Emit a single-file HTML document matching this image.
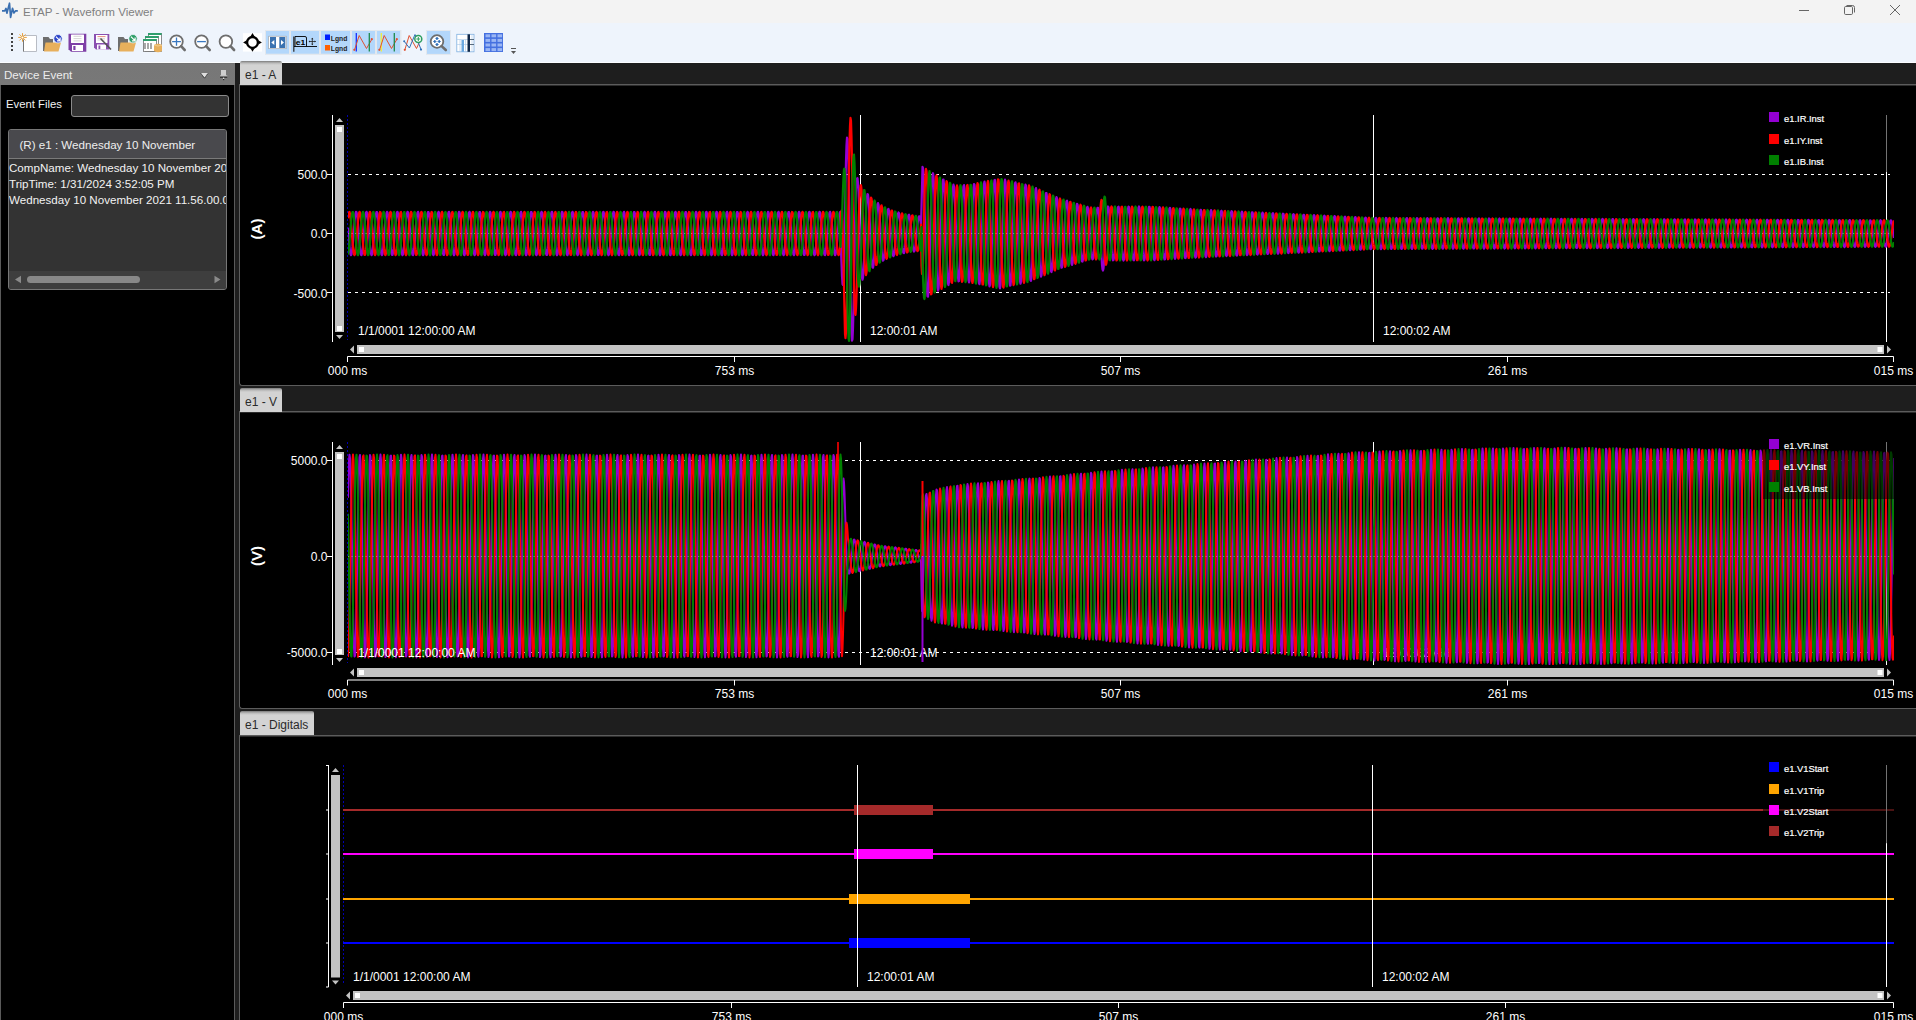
<!DOCTYPE html><html><head><meta charset="utf-8"><style>
html,body{margin:0;padding:0;width:1916px;height:1020px;overflow:hidden;background:#000;font-family:"Liberation Sans", sans-serif}
.a{position:absolute}
.t{position:absolute;white-space:pre;line-height:12px;font-family:"Liberation Sans", sans-serif}
</style></head><body>
<div class="a" style="left:0;top:0;width:1916px;height:23px;background:#f3f3f3"></div><div class="t" style="left:23px;top:6px;font-size:11.6px;color:#808080;font-weight:400;">ETAP - Waveform Viewer</div><div class="a" style="left:0;top:23px;width:1916px;height:39px;background:#eef4fc"></div><div class="a" style="left:0;top:62px;width:1916px;height:1px;background:#fbfdff"></div><svg class="a" style="left:0;top:0" width="600" height="63" viewBox="0 0 600 63"><polyline points="2,10.9 4.8,10.9 6,8.4 6.9,13.2 9.5,3.2 10.6,17.4 12.5,8.3 13.9,13 15.4,10.9 17.8,10.9" fill="none" stroke="#3a6fb0" stroke-width="1.7" stroke-linejoin="round"/><rect x="11" y="33" width="2" height="2" fill="#444"/><rect x="11" y="37" width="2" height="2" fill="#444"/><rect x="11" y="41" width="2" height="2" fill="#444"/><rect x="11" y="45" width="2" height="2" fill="#444"/><rect x="11" y="49" width="2" height="2" fill="#444"/><path d="M23.5 35.5 H36.5 V51.5 H23.5 Z" fill="#fff" stroke="#b8bcc4" stroke-width="1"/><line x1="23.5" y1="40" x2="23.5" y2="51.5" stroke="#777" stroke-width="1"/><line x1="18.20" y1="37.40" x2="26.80" y2="37.40" stroke="#e8a23e" stroke-width="1"/><line x1="19.46" y1="34.36" x2="25.54" y2="40.44" stroke="#e8a23e" stroke-width="1"/><line x1="22.50" y1="33.10" x2="22.50" y2="41.70" stroke="#e8a23e" stroke-width="1"/><line x1="25.54" y1="34.36" x2="19.46" y2="40.44" stroke="#e8a23e" stroke-width="1"/><circle cx="22.5" cy="37.4" r="1" fill="#fff"/><path d="M43 37 H48.5 L50 39 H53 V51 H43 Z" fill="#6e6e6e"/><path d="M44 51.5 L45.5 42.5 H61 L58.5 51.5 Z" fill="#e8b05c"/><circle cx="58" cy="38.7" r="4.2" fill="#2b45c9" stroke="#eef4fc" stroke-width="0.8"/><path d="M55.9 36.6 L59.9 40.6 M56.9 40.8 H60.1 V37.6" fill="none" stroke="#fff" stroke-width="1.2"/><path d="M118 37 H123.5 L125 39 H128 V51 H118 Z" fill="#6e6e6e"/><path d="M119 51.5 L120.5 42.5 H136 L133.5 51.5 Z" fill="#e8b05c"/><circle cx="133" cy="38.7" r="4.2" fill="#2e9e68" stroke="#eef4fc" stroke-width="0.8"/><path d="M130.9 36.6 L134.9 40.6 M131.9 40.8 H135.1 V37.6" fill="none" stroke="#fff" stroke-width="1.2"/><path d="M68.5 33.7 H86.3 V51.7 H71 L68.5 49.2 Z" fill="#7e3fa6"/><rect x="71" y="34.6" width="13" height="8.4" fill="#fff" rx="0.5"/><path d="M73.5 36.3 H81.5 M73.5 38.6 H81.5 M73.5 40.9 H81.5" stroke="#a0a0a0" stroke-width="0.45"/><rect x="72" y="45" width="11" height="6" fill="#fff"/><rect x="73.3" y="46" width="2.2" height="4" fill="#7e3fa6"/><path d="M94 34 H109.3 V49.5 H96 L94 47.5 Z" fill="#8a4fb0"/><rect x="96" y="35" width="11.5" height="8" fill="#fff"/><line x1="97.5" y1="36.6" x2="105.5" y2="36.6" stroke="#e0604a" stroke-width="0.7"/><path d="M97.5 38.5 H105 M97.5 40 H105" stroke="#bbb" stroke-width="0.5"/><rect x="97" y="44.5" width="9" height="5" fill="#fff"/><rect x="98.5" y="45.5" width="1.8" height="3.5" fill="#8a4fb0"/><line x1="100.5" y1="38.5" x2="111" y2="49.5" stroke="#555" stroke-width="1.6"/><rect x="148.4" y="33.4" width="13" height="18" fill="#fff" stroke="#6e6e6e" stroke-width="0.8"/><rect x="148" y="33" width="13.6" height="2" fill="#2f9e6c"/><rect x="145.4" y="36.4" width="13" height="15" fill="#fff" stroke="#6e6e6e" stroke-width="0.8"/><rect x="145" y="36" width="13.6" height="2" fill="#2f9e6c"/><rect x="143.4" y="39.4" width="13" height="12" fill="#fff" stroke="#6e6e6e" stroke-width="0.8"/><rect x="143" y="39" width="13.6" height="2" fill="#2f9e6c"/><path d="M145 43 v6 M148 43 v6 M151 43 v6" stroke="#6e6e6e" stroke-width="1.2"/><path d="M154 45 Q158 42.5 162 45 V51 Q158 53.5 154 51 Z" fill="#e8b05c"/><path d="M154 45 Q158 47 162 45" fill="none" stroke="#f5d9a8" stroke-width="0.7"/><circle cx="176.5" cy="41.6" r="6.3" fill="#fff" stroke="#6e6e6e" stroke-width="1.8"/><line x1="181.1" y1="46.2" x2="184.7" y2="50" stroke="#6e6e6e" stroke-width="2.6" stroke-linecap="round"/><path d="M172.1 41.6 H180.9 M176.5 37.4 V45.8" stroke="#3a78c0" stroke-width="1.3"/><circle cx="201.5" cy="41.6" r="6.3" fill="#fff" stroke="#6e6e6e" stroke-width="1.8"/><line x1="206.1" y1="46.2" x2="209.7" y2="50" stroke="#6e6e6e" stroke-width="2.6" stroke-linecap="round"/><path d="M197.1 41.6 H205.9" stroke="#3a78c0" stroke-width="1.3"/><circle cx="225.9" cy="41.6" r="6.3" fill="#fff" stroke="#6e6e6e" stroke-width="1.8"/><line x1="230.5" y1="46.2" x2="234.1" y2="50" stroke="#6e6e6e" stroke-width="2.6" stroke-linecap="round"/><rect x="243" y="33.2" width="19" height="18.4" fill="#fff"/><circle cx="252.5" cy="42.4" r="5.4" fill="#fff" stroke="#000" stroke-width="2.3"/><path d="M252.5 33 L254.6 36.6 H250.4 Z M252.5 51.8 L254.6 48.2 H250.4 Z M243.1 42.4 L246.7 40.3 V44.5 Z M261.9 42.4 L258.3 40.3 V44.5 Z" fill="#000"/><rect x="265" y="30" width="86" height="25" fill="#e3e8ee"/><rect x="351" y="30" width="50.5" height="25" fill="#e3e8ee"/><rect x="266" y="31" width="23" height="22.7" fill="#b3d7fb"/><rect x="291" y="31" width="28" height="22.7" fill="#b3d7fb"/><rect x="321" y="31" width="29" height="22.7" fill="#b3d7fb"/><rect x="352" y="31" width="23" height="22.7" fill="#b3d7fb"/><rect x="377" y="31" width="23" height="22.7" fill="#b3d7fb"/><rect x="268.7" y="36.2" width="17.5" height="12.5" fill="#fff" stroke="#a0a0a0" stroke-width="0.6"/><rect x="270" y="37" width="6" height="11" fill="#3a72b0"/><rect x="279.3" y="37" width="6" height="11" fill="#3a72b0"/><path d="M271.3 42.5 L274.3 40 V45 Z M284 42.5 L281 40 V45 Z" fill="#fff"/><line x1="293.8" y1="36.5" x2="293.8" y2="51.7" stroke="#333" stroke-width="1.3"/><line x1="294" y1="46.5" x2="317" y2="46.5" stroke="#000" stroke-width="0.9"/><path d="M295 46.5 V36.5 H305 Q306.5 36.5 306.5 38 V46.5" fill="none" stroke="#000" stroke-width="0.9"/><text x="295.8" y="44.8" font-family="Liberation Sans" font-size="7.6" font-weight="700" fill="#000" textLength="9.5" lengthAdjust="spacingAndGlyphs">e1</text><path d="M309 41.5 H315.5 M312.3 38.3 V44.7" stroke="#222" stroke-width="0.8"/><path d="M312.3 37.8 L311.2 39.2 H313.4 Z M312.3 45.2 L311.2 43.8 H313.4 Z M308.6 41.5 L310 40.4 V42.6 Z M316 41.5 L314.6 40.4 V42.6 Z" fill="#222"/><rect x="325" y="34.5" width="5" height="5.5" fill="#0020ff"/><rect x="325" y="45" width="5" height="5.5" fill="#ff6000"/><text x="330.8" y="40.6" font-family="Liberation Sans" font-size="8" font-weight="700" fill="#222" textLength="16.5" lengthAdjust="spacingAndGlyphs">Lgnd</text><text x="330.8" y="50.9" font-family="Liberation Sans" font-size="8" font-weight="700" fill="#222" textLength="16.5" lengthAdjust="spacingAndGlyphs">Lgnd</text><line x1="356.3" y1="33" x2="356.3" y2="51.5" stroke="#1530ff" stroke-width="1.3"/><polyline points="354.5,50 359.2,35.5 366.5,48.5 372,39" fill="none" stroke="#e05030" stroke-width="1"/><circle cx="354.3" cy="49.8" r="1.1" fill="#e05030"/><circle cx="371.8" cy="39.2" r="1.1" fill="#e05030"/><line x1="369.3" y1="33" x2="369.3" y2="51.5" stroke="#1e8a4e" stroke-width="1.3"/><line x1="381.3" y1="33" x2="381.3" y2="51.5" stroke="#f0f040" stroke-width="1.3"/><polyline points="379.5,50 384.2,35.5 391.5,48.5 397,39" fill="none" stroke="#e05030" stroke-width="1"/><circle cx="379.3" cy="49.8" r="1.1" fill="#e05030"/><circle cx="396.8" cy="39.2" r="1.1" fill="#e05030"/><line x1="394.3" y1="33" x2="394.3" y2="51.5" stroke="#1e8a4e" stroke-width="1.3"/><polyline points="404.8,50 409.2,35.5 416.5,48.5 419,43" fill="none" stroke="#e05030" stroke-width="1"/><circle cx="404.8" cy="49.8" r="1.1" fill="#e05030"/><polyline points="404,41 409.4,48 415,34.5 421.2,49.8" fill="none" stroke="#3070b8" stroke-width="1"/><circle cx="421" cy="49.6" r="1.1" fill="#3070b8"/><circle cx="404.2" cy="41.2" r="1" fill="#3070b8"/><circle cx="418.3" cy="39" r="3.5" fill="#fff" stroke="#2e9e60" stroke-width="1.5"/><path d="M416.3 39 H420.3 M418.3 37 V41" stroke="#2e9e60" stroke-width="1"/><rect x="426" y="30" width="25" height="25" fill="#e3e8ee"/><rect x="427" y="31" width="23" height="22.9" fill="#b3d7fb"/><circle cx="437" cy="41.5" r="6.3" fill="#fff" stroke="#6e6e6e" stroke-width="1.8"/><line x1="441.6" y1="46.1" x2="445.8" y2="50" stroke="#6e6e6e" stroke-width="2.6" stroke-linecap="round"/><path d="M437 37.2 l1.3 1.3 -1.3 1.3 -1.3 -1.3Z M437 43.2 l1.3 1.3 -1.3 1.3 -1.3 -1.3Z M433.5 41.5 l1.3 -1.3 1.3 1.3 -1.3 1.3Z M440.5 41.5 l-1.3 -1.3 -1.3 1.3 1.3 1.3Z" fill="#2f6fb8" stroke="#2f6fb8" stroke-width="0.8"/><rect x="456.8" y="34.3" width="17.2" height="17.5" fill="#fff" stroke="#7fb0e0" stroke-width="0.8"/><path d="M457 39.5 H474 M457 44.5 H474 M460 39.5 V51.5 M465.5 39.5 V51.5 M472 34.5 V51.5" stroke="#a8c8e8" stroke-width="0.6"/><rect x="461.5" y="40" width="2.5" height="11.8" fill="#6aa8e0"/><rect x="467.5" y="34.3" width="2.5" height="17.5" fill="#102848"/><path d="M470 39.5 H474 M470 44.5 H474" stroke="#123" stroke-width="0.6"/><rect x="484" y="33" width="19" height="19" fill="#4470e0"/><rect x="485.5" y="34.3" width="4.6" height="3" fill="#9ab6f4"/><rect x="491.5" y="34.3" width="4.6" height="3" fill="#9ab6f4"/><rect x="497.5" y="34.3" width="4.6" height="3" fill="#9ab6f4"/><rect x="485.5" y="38.9" width="4.6" height="3" fill="#9ab6f4"/><rect x="491.5" y="38.9" width="4.6" height="3" fill="#9ab6f4"/><rect x="497.5" y="38.9" width="4.6" height="3" fill="#9ab6f4"/><rect x="485.5" y="43.5" width="4.6" height="3" fill="#9ab6f4"/><rect x="491.5" y="43.5" width="4.6" height="3" fill="#9ab6f4"/><rect x="497.5" y="43.5" width="4.6" height="3" fill="#9ab6f4"/><rect x="485.5" y="48.099999999999994" width="4.6" height="3" fill="#9ab6f4"/><rect x="491.5" y="48.099999999999994" width="4.6" height="3" fill="#9ab6f4"/><rect x="497.5" y="48.099999999999994" width="4.6" height="3" fill="#9ab6f4"/><rect x="511" y="48" width="5" height="1" fill="#555"/><path d="M511 51 H516 L513.5 54 Z" fill="#555"/></svg><svg class="a" style="left:1780px;top:0" width="136" height="23" viewBox="1780 0 136 23"><line x1="1799" y1="10.5" x2="1809" y2="10.5" stroke="#666" stroke-width="1"/><rect x="1844.5" y="6.5" width="8" height="8" rx="1.2" fill="none" stroke="#666" stroke-width="1"/><path d="M1846.5 5.5 H1852.5 Q1854.5 5.5 1854.5 7.5 V12.5" fill="none" stroke="#666" stroke-width="1"/><path d="M1890 5 L1900 15 M1900 5 L1890 15" stroke="#666" stroke-width="1"/></svg><div class="a" style="left:0;top:63px;width:235px;height:957px;background:#000"></div><div class="a" style="left:0;top:63px;width:1px;height:957px;background:#5a5a5a"></div><div class="a" style="left:234px;top:85px;width:1px;height:935px;background:#5a5a5a"></div><div class="a" style="left:0;top:63px;width:235px;height:22px;background:linear-gradient(#6c6c6c 0,#777 1px,#787878 100%)"></div><div class="t" style="left:4px;top:69px;font-size:11.6px;color:#ececec;font-weight:400;">Device Event</div><svg class="a" style="left:0;top:63px" width="235" height="30" viewBox="0 63 235 30"><path d="M200.8 72.9 H208.1 L204.45 77.9 Z" fill="#dedede"/><path d="M201 73.5 L204.45 78.2 L207.9 73.5" fill="none" stroke="#111" stroke-width="0.9" stroke-dasharray="1 0.6"/><rect x="221" y="70" width="5" height="5.6" fill="#cfcfcf"/><rect x="220" y="75.5" width="7.2" height="1.1" fill="#e0e0e0"/><rect x="220" y="76.6" width="7.2" height="1" fill="#111"/><rect x="223" y="77.6" width="1.2" height="1.5" fill="#ddd"/><rect x="223" y="79.2" width="1.2" height="0.9" fill="#111"/></svg><div class="t" style="left:6px;top:98px;font-size:11.3px;color:#f2f2f2;font-weight:400;">Event Files</div><div class="a" style="left:71px;top:95px;width:156px;height:20px;background:#333;border:1px solid #8a8a8a;border-radius:3px"></div><div class="a" style="left:8px;top:129px;width:217px;height:159px;background:#333;border:1px solid #777;border-radius:3px;overflow:hidden"><div class="a" style="left:0;top:0;width:217px;height:28px;background:#49494d;border-bottom:1px solid #7a7a7a"></div><div class="a" style="left:0;top:141px;width:217px;height:18px;background:#3e3e3e"></div></div><div class="t" style="left:19.5px;top:139px;font-size:11.6px;color:#eee;font-weight:400;">(R) e1 : Wednesday 10 November</div><svg class="a" style="left:0;top:265px" width="235" height="30" viewBox="0 265 235 30"><path d="M15 279.5 L21 275.8 V283.2 Z" fill="#8a8a8a"/><path d="M220.5 279.5 L214.5 275.8 V283.2 Z" fill="#8a8a8a"/><rect x="27" y="276" width="113" height="7" rx="3.5" fill="#888"/></svg><div class="a" style="left:9px;top:158px;width:217px;height:60px;overflow:hidden"><div class="t" style="left:0px;top:4px;font-size:11.6px;color:#f2f2f2;font-weight:400;">CompName: Wednesday 10 November 2021 11.56.00.000</div><div class="t" style="left:0px;top:20px;font-size:11.6px;color:#f2f2f2;font-weight:400;">TripTime: 1/31/2024 3:52:05 PM</div><div class="t" style="left:0px;top:36px;font-size:11.6px;color:#f2f2f2;font-weight:400;">Wednesday 10 November 2021 11.56.00.000</div></div><div class="a" style="left:235px;top:63px;width:4px;height:957px;background:#1e1e1e"></div><div class="a" style="left:239px;top:63px;width:1677px;height:22px;background:#1e1e1e"></div><div class="a" style="left:239px;top:385px;width:1677px;height:27px;background:#1e1e1e"></div><div class="a" style="left:239px;top:708px;width:1677px;height:28px;background:#1e1e1e"></div><div class="a" style="left:239px;top:84px;width:1680px;height:302px;background:#000;border-left:1px solid #5c5c5c;border-bottom:1px solid #5c5c5c;border-top:1px solid #5c5c5c;border-bottom-left-radius:3px;box-sizing:border-box"></div><div class="a" style="left:239px;top:411px;width:1680px;height:298px;background:#000;border-left:1px solid #5c5c5c;border-bottom:1px solid #5c5c5c;border-top:1px solid #5c5c5c;border-bottom-left-radius:3px;box-sizing:border-box"></div><div class="a" style="left:239px;top:735px;width:1680px;height:300px;background:#000;border-left:1px solid #5c5c5c;border-top:1px solid #5c5c5c;box-sizing:border-box"></div><div class="a" style="left:240px;top:85px;width:1676px;height:1px;background:#2c2c2c"></div><div class="a" style="left:240px;top:412px;width:1676px;height:1px;background:#2c2c2c"></div><div class="a" style="left:240px;top:736px;width:1676px;height:1px;background:#2c2c2c"></div><div class="a" style="left:240px;top:61px;width:42px;height:24px;background:linear-gradient(#7a7a7a 0,#b8b8b8 2px,#d3d3d3 4px,#d3d3d3 100%);border-radius:2px 2px 0 0"></div><div class="t" style="left:245px;top:69px;font-size:12px;color:#2a2a2a;font-weight:400;">e1 - A</div><div class="a" style="left:240px;top:388px;width:42px;height:24px;background:linear-gradient(#7a7a7a 0,#b8b8b8 2px,#d3d3d3 4px,#d3d3d3 100%);border-radius:2px 2px 0 0"></div><div class="t" style="left:245px;top:396px;font-size:12px;color:#2a2a2a;font-weight:400;">e1 - V</div><div class="a" style="left:240px;top:711px;width:74px;height:24px;background:linear-gradient(#7a7a7a 0,#b8b8b8 2px,#d3d3d3 4px,#d3d3d3 100%);border-radius:2px 2px 0 0"></div><div class="t" style="left:245px;top:719px;font-size:12px;color:#2a2a2a;font-weight:400;">e1 - Digitals</div><svg class="a" style="left:0;top:0" width="1916" height="1020" viewBox="0 0 1916 1020"><defs><clipPath id="cA"><rect x="348" y="86" width="1546" height="270"/></clipPath><clipPath id="cV"><rect x="348" y="413" width="1546" height="260"/></clipPath></defs><line x1="332.5" y1="115" x2="332.5" y2="342" stroke="#fff" stroke-width="1"/><rect x="335" y="125" width="9" height="207" fill="#c3c3c3"/><polygon points="336.0,122 343.0,122 339.5,118" fill="#c3c3c3"/><polygon points="336.0,335 343.0,335 339.5,339" fill="#c3c3c3"/><rect x="337" y="127" width="5" height="5" fill="#fff"/><rect x="337" y="326" width="5" height="5" fill="#fff"/><line x1="347.5" y1="115" x2="347.5" y2="340" stroke="#0000b0" stroke-width="1" stroke-dasharray="2 2"/><polygon points="350.0,349.5 354.0,345.5 354.0,353.5" fill="#c3c3c3"/><rect x="357.0" y="345" width="1527.0" height="9" fill="#c3c3c3"/><rect x="359.0" y="347" width="5" height="5" fill="#fff"/><rect x="1877.5" y="347" width="5" height="5" fill="#fff"/><polygon points="1887,345.5 1891,349.5 1887,353.5" fill="#c3c3c3"/><line x1="347.5" y1="356.5" x2="1893.5" y2="356.5" stroke="#fff" stroke-width="1.2"/><line x1="327" y1="174.5" x2="332" y2="174.5" stroke="#fff" stroke-width="1"/><line x1="327" y1="233.5" x2="332" y2="233.5" stroke="#fff" stroke-width="1"/><line x1="327" y1="292.5" x2="332" y2="292.5" stroke="#fff" stroke-width="1"/><line x1="348" y1="174.5" x2="1890" y2="174.5" stroke="#fff" stroke-width="1" stroke-dasharray="3 4"/><line x1="348" y1="292.5" x2="1890" y2="292.5" stroke="#fff" stroke-width="1" stroke-dasharray="3 4"/><line x1="347.5" y1="356.5" x2="347.5" y2="362" stroke="#fff" stroke-width="1"/><line x1="734.5" y1="356.5" x2="734.5" y2="362" stroke="#fff" stroke-width="1"/><line x1="1120.5" y1="356.5" x2="1120.5" y2="362" stroke="#fff" stroke-width="1"/><line x1="1507.5" y1="356.5" x2="1507.5" y2="362" stroke="#fff" stroke-width="1"/><line x1="1893.5" y1="356.5" x2="1893.5" y2="362" stroke="#fff" stroke-width="1"/><line x1="860.5" y1="115" x2="860.5" y2="342" stroke="#fff" stroke-width="1"/><line x1="1373.5" y1="115" x2="1373.5" y2="342" stroke="#fff" stroke-width="1"/><line x1="1886.5" y1="115" x2="1886.5" y2="342" stroke="#fff" stroke-width="1"/><text x="870" y="335.2" font-family="Liberation Sans" font-size="12" fill="#fff">12:00:01 AM</text><text x="1383" y="335.2" font-family="Liberation Sans" font-size="12" fill="#fff">12:00:02 AM</text><g clip-path="url(#cA)"><path d="M348.0 227.7l.5 6.5 .5 6.5 .5 5.8 .5 4.6 .5 3.0 .5 1.1 .5 -.9 .5 -2.9 .5 -4.5 .5 -5.7 .5 -6.4 .5 -6.6 .5 -6.1 .5 -5.0 .5 -3.5 .5 -1.7 .5 .3 .5 2.3 .5 4.1 .5 5.4 .5 6.3 .5 6.6 .5 6.2 .5 5.4 .5 4.0 .5 2.3 .5 .3 .5 -1.7 .5 -3.6 .5 -5.0 .5 -6.1 .5 -6.6 .5 -6.4 .5 -5.7 .5 -4.5 .5 -2.8 .5 -.9 .5 1.1 .5 3.0 .5 4.7 .5 5.8 .5 6.5 .5 6.5 .5 6.0 .5 4.9 .5 3.4 .5 1.4 .5 -.5 .5 -2.5 .5 -4.1 .5 -5.6 .5 -6.3 .5 -6.6 .5 -6.2 .5 -5.3 .5 -3.8 .5 -2.1 .5 -.1 .5 1.9 .5 3.7 .5 5.2 .5 6.2 .5 6.5 .5 6.4 .5 5.7 .5 4.3 .5 2.6 .5 .7 .5 -1.3 .5 -3.2 .5 -4.8 .5 -5.9 .5 -6.6 .5 -6.5 .5 -5.9 .5 -4.7 .5 -3.2 .5 -1.3 .5 .7 .5 2.7 .5 4.3 .5 5.7 .5 6.4 .5 6.6 .5 6.1 .5 5.2 .5 3.6 .5 1.9 .5 -.1 .5 -2.1 .5 -3.9 .5 -5.3 .5 -6.2 .5 -6.6 .5 -6.3 .5 -5.6 .5 -4.1 .5 -2.4 .5 -.5 .5 1.5 .5 3.4 .5 4.9 .5 6.0 .5 6.5 .5 6.5 .5 5.8 .5 4.6 .5 3.0 .5 1.1 .5 -.9 .5 -2.9 .5 -4.5 .5 -5.7 .5 -6.4 .5 -6.6 .5 -6.1 .5 -5.0 .5 -3.5 .5 -1.7 .5 .3 .5 2.3 .5 4.1 .5 5.4 .5 6.3 .5 6.6 .5 6.2 .5 5.4 .5 4.0 .5 2.3 .5 .3 .5 -1.7 .5 -3.6 .5 -5.0 .5 -6.1 .5 -6.6 .5 -6.4 .5 -5.7 .5 -4.5 .5 -2.8 .5 -.9 .5 1.1 .5 3.0 .5 4.7 .5 5.8 .5 6.5 .5 6.5 .5 6.0 .5 4.9 .5 3.4 .5 1.4 .5 -.5 .5 -2.5 .5 -4.1 .5 -5.6 .5 -6.3 .5 -6.6 .5 -6.2 .5 -5.3 .5 -3.8 .5 -2.1 .5 -.1 .5 1.9 .5 3.7 .5 5.2 .5 6.2 .5 6.5 .5 6.4 .5 5.7 .5 4.3 .5 2.6 .5 .7 .5 -1.3 .5 -3.2 .5 -4.8 .5 -5.9 .5 -6.6 .5 -6.5 .5 -5.9 .5 -4.7 .5 -3.2 .5 -1.3 .5 .7 .5 2.7 .5 4.3 .5 5.7 .5 6.4 .5 6.6 .5 6.1 .5 5.2 .5 3.6 .5 1.9 .5 -.1 .5 -2.1 .5 -3.9 .5 -5.3 .5 -6.2 .5 -6.6 .5 -6.3 .5 -5.6 .5 -4.1 .5 -2.4 .5 -.5 .5 1.5 .5 3.4 .5 4.9 .5 6.0 .5 6.5 .5 6.5 .5 5.8 .5 4.6 .5 3.0 .5 1.1 .5 -.9 .5 -2.9 .5 -4.5 .5 -5.7 .5 -6.4 .5 -6.6 .5 -6.1 .5 -5.0 .5 -3.5 .5 -1.7 .5 .3 .5 2.3 .5 4.1 .5 5.4 .5 6.3 .5 6.6 .5 6.2 .5 5.4 .5 4.0 .5 2.3 .5 .3 .5 -1.7 .5 -3.6 .5 -5.0 .5 -6.1 .5 -6.6 .5 -6.4 .5 -5.7 .5 -4.5 .5 -2.8 .5 -.9 .5 1.1 .5 3.0 .5 4.7 .5 5.8 .5 6.5 .5 6.5 .5 6.0 .5 4.9 .5 3.4 .5 1.4 .5 -.5 .5 -2.5 .5 -4.1 .5 -5.6 .5 -6.3 .5 -6.6 .5 -6.2 .5 -5.3 .5 -3.8 .5 -2.1 .5 -.1 .5 1.9 .5 3.7 .5 5.2 .5 6.2 .5 6.5 .5 6.4 .5 5.7 .5 4.3 .5 2.6 .5 .7 .5 -1.3 .5 -3.2 .5 -4.8 .5 -5.9 .5 -6.6 .5 -6.5 .5 -5.9 .5 -4.7 .5 -3.2 .5 -1.3 .5 .7 .5 2.7 .5 4.3 .5 5.7 .5 6.4 .5 6.6 .5 6.1 .5 5.2 .5 3.6 .5 1.9 .5 -.1 .5 -2.1 .5 -3.9 .5 -5.3 .5 -6.2 .5 -6.6 .5 -6.3 .5 -5.6 .5 -4.1 .5 -2.4 .5 -.5 .5 1.5 .5 3.4 .5 4.9 .5 6.0 .5 6.5 .5 6.5 .5 5.8 .5 4.6 .5 3.0 .5 1.1 .5 -.9 .5 -2.9 .5 -4.5 .5 -5.7 .5 -6.4 .5 -6.6 .5 -6.1 .5 -5.0 .5 -3.5 .5 -1.7 .5 .3 .5 2.3 .5 4.1 .5 5.4 .5 6.3 .5 6.6 .5 6.2 .5 5.4 .5 4.0 .5 2.3 .5 .3 .5 -1.7 .5 -3.6 .5 -5.0 .5 -6.1 .5 -6.6 .5 -6.4 .5 -5.7 .5 -4.5 .5 -2.8 .5 -.9 .5 1.1 .5 3.0 .5 4.7 .5 5.8 .5 6.5 .5 6.5 .5 6.0 .5 4.9 .5 3.4 .5 1.4 .5 -.5 .5 -2.5 .5 -4.1 .5 -5.6 .5 -6.3 .5 -6.6 .5 -6.2 .5 -5.3 .5 -3.8 .5 -2.1 .5 -.1 .5 1.9 .5 3.7 .5 5.2 .5 6.2 .5 6.5 .5 6.4 .5 5.7 .5 4.3 .5 2.6 .5 .7 .5 -1.3 .5 -3.2 .5 -4.8 .5 -5.9 .5 -6.6 .5 -6.5 .5 -5.9 .5 -4.7 .5 -3.2 .5 -1.3 .5 .7 .5 2.7 .5 4.3 .5 5.7 .5 6.4 .5 6.6 .5 6.1 .5 5.2 .5 3.6 .5 1.9 .5 -.1 .5 -2.1 .5 -3.9 .5 -5.3 .5 -6.2 .5 -6.6 .5 -6.3 .5 -5.6 .5 -4.1 .5 -2.4 .5 -.5 .5 1.5 .5 3.4 .5 4.9 .5 6.0 .5 6.5 .5 6.5 .5 5.8 .5 4.6 .5 3.0 .5 1.1 .5 -.9 .5 -2.9 .5 -4.5 .5 -5.7 .5 -6.4 .5 -6.6 .5 -6.1 .5 -5.0 .5 -3.5 .5 -1.7 .5 .3 .5 2.3 .5 4.1 .5 5.4 .5 6.3 .5 6.6 .5 6.2 .5 5.4 .5 4.0 .5 2.3 .5 .3 .5 -1.7 .5 -3.6 .5 -5.0 .5 -6.1 .5 -6.6 .5 -6.4 .5 -5.7 .5 -4.5 .5 -2.8 .5 -.9 .5 1.1 .5 3.0 .5 4.7 .5 5.8 .5 6.5 .5 6.5 .5 6.0 .5 4.9 .5 3.4 .5 1.4 .5 -.5 .5 -2.5 .5 -4.1 .5 -5.6 .5 -6.3 .5 -6.6 .5 -6.2 .5 -5.3 .5 -3.8 .5 -2.1 .5 -.1 .5 1.9 .5 3.7 .5 5.2 .5 6.2 .5 6.5 .5 6.4 .5 5.7 .5 4.3 .5 2.6 .5 .7 .5 -1.3 .5 -3.2 .5 -4.8 .5 -5.9 .5 -6.6 .5 -6.5 .5 -5.9 .5 -4.7 .5 -3.2 .5 -1.3 .5 .7 .5 2.7 .5 4.3 .5 5.7 .5 6.4 .5 6.6 .5 6.1 .5 5.2 .5 3.6 .5 1.9 .5 -.1 .5 -2.1 .5 -3.9 .5 -5.3 .5 -6.2 .5 -6.6 .5 -6.3 .5 -5.6 .5 -4.1 .5 -2.4 .5 -.5 .5 1.5 .5 3.4 .5 4.9 .5 6.0 .5 6.5 .5 6.5 .5 5.8 .5 4.6 .5 3.0 .5 1.1 .5 -.9 .5 -2.9 .5 -4.5 .5 -5.7 .5 -6.4 .5 -6.6 .5 -6.1 .5 -5.0 .5 -3.5 .5 -1.7 .5 .3 .5 2.3 .5 4.1 .5 5.4 .5 6.3 .5 6.6 .5 6.2 .5 5.4 .5 4.0 .5 2.3 .5 .3 .5 -1.7 .5 -3.6 .5 -5.0 .5 -6.1 .5 -6.6 .5 -6.4 .5 -5.7 .5 -4.5 .5 -2.8 .5 -.9 .5 1.1 .5 3.0 .5 4.7 .5 5.8 .5 6.5 .5 6.5 .5 6.0 .5 4.9 .5 3.4 .5 1.4 .5 -.5 .5 -2.5 .5 -4.1 .5 -5.6 .5 -6.3 .5 -6.6 .5 -6.2 .5 -5.3 .5 -3.8 .5 -2.1 .5 -.1 .5 1.9 .5 3.7 .5 5.2 .5 6.2 .5 6.5 .5 6.4 .5 5.7 .5 4.3 .5 2.6 .5 .7 .5 -1.3 .5 -3.2 .5 -4.8 .5 -5.9 .5 -6.6 .5 -6.5 .5 -5.9 .5 -4.7 .5 -3.2 .5 -1.3 .5 .7 .5 2.7 .5 4.3 .5 5.7 .5 6.4 .5 6.6 .5 6.1 .5 5.2 .5 3.6 .5 1.9 .5 -.1 .5 -2.1 .5 -3.9 .5 -5.3 .5 -6.2 .5 -6.6 .5 -6.3 .5 -5.6 .5 -4.1 .5 -2.4 .5 -.5 .5 1.5 .5 3.4 .5 4.9 .5 6.0 .5 6.5 .5 6.5 .5 5.8 .5 4.6 .5 3.0 .5 1.1 .5 -.9 .5 -2.9 .5 -4.5 .5 -5.7 .5 -6.4 .5 -6.6 .5 -6.1 .5 -5.0 .5 -3.5 .5 -1.7 .5 .3 .5 2.3 .5 4.1 .5 5.4 .5 6.3 .5 6.6 .5 6.2 .5 5.4 .5 4.0 .5 2.3 .5 .3 .5 -1.7 .5 -3.6 .5 -5.0 .5 -6.1 .5 -6.6 .5 -6.4 .5 -5.7 .5 -4.5 .5 -2.8 .5 -.9 .5 1.1 .5 3.0 .5 4.7 .5 5.8 .5 6.5 .5 6.5 .5 6.0 .5 4.9 .5 3.4 .5 1.4 .5 -.5 .5 -2.5 .5 -4.1 .5 -5.6 .5 -6.3 .5 -6.6 .5 -6.2 .5 -5.3 .5 -3.8 .5 -2.1 .5 -.1 .5 1.9 .5 3.7 .5 5.2 .5 6.2 .5 6.5 .5 6.4 .5 5.7 .5 4.3 .5 2.6 .5 .7 .5 -1.3 .5 -3.2 .5 -4.8 .5 -5.9 .5 -6.6 .5 -6.5 .5 -5.9 .5 -4.7 .5 -3.2 .5 -1.3 .5 .7 .5 2.7 .5 4.3 .5 5.7 .5 6.4 .5 6.6 .5 6.1 .5 5.2 .5 3.6 .5 1.9 .5 -.1 .5 -2.1 .5 -3.9 .5 -5.3 .5 -6.2 .5 -6.6 .5 -6.3 .5 -5.6 .5 -4.1 .5 -2.4 .5 -.5 .5 1.5 .5 3.4 .5 4.9 .5 6.0 .5 6.5 .5 6.5 .5 5.8 .5 4.6 .5 3.0 .5 1.1 .5 -.9 .5 -2.9 .5 -4.5 .5 -5.7 .5 -6.4 .5 -6.6 .5 -6.1 .5 -5.0 .5 -3.5 .5 -1.7 .5 .3 .5 2.3 .5 4.1 .5 5.4 .5 6.3 .5 6.6 .5 6.2 .5 5.4 .5 4.0 .5 2.3 .5 .3 .5 -1.7 .5 -3.6 .5 -5.0 .5 -6.1 .5 -6.6 .5 -6.4 .5 -5.7 .5 -4.5 .5 -2.8 .5 -.9 .5 1.1 .5 3.0 .5 4.7 .5 5.8 .5 6.5 .5 6.5 .5 6.0 .5 4.9 .5 3.4 .5 1.4 .5 -.5 .5 -2.5 .5 -4.1 .5 -5.6 .5 -6.3 .5 -6.6 .5 -6.2 .5 -5.3 .5 -3.8 .5 -2.1 .5 -.1 .5 1.9 .5 3.7 .5 5.2 .5 6.2 .5 6.5 .5 6.4 .5 5.7 .5 4.3 .5 2.6 .5 .7 .5 -1.3 .5 -3.2 .5 -4.8 .5 -5.9 .5 -6.6 .5 -6.5 .5 -5.9 .5 -4.7 .5 -3.2 .5 -1.3 .5 .7 .5 2.7 .5 4.3 .5 5.7 .5 6.4 .5 6.6 .5 6.1 .5 5.2 .5 3.6 .5 1.9 .5 -.1 .5 -2.1 .5 -3.9 .5 -5.3 .5 -6.2 .5 -6.6 .5 -6.3 .5 -5.6 .5 -4.1 .5 -2.4 .5 -.5 .5 1.5 .5 3.4 .5 4.9 .5 6.0 .5 6.5 .5 6.5 .5 5.8 .5 4.6 .5 3.0 .5 1.1 .5 -.9 .5 -2.9 .5 -4.5 .5 -5.7 .5 -6.4 .5 -6.6 .5 -6.1 .5 -5.0 .5 -3.5 .5 -1.7 .5 .3 .5 2.3 .5 4.1 .5 5.4 .5 6.3 .5 6.6 .5 6.2 .5 5.4 .5 4.0 .5 2.3 .5 .3 .5 -1.7 .5 -3.6 .5 -5.0 .5 -6.1 .5 -6.6 .5 -6.4 .5 -5.7 .5 -4.5 .5 -2.8 .5 -.9 .5 1.1 .5 3.0 .5 4.7 .5 5.8 .5 6.5 .5 6.5 .5 6.0 .5 4.9 .5 3.4 .5 1.4 .5 -.5 .5 -2.5 .5 -4.1 .5 -5.6 .5 -6.3 .5 -6.6 .5 -6.2 .5 -5.3 .5 -3.8 .5 -2.1 .5 -.1 .5 1.9 .5 3.7 .5 5.2 .5 6.2 .5 6.5 .5 6.4 .5 5.7 .5 4.3 .5 2.6 .5 .7 .5 -1.3 .5 -3.2 .5 -4.8 .5 -5.9 .5 -6.6 .5 -6.5 .5 -5.9 .5 -4.7 .5 -3.2 .5 -1.3 .5 .7 .5 2.7 .5 4.3 .5 5.7 .5 6.4 .5 6.6 .5 6.1 .5 5.2 .5 3.6 .5 1.9 .5 -.1 .5 -2.1 .5 -3.9 .5 -5.3 .5 -6.2 .5 -6.6 .5 -6.3 .5 -5.6 .5 -4.1 .5 -2.4 .5 -.5 .5 1.5 .5 3.4 .5 4.9 .5 6.0 .5 6.5 .5 6.5 .5 5.8 .5 4.6 .5 3.0 .5 1.1 .5 -.9 .5 -2.9 .5 -4.5 .5 -5.7 .5 -6.4 .5 -6.6 .5 -6.1 .5 -5.0 .5 -3.5 .5 -1.7 .5 .3 .5 2.3 .5 4.1 .5 5.4 .5 6.3 .5 6.6 .5 6.2 .5 5.4 .5 4.0 .5 2.3 .5 .3 .5 -1.7 .5 -3.6 .5 -5.0 .5 -6.1 .5 -6.6 .5 -6.4 .5 -5.7 .5 -4.5 .5 -2.8 .5 -.9 .5 1.1 .5 3.0 .5 4.7 .5 5.8 .5 6.5 .5 6.5 .5 6.0 .5 4.9 .5 3.4 .5 1.4 .5 -.5 .5 -2.5 .5 -4.1 .5 -5.6 .5 -6.3 .5 -6.6 .5 -6.2 .5 -5.3 .5 -3.8 .5 -2.1 .5 -.1 .5 39.4 .5 12.0 .5 13.0 .5 7.5 .5 1.0 .5 -7.3 .5 -16.1 .5 -24.3 .5 -28.1 .5 -26.3 .5 -22.0 .5 -15.6 .5 -7.6 .5 1.2 .5 10.0 .5 18.1 .5 24.6 .5 28.9 .5 32.4 .5 32.5 .5 28.3 .5 18.4 .5 8.7 .5 -1.5 .5 -11.0 .5 -19.2 .5 -25.3 .5 -29.5 .5 -27.2 .5 -21.3 .5 -15.7 .5 -9.0 .5 -2.5 .5 -.4 .5 4.7 .5 6.8 .5 12.9 .5 15.0 .5 15.5 .5 14.8 .5 13.1 .5 10.1 .5 6.4 .5 2.3 .5 -2.1 .5 -6.0 .5 -9.3 .5 -11.6 .5 -12.9 .5 -12.9 .5 -11.7 .5 -9.6 .5 -6.5 .5 -3.1 .5 .7 .5 4.1 .5 7.2 .5 9.5 .5 10.9 .5 11.2 .5 10.6 .5 9.0 .5 6.5 .5 3.6 .5 .5 .5 -2.7 .5 -5.5 .5 -7.7 .5 -9.2 .5 -9.9 .5 -9.5 .5 -8.4 .5 -6.5 .5 -4.0 .5 -1.3 .5 1.5 .5 4.1 .5 6.3 .5 7.8 .5 8.7 .5 8.6 .5 7.9 .5 6.3 .5 4.4 .5 1.9 .5 -.6 .5 -2.9 .5 -5.1 .5 -6.7 .5 -7.6 .5 -7.9 .5 -7.4 .5 -6.2 .5 -4.5 .5 -2.5 .5 -.2 .5 2.1 .5 4.0 .5 5.7 .5 6.8 .5 7.1 .5 7.0 .5 6.0 .5 4.7 .5 2.9 .5 .8 .5 -1.2 .5 -3.2 .5 -4.8 .5 -6.0 .5 -6.5 .5 -6.6 .5 -5.9 .5 -4.8 .5 -3.2 .5 -1.4 .5 .6 .5 2.4 .5 4.0 .5 5.3 .5 6.0 .5 6.2 .5 5.8 .5 4.9 .5 3.5 .5 1.8 .5 .1 .5 -1.8 .5 -3.4 .5 -4.6 .5 -5.5 .5 -5.9 .5 -5.6 .5 -5.0 .5 -3.7 .5 -2.3 .5 -.6 .5 1.2 .5 2.8 .5 4.0 .5 5.1 .5 5.5 .5 5.5 .5 5.0 .5 4.0 .5 2.6 .5 1.1 .5 -.6 .5 -2.2 .5 -3.6 .5 -4.6 .5 -5.2 .5 -5.4 .5 -5.0 .5 -4.1 .5 -3.0 .5 -1.5 .5 .1 .5 1.6 .5 3.1 .5 4.2 .5 -17.4 .5 -20.7 .5 -20.3 .5 1.3 .5 7.3 .5 12.5 .5 16.7 .5 19.1 .5 19.8 .5 18.7 .5 15.9 .5 11.6 .5 6.3 .5 .5 .5 -5.3 .5 -10.5 .5 -14.8 .5 -17.7 .5 -18.8 .5 -18.2 .5 -16.0 .5 -12.4 .5 -7.5 .5 -2.2 .5 3.4 .5 8.7 .5 12.9 .5 16.0 .5 17.7 .5 17.6 .5 16.0 .5 12.9 .5 8.7 .5 3.6 .5 -1.7 .5 -6.7 .5 -11.1 .5 -14.6 .5 -16.5 .5 -16.9 .5 -15.8 .5 -13.3 .5 -9.5 .5 -5.0 .5 .1 .5 5.0 .5 9.5 .5 12.9 .5 15.3 .5 16.1 .5 15.5 .5 13.4 .5 10.2 .5 6.1 .5 1.3 .5 -3.4 .5 -7.8 .5 -11.4 .5 -13.9 .5 -15.2 .5 -14.9 .5 -13.5 .5 -10.6 .5 -7.0 .5 -2.6 .5 1.9 .5 6.2 .5 9.8 .5 12.5 .5 14.2 .5 14.5 .5 13.7 .5 11.4 .5 8.2 .5 4.2 .5 -.2 .5 -4.7 .5 -8.6 .5 -11.8 .5 -13.8 .5 -14.7 .5 -14.2 .5 -12.3 .5 -9.4 .5 -5.4 .5 -1.1 .5 3.3 .5 7.5 .5 11.1 .5 13.4 .5 14.7 .5 14.6 .5 13.1 .5 10.4 .5 6.8 .5 2.4 .5 -2.0 .5 -6.4 .5 -10.1 .5 -12.9 .5 -14.6 .5 -15.0 .5 -13.9 .5 -11.5 .5 -8.1 .5 -3.9 .5 .6 .5 5.2 .5 9.2 .5 12.5 .5 14.5 .5 15.3 .5 14.6 .5 12.7 .5 9.4 .5 5.3 .5 .8 .5 -3.9 .5 -8.3 .5 -11.8 .5 -14.4 .5 -15.5 .5 -15.3 .5 -13.6 .5 -10.7 .5 -6.8 .5 -2.2 .5 2.6 .5 7.2 .5 11.0 .5 14.0 .5 15.7 .5 15.8 .5 14.5 .5 12.0 .5 8.2 .5 3.7 .5 -1.2 .5 -6.0 .5 -10.2 .5 -13.5 .5 -15.6 .5 -16.2 .5 -15.4 .5 -13.1 .5 -9.6 .5 -5.2 .5 -.3 .5 4.7 .5 9.2 .5 12.8 .5 15.4 .5 16.5 .5 16.1 .5 14.2 .5 11.0 .5 6.7 .5 1.8 .5 -3.4 .5 -8.2 .5 -12.1 .5 -15.0 .5 -16.4 .5 -16.3 .5 -14.7 .5 -11.8 .5 -7.7 .5 -3.1 .5 1.9 .5 6.7 .5 10.8 .5 13.9 .5 15.8 .5 16.1 .5 15.0 .5 12.5 .5 8.9 .5 4.4 .5 -.4 .5 -5.2 .5 -9.4 .5 -12.9 .5 -15.0 .5 -15.8 .5 -15.1 .5 -13.1 .5 -9.8 .5 -5.7 .5 -1.0 .5 3.7 .5 8.0 .5 11.7 .5 14.1 .5 15.4 .5 15.1 .5 13.5 .5 10.7 .5 6.8 .5 2.4 .5 -2.2 .5 -6.7 .5 -10.4 .5 -13.2 .5 -14.8 .5 -15.0 .5 -13.8 .5 -11.4 .5 -7.8 .5 -3.7 .5 .9 .5 5.2 .5 9.2 .5 12.2 .5 14.1 .5 14.7 .5 13.9 .5 11.9 .5 8.8 .5 4.8 .5 .4 .5 -4.0 .5 -7.9 .5 -11.0 .5 -13.3 .5 -14.1 .5 -13.7 .5 -12.0 .5 -9.3 .5 -5.8 .5 -1.6 .5 2.6 .5 6.4 .5 9.8 .5 12.1 .5 13.3 .5 13.3 .5 12.0 .5 9.8 .5 6.5 .5 2.7 .5 -1.2 .5 -5.1 .5 -8.4 .5 -11.0 .5 -12.4 .5 -12.8 .5 -11.9 .5 -10.0 .5 -7.1 .5 -3.7 .5 .1 .5 3.7 .5 7.1 .5 9.8 .5 11.4 .5 12.2 .5 11.6 .5 10.1 .5 7.6 .5 4.5 .5 1.0 .5 -2.5 .5 -5.9 .5 -8.5 .5 -10.5 .5 -11.3 .5 -11.2 .5 -10.1 .5 -8.0 .5 -5.1 .5 -2.0 .5 1.4 .5 4.7 .5 7.3 .5 9.4 .5 10.6 .5 10.7 .5 9.8 .5 8.2 .5 5.8 .5 2.8 .5 -.3 .5 -3.5 .5 -6.2 .5 -8.4 .5 -9.8 .5 -10.2 .5 -9.8 .5 -8.4 .5 -6.2 .5 -3.6 .5 -.6 .5 2.4 .5 5.2 .5 7.5 .5 9.0 .5 9.8 .5 9.5 .5 8.5 .5 6.7 .5 4.2 .5 1.4 .5 -1.5 .5 -4.2 .5 -6.5 .5 -8.3 .5 -9.1 .5 -9.3 .5 -8.4 .5 -6.9 .5 -4.8 .5 -2.1 .5 .6 .5 3.2 .5 5.6 .5 7.4 .5 8.6 .5 8.8 .5 8.3 .5 7.1 .5 5.2 .5 2.8 .5 .2 .5 -2.4 .5 -4.7 .5 -6.6 .5 -7.8 .5 -8.4 .5 -8.1 .5 -7.1 .5 -5.5 .5 -3.3 .5 -.9 .5 1.5 .5 3.8 .5 5.7 .5 7.2 .5 7.8 .5 7.8 .5 7.2 .5 5.9 .5 4.0 .5 1.7 .5 -.6 .5 -3.0 .5 -5.0 .5 -6.6 .5 -7.6 .5 -7.9 .5 -7.5 .5 -6.3 .5 -4.6 .5 -2.4 .5 -.1 .5 2.2 .5 4.5 .5 6.2 .5 7.4 .5 8.1 .5 9.6 .5 9.9 .5 9.1 .5 4.5 .5 1.2 .5 -2.3 .5 -5.4 .5 -8.2 .5 -10.1 .5 -11.1 .5 -9.6 .5 -7.3 .5 -4.4 .5 -4.0 .5 -1.6 .5 .9 .5 3.3 .5 5.4 .5 7.0 .5 8.0 .5 8.2 .5 7.7 .5 6.4 .5 4.5 .5 2.4 .5 -.2 .5 -2.6 .5 -4.8 .5 -6.6 .5 -7.8 .5 -8.2 .5 -7.9 .5 -6.8 .5 -5.2 .5 -3.0 .5 -.6 .5 1.9 .5 4.2 .5 6.1 .5 7.5 .5 8.1 .5 8.1 .5 7.2 .5 5.7 .5 3.8 .5 1.3 .5 -1.1 .5 -3.6 .5 -5.6 .5 -7.1 .5 -8.0 .5 -8.2 .5 -7.6 .5 -6.2 .5 -4.4 .5 -2.1 .5 .4 .5 2.9 .5 5.0 .5 6.7 .5 7.9 .5 8.2 .5 7.8 .5 6.7 .5 5.0 .5 2.8 .5 .3 .5 -2.1 .5 -4.4 .5 -6.3 .5 -7.6 .5 -8.1 .5 -8.0 .5 -7.2 .5 -5.5 .5 -3.5 .5 -1.1 .5 1.4 .5 3.8 .5 5.7 .5 7.3 .5 8.1 .5 8.1 .5 7.5 .5 6.0 .5 4.2 .5 1.8 .5 -.6 .5 -3.1 .5 -5.2 .5 -6.9 .5 -7.9 .5 -8.2 .5 -7.7 .5 -6.6 .5 -4.8 .5 -2.5 .5 -.1 .5 2.3 .5 4.7 .5 6.4 .5 7.7 .5 8.1 .5 7.9 .5 7.0 .5 5.3 .5 3.2 .5 .8 .5 -1.7 .5 -3.9 .5 -5.9 .5 -7.3 .5 -8.0 .5 -7.9 .5 -7.2 .5 -5.8 .5 -3.9 .5 -1.5 .5 .9 .5 3.3 .5 5.3 .5 6.8 .5 7.8 .5 7.9 .5 7.5 .5 6.1 .5 4.5 .5 2.2 .5 -.2 .5 -2.6 .5 -4.6 .5 -6.4 .5 -7.5 .5 -7.8 .5 -7.6 .5 -6.5 .5 -5.0 .5 -2.8 .5 -.6 .5 1.8 .5 4.1 .5 5.8 .5 7.1 .5 7.8 .5 7.6 .5 6.8 .5 5.4 .5 3.5 .5 1.2 .5 -1.1 .5 -3.3 .5 -5.3 .5 -6.7 .5 -7.5 .5 -7.7 .5 -7.0 .5 -5.9 .5 -4.0 .5 -1.9 .5 .4 .5 2.7 .5 4.7 .5 6.2 .5 7.3 .5 7.6 .5 7.2 .5 6.1 .5 4.6 .5 2.6 .5 .2 .5 -1.9 .5 -4.1 .5 -5.8 .5 -6.9 .5 -7.5 .5 -7.3 .5 -6.4 .5 -5.1 .5 -3.1 .5 -1.0 .5 1.3 .5 3.4 .5 5.3 .5 6.5 .5 7.3 .5 7.4 .5 6.7 .5 5.4 .5 3.7 .5 1.6 .5 -.6 .5 -2.8 .5 -4.7 .5 -6.1 .5 -7.0 .5 -7.3 .5 -6.9 .5 -5.8 .5 -4.2 .5 -2.3 .5 .0 .5 2.1 .5 4.1 .5 5.7 .5 6.7 .5 7.2 .5 7.0 .5 6.1 .5 4.7 .5 2.9 .5 .7 .5 -1.5 .5 -3.5 .5 -5.2 .5 -6.4 .5 -7.1 .5 -7.0 .5 -6.4 .5 -5.1 .5 -3.4 .5 -1.4 .5 .9 .5 2.8 .5 4.7 .5 6.1 .5 6.8 .5 7.1 .5 6.6 .5 5.5 .5 3.9 .5 1.9 .5 -.1 .5 -2.3 .5 -4.1 .5 -5.7 .5 -6.6 .5 -7.0 .5 -6.7 .5 -5.8 .5 -4.4 .5 -2.5 .5 -.5 .5 1.6 .5 3.6 .5 5.2 .5 6.3 .5 6.9 .5 6.7 .5 6.1 .5 4.8 .5 3.1 .5 1.1 .5 -1.0 .5 -2.9 .5 -4.7 .5 -6.0 .5 -6.7 .5 -6.8 .5 -6.3 .5 -5.2 .5 -3.6 .5 -1.7 .5 .4 .5 2.4 .5 4.1 .5 5.6 .5 6.5 .5 6.7 .5 6.5 .5 5.5 .5 4.1 .5 2.2 .5 .3 .5 -1.8 .5 -3.6 .5 -5.1 .5 -6.2 .5 -6.7 .5 -6.5 .5 -5.8 .5 -4.5 .5 -2.8 .5 -.9 .5 1.2 .5 3.0 .5 4.7 .5 5.9 .5 6.5 .5 6.6 .5 5.9 .5 4.9 .5 3.3 .5 1.5 .5 -.6 .5 -2.4 .5 -4.2 .5 -5.5 .5 -6.3 .5 -6.6 .5 -6.1 .5 -5.2 .5 -3.8 .5 -2.0 .5 -.1 .5 1.9 .5 3.7 .5 5.1 .5 6.1 .5 6.4 .5 6.3 .5 5.4 .5 4.2 .5 2.6 .5 .6 .5 -1.3 .5 -3.1 .5 -4.7 .5 -5.7 .5 -6.4 .5 -6.3 .5 -5.7 .5 -4.5 .5 -3.1 .5 -1.2 .5 .7 .5 2.6 .5 4.2 .5 5.4 .5 6.2 .5 6.3 .5 5.8 .5 4.9 .5 3.5 .5 1.8 .5 -.2 .5 -2.0 .5 -3.7 .5 -5.0 .5 -5.9 .5 -6.3 .5 -5.9 .5 -5.2 .5 -3.9 .5 -2.3 .5 -.4 .5 1.4 .5 3.2 .5 4.6 .5 5.7 .5 6.1 .5 6.0 .5 5.4 .5 4.3 .5 2.8 .5 1.0 .5 -.9 .5 -2.7 .5 -4.2 .5 -5.3 .5 -5.9 .5 -6.1 .5 -5.6 .5 -4.6 .5 -3.2 .5 -1.5 .5 .3 .5 2.1 .5 3.7 .5 5.0 .5 5.8 .5 6.0 .5 5.7 .5 4.9 .5 3.6 .5 2.0 .5 .2 .5 -1.5 .5 -3.3 .5 -4.5 .5 -5.5 .5 -6.0 .5 -5.7 .5 -5.2 .5 -4.0 .5 -2.4 .5 -.8 .5 1.0 .5 2.7 .5 4.2 .5 5.2 .5 5.8 .5 5.8 .5 5.3 .5 4.3 .5 2.9 .5 1.3 .5 -.5 .5 -2.2 .5 -3.7 .5 -4.9 .5 -5.5 .5 -5.8 .5 -5.5 .5 -4.6 .5 -3.3 .5 -1.8 .5 .0 .5 1.7 .5 3.2 .5 4.5 .5 5.4 .5 5.7 .5 5.5 .5 4.8 .5 3.7 .5 2.3 .5 .5 .5 -1.1 .5 -2.8 .5 -4.1 .5 -5.1 .5 -5.6 .5 -5.5 .5 -5.0 .5 -4.1 .5 -2.7 .5 -1.0 .5 .6 .5 2.3 .5 3.7 .5 4.8 .5 5.4 .5 5.5 .5 5.2 .5 4.3 .5 3.1 .5 1.5 .5 -.1 .5 -1.8 .5 -3.2 .5 -4.5 .5 -5.2 .5 -5.5 .5 -5.2 .5 -4.6 .5 -3.4 .5 -2.0 .5 -.4 .5 1.3 .5 2.8 .5 4.1 .5 4.9 .5 5.4 .5 5.3 .5 4.8 .5 3.7 .5 2.4 .5 .9 .5 -.8 .5 -2.3 .5 -3.7 .5 -4.7 .5 -5.2 .5 -5.3 .5 -4.9 .5 -4.0 .5 -2.8 .5 -1.4 .5 .3 .5 1.9 .5 3.2 .5 4.4 .5 5.0 .5 5.3 .5 5.0 .5 4.3 .5 3.1 .5 1.8 .5 .2 .5 -1.4 .5 -2.8 .5 -4.0 .5 -4.8 .5 -5.2 .5 -5.0 .5 -4.5 .5 -3.5 .5 -2.2 .5 -.6 .5 .9 .5 2.3 .5 3.7 .5 4.5 .5 5.0 .5 5.1 .5 4.6 .5 3.8 .5 2.5 .5 1.2 .5 -.5 .5 -1.9 .5 -3.2 .5 -4.3 .5 -4.8 .5 -5.1 .5 -4.7 .5 -4.0 .5 -2.9 .5 -1.5 .5 -.1 .5 1.5 .5 2.8 .5 3.9 .5 4.7 .5 4.9 .5 4.8 .5 4.2 .5 3.3 .5 1.9 .5 .5 .5 -1.0 .5 -2.4 .5 -3.6 .5 -4.4 .5 -4.8 .5 -4.9 .5 -4.3 .5 -3.5 .5 -2.3 .5 -.9 .5 .5 .5 2.0 .5 3.2 .5 4.1 .5 4.7 .5 4.8 .5 4.5 .5 3.7 .5 2.6 .5 1.4 .5 -.1 .5 -1.6 .5 -2.8 .5 -3.8 .5 -4.5 .5 -4.7 .5 -4.6 .5 -4.0 .5 -2.9 .5 -1.8 .5 -.3 .5 1.1 .5 2.4 .5 3.5 .5 4.3 .5 4.7 .5 4.7 .5 4.1 .5 3.4 .5 2.1 .5 .8 .5 -.7 .5 -2.0 .5 -3.3 .5 -4.1 .5 -4.6 .5 -4.7 .5 -4.4 .5 -3.6 .5 -2.5 .5 -1.2 .5 .3 .5 1.6 .5 2.9 .5 3.9 .5 4.5 .5 4.7 .5 4.5 .5 3.9 .5 2.8 .5 1.6 .5 .2 .5 -1.2 .5 -2.5 .5 -3.6 .5 -4.4 .5 -4.7 .5 -4.6 .5 -4.1 .5 -3.2 .5 -2.0 .5 -.6 .5 .8 .5 2.2 .5 3.3 .5 4.1 .5 4.7 .5 4.6 .5 4.3 .5 3.5 .5 2.4 .5 1.0 .5 -.3 .5 -1.8 .5 -3.0 .5 -3.9 .5 -4.6 .5 -4.7 .5 -4.4 .5 -3.7 .5 -2.8 .5 -1.4 .5 -.1 .5 1.4 .5 2.6 .5 3.7 .5 4.4 .5 4.7 .5 4.5 .5 4.0 .5 3.1 .5 1.8 .5 .5 .5 -.9 .5 -2.3 .5 -3.4 .5 -4.2 .5 -4.6 .5 -4.7 .5 -4.2 .5 -3.3 .5 -2.3 .5 -.9 .5 .5 .5 1.9 .5 3.1 .5 4.0 .5 4.5 .5 4.7 .5 4.4 .5 3.6 .5 2.6 .5 1.3 .5 .0 .5 -1.5 .5 -2.8 .5 -3.7 .5 -4.4 .5 -4.7 .5 -4.5 .5 -3.9 .5 -2.9 .5 -1.8 .5 -.3 .5 1.1 .5 2.4 .5 3.4 .5 4.3 .5 4.6 .5 4.6 .5 4.1 .5 3.3 .5 2.1 .5 .7 .5 -.6 .5 -2.0 .5 -3.2 .5 -4.1 .5 -4.5 .5 -4.6 .5 -4.3 .5 -3.6 .5 -2.4 .5 -1.2 .5 .2 .5 1.6 .5 2.9 .5 3.8 .5 4.4 .5 4.7 .5 4.4 .5 3.8 .5 2.8 .5 1.6 .5 .2 .5 -1.2 .5 -2.5 .5 -3.6 .5 -4.3 .5 -4.6 .5 -4.5 .5 -4.0 .5 -3.2 .5 -1.9 .5 -.7 .5 .8 .5 2.2 .5 3.2 .5 4.1 .5 4.6 .5 4.6 .5 4.2 .5 3.4 .5 2.4 .5 1.0 .5 -.4 .5 -1.7 .5 -3.0 .5 -3.8 .5 -4.5 .5 -4.6 .5 -4.4 .5 -3.7 .5 -2.7 .5 -1.4 .5 -.1 .5 1.4 .5 2.6 .5 3.6 .5 4.3 .5 4.6 .5 4.5 .5 3.9 .5 3.1 .5 1.8 .5 .5 .5 -1.0 .5 -2.2 .5 -3.3 .5 -4.2 .5 -4.5 .5 -4.6 .5 -4.1 .5 -3.4 .5 -2.2 .5 -.9 .5 .6 .5 1.8 .5 3.1 .5 3.9 .5 4.5 .5 4.6 .5 4.2 .5 3.6 .5 2.6 .5 1.3 .5 -.1 .5 -1.4 .5 -2.7 .5 -3.7 .5 -4.4 .5 -4.6 .5 -4.4 .5 -3.8 .5 -2.9 .5 -1.7 .5 -.4 .5 1.1 .5 2.3 .5 3.5 .5 4.1 .5 4.6 .5 4.5 .5 4.1 .5 3.2 .5 2.0 .5 .8 .5 -.7 .5 -1.9 .5 -3.2 .5 -3.9 .5 -4.5 .5 -4.6 .5 -4.2 .5 -3.5 .5 -2.4 .5 -1.2 .5 .2 .5 1.6 .5 2.8 .5 3.8 .5 4.4 .5 4.5 .5 4.4 .5 3.7 .5 2.8 .5 1.6 .5 .2 .5 -1.2 .5 -2.5 .5 -3.5 .5 -4.2 .5 -4.6 .5 -4.4 .5 -4.0 .5 -3.1 .5 -1.9 .5 -.6 .5 .8 .5 2.0 .5 3.3 .5 4.0 .5 4.5 .5 4.5 .5 4.2 .5 3.3 .5 2.3 .5 1.1 .5 -.4 .5 -1.7 .5 -2.9 .5 -3.8 .5 -4.4 .5 -4.6 .5 -4.3 .5 -3.6 .5 -2.7 .5 -1.4 .5 .0 .5 1.3 .5 2.5 .5 3.6 .5 4.3 .5 4.5 .5 4.4 .5 3.9 .5 3.0 .5 1.8 .5 .4 .5 -.9 .5 -2.2 .5 -3.3 .5 -4.1 .5 -4.4 .5 -4.5 .5 -4.1 .5 -3.3 .5 -2.1 .5 -.9 .5 .5 .5 1.8 .5 3.0 .5 3.9 .5 4.4 .5 4.5 .5 4.2 .5 3.6 .5 2.5 .5 1.3 .5 -.1 .5 -1.5 .5 -2.6 .5 -3.7 .5 -4.2 .5 -4.6 .5 -4.3 .5 -3.8 .5 -2.8 .5 -1.7 .5 -.3 .5 1.0 .5 2.3 .5 3.4 .5 4.1 .5 4.5 .5 4.4 .5 4.0 .5 3.2 .5 2.0 .5 .8 .5 -.7 .5 -1.9 .5 -3.1 .5 -3.9 .5 -4.4 .5 -4.5 .5 -4.2 .5 -3.4 .5 -2.4 .5 -1.2 .5 .3 .5 1.5 .5 2.8 .5 3.7 .5 4.3 .5 4.5 .5 4.3 .5 3.7 .5 2.7 .5 1.5 .5 .2 .5 -1.1 .5 -2.5 .5 -3.4 .5 -4.2 .5 -4.4 .5 -4.4 .5 -3.9 .5 -3.1 .5 -1.9 .5 -.6 .5 .8 .5 2.0 .5 3.2 .5 4.0 .5 4.4 .5 4.4 .5 4.1 .5 3.4 .5 2.2 .5 1.0 .5 -.3 .5 -1.7 .5 -2.9 .5 -3.7 .5 -4.3 .5 -4.5 .5 -4.3 .5 -3.5 .5 -2.6 .5 -1.4 .5 -.1 .5 1.3 .5 2.5 .5 3.5 .5 4.2 .5 4.5 .5 4.3 .5 3.8 .5 3.0 .5 1.7 .5 .5 .5 -.9 .5 -2.2 .5 -3.2 .5 -4.0 .5 -4.4 .5 -4.5 .5 -4.0 .5 -3.2 .5 -2.1 .5 -.9 .5 .5 .5 1.8 .5 3.0 .5 3.8 .5 4.3 .5 4.5 .5 4.1 .5 3.5 .5 2.5 .5 1.2 .5 .0 .5 -1.5 .5 -2.6 .5 -3.6 .5 -4.2 .5 -4.4 .5 -4.3 .5 -3.7 .5 -2.8 .5 -1.7 .5 -.3 .5 1.0 .5 2.3 .5 3.3 .5 4.1 .5 4.4 .5 4.4 .5 3.9 .5 3.1 .5 2.0 .5 .7 .5 -.6 .5 -1.9 .5 -3.0 .5 -3.9 .5 -4.4 .5 -4.4 .5 -4.1 .5 -3.3 .5 -2.4 .5 -1.1 .5 .2 .5 1.5 .5 2.8 .5 3.6 .5 4.2 .5 4.5 .5 4.2 .5 3.6 .5 2.7 .5 1.5 .5 .2 .5 -1.2 .5 -2.3 .5 -3.4 .5 -4.1 .5 -4.4 .5 -4.4 .5 -3.8 .5 -3.0 .5 -1.9 .5 -.6 .5 .8 .5 2.0 .5 3.1 .5 4.0 .5 4.3 .5 4.4 .5 4.0 .5 3.3 .5 2.2 .5 1.0 .5 -.4 .5 -1.6 .5 -2.8 .5 -3.7 .5 -4.3 .5 -4.4 .5 -4.1 .5 -3.6 .5 -2.5 .5 -1.4 .5 -.1 .5 1.3 .5 2.5 .5 3.5 .5 4.1 .5 4.4 .5 4.2 .5 3.8 .5 2.9 .5 1.7 .5 .5 .5 -.9 .5 -2.2 .5 -3.1 .5 -4.0 .5 -4.3 .5 -4.4 .5 -3.9 .5 -3.2 .5 -2.1 .5 -.8 .5 .4 .5 1.8 .5 2.9 .5 3.8 .5 4.2 .5 4.4 .5 4.1 .5 3.4 .5 2.5 .5 1.2 .5 -.1 .5 -1.4 .5 -2.5 .5 -3.6 .5 -4.1 .5 -4.4 .5 -4.2 .5 -3.7 .5 -2.7 .5 -1.7 .5 -.3 .5 1.0 .5 2.3 .5 3.2 .5 4.0 .5 4.4 .5 4.3 .5 3.8 .5 3.1 .5 2.0 .5 .7 .5 -.6 .5 -1.9 .5 -3.0 .5 -3.8 .5 -4.3 .5 -4.3 .5 -4.0 .5 -3.4 .5 -2.3 .5 -1.1 .5 .2 .5 1.5 .5 2.7 .5 3.6 .5 4.2 .5 4.3 .5 4.2 .5 3.5 .5 2.7 .5 1.5 .5 .2 .5 -1.2 .5 -2.3 .5 -3.4 .5 -4.0 .5 -4.3 .5 -4.3 .5 -3.7 .5 -3.0 .5 -1.8 .5 -.6 .5 .7 .5 2.0 .5 3.1 .5 3.8 .5 4.3 .5 4.3 .5 4.0 .5 3.2 .5 2.2 .5 1.0 .5 -.4 .5 -1.6 .5 -2.8 .5 -3.6 .5 -4.2 .5 -4.3 .5 -4.1 .5 -3.5 .5 -2.5 .5 -1.4 .5 .0 .5 1.2 .5 2.5 .5 3.4 .5 4.0 .5 4.3 .5 4.2 .5 3.7 .5 2.9 .5 1.7 .5 .4 .5 -.8 .5 -2.1 .5 -3.2 .5 -3.9 .5 -4.2 .5 -4.3 .5 -3.9 .5 -3.1 .5 -2.1 .5 -.8 .5 .5 .5 1.7 .5 2.9 .5 3.6 .5 4.2 .5 4.4 .5 4.0 .5 3.4 .5 2.4 .5 1.2 .5 -.1 .5 -1.4 .5 -2.5 .5 -3.5 .5 -4.1 .5 -4.3 .5 -4.1 .5 -3.6 .5 -2.7 .5 -1.6 .5 -.3 .5 1.0 .5 2.2 .5 3.2 .5 3.9 .5 4.3 .5 4.2 .5 3.8 .5 3.0 .5 2.0 .5 .7 .5 -.6 .5 -1.9 .5 -2.9 .5 -3.8 .5 -4.2 .5 -4.3 .5 -3.9 .5 -3.3 .5 -2.3 .5 -1.1 .5 .3 .5 1.4 .5 2.7 .5 3.5 .5 4.1 .5 4.3 .5 4.1 .5 3.5 .5 2.6 .5 1.4 .5 .2 .5 -1.1 .5 -2.3 .5 -3.3 .5 -3.9 .5 -4.3 .5 -4.2 .5 -3.7 .5 -2.9 .5 -1.8 .5 -.6 .5 .7 .5 2.0 .5 3.0 .5 3.8 .5 4.2 .5 4.3 .5 3.8 .5 3.2 .5 2.2 .5 .9 .5 -.3 .5 -1.6 .5 -2.7 .5 -3.6 .5 -4.1 .5 -4.3 .5 -4.0 .5 -3.4 .5 -2.5 .5 -1.4 .5 .0 .5 1.2 .5 2.4 .5 3.4 .5 4.0 .5 4.2 .5 4.2 .5 3.6 .5 2.8 .5 1.7 .5 .4 .5 -.9 .5 -2.0 .5 -3.1 .5 -3.8 .5 -4.2 .5 -4.2 .5 -3.9 .5 -3.0 .5 -2.1 .5 -.8 .5 .5 .5 1.7 .5 2.8 .5 3.6 .5 4.2 .5 4.2 .5 4.0 .5 3.3 .5 2.3 .5 1.2 .5 .0 .5 -1.4 .5 -2.5 .5 -3.4 .5 -4.0 .5 -4.2 .5 -4.1 .5 -3.6 .5 -2.6 .5 -1.6 .5 -.3 .5 1.0 .5 2.1 .5 3.2 .5 3.9 .5 4.2 .5 4.1 .5 3.8 .5 2.9 .5 1.9 .5 .7 .5 -.6 .5 -1.8 .5 -2.9 .5 -3.7 .5 -4.1 .5 -4.2 .5 -3.9 .5 -3.2 .5 -2.3 .5 -1.0 .5 .2 .5 1.4 .5 2.6 .5 3.5 .5 4.0 .5 4.3 .5 4.0 .5 3.4 .5 2.6 .5 1.4 .5 .2 .5 -1.1 .5 -2.3 .5 -3.2 .5 -3.9 .5 -4.2 .5 -4.1 .5 -3.6 .5 -2.9 .5 -1.8 .5 -.5 .5 .7 .5 1.9 .5 3.0 .5 3.7 .5 4.1 .5 4.2 .5 3.8 .5 3.1 .5 2.2 .5 .9 .5 -.3 .5 -1.6 .5 -2.7 .5 -3.5 .5 -4.1 .5 -4.2 .5 -3.9 .5 -3.4 .5 -2.4 .5 -1.3 .5 -.1 .5 1.2 .5 2.4 .5 3.3 .5 3.9 .5 4.2 .5 4.1 .5 3.5 .5 2.8 .5 1.6 .5 .5 .5 -.9 .5 -2.0 .5 -3.0 .5 -3.8 .5 -4.1 .5 -4.2 .5 -3.7 .5 -3.0 .5 -2.0 .5 -.8 .5 .4 .5 1.7 .5 2.8 .5 3.5 .5 4.1 .5 4.2 .5 3.8 .5 3.3 .5 2.3 .5 1.2 .5 -.1 .5 -1.3 .5 -2.4 .5 -3.4 .5 -3.9 .5 -4.2 .5 -4.0 .5 -3.5 .5 -2.6 .5 -1.6 .5 -.3 .5 1.0 .5 2.1 .5 3.1 .5 3.8 .5 4.2 .5 4.0 .5 3.7 .5 2.9 .5 1.9 .5 .7 .5 -.6 .5 -1.8 .5 -2.8 .5 -3.6 .5 -4.1 .5 -4.1 .5 -3.9 .5 -3.1 .5 -2.2 .5 -1.1 .5 .2 .5 1.5 .5 2.5 .5 3.4 .5 4.0 .5 4.1 .5 4.0 .5 3.4 .5 2.5 .5 1.4 .5 .2 .5 -1.1 .5 -2.2 .5 -3.2 .5 -3.8 .5 -4.2 .5 -4.0 .5 -3.6 .5 -2.8 .5 -1.8 .5 -.5 .5 .7 .5 1.9 .5 2.9 .5 3.7 .5 4.0 .5 4.1 .5 3.8 .5 3.0 .5 2.1 .5 1.0 .5 -.4 .5 -1.5 .5 -2.6 .5 -3.5 .5 -4.0 .5 -4.1 .5 -3.9 .5 -3.3 .5 -2.4 .5 -1.3 .5 .0 .5 1.2 .5 2.3 .5 3.2 .5 3.9 .5 4.1 .5 4.0 .5 3.5 .5 2.7 .5 1.6 .5 .4 .5 -.8 .5 -2.0 .5 -3.0 .5 -3.7 .5 -4.0 .5 -4.1 .5 -3.7 .5 -2.9 .5 -2.0 .5 -.8 .5 .4 .5 1.7 .5 2.7 .5 3.5 .5 4.0 .5 4.1 .5 3.8 .5 3.2 .5 2.3 .5 1.2 .5 -.1 .5 -1.3 .5 -2.4 .5 -3.3 .5 -3.9 .5 -4.1 .5 -3.9 .5 -3.4 .5 -2.6 .5 -1.5 .5 -.3 .5 .9 .5 2.1 .5 3.1 .5 3.7 .5 4.1 .5 4.0 .5 3.6 .5 2.8 .5 1.9 .5 .7 .5 -.6 .5 -1.8 .5 -2.8 .5 -3.5 .5 -4.0 .5 -4.1 .5 -3.7 .5 -3.2 .5 -2.1 .5 -1.1 .5 .2 .5 1.5 .5 2.5 .5 3.3 .5 3.9 .5 4.1 .5 3.9 .5 3.3 .5 2.5 .5 1.4 .5 .1 .5 -1.0 .5 -2.2 .5 -3.1 .5 -3.8 .5 -4.1 .5 -3.9 .5 -3.6 .5 -2.7 .5 -1.7 .5 -.6 .5 .7 .5 1.9 .5 2.8 .5 3.6 .5 4.0 .5 4.1 .5 3.7 .5 3.0 .5 2.0 .5 .9 .5 -.3 .5 -1.5 .5 -2.6 .5 -3.4 .5 -3.9 .5 -4.1 .5 -3.8 .5 -3.2 .5 -2.4 .5 -1.3 .5 .0 .5 1.2 .5 2.2 .5 3.2 .5 3.8 .5 4.1 .5 3.9 .5 3.4 .5 2.7 .5 1.6 .5 .4 .5 -.8 .5 -2.0 .5 -2.9 .5 -3.6 .5 -4.0 .5 -4.0 .5 -3.7 .5 -2.9 .5 -1.9 .5 -.8 .5 .5 .5 1.6 .5 2.7 .5 3.4 .5 3.9 .5 4.1 .5 3.7 .5 3.2 .5 2.2 .5 1.1 .5 .0 .5 -1.3 .5 -2.4 .5 -3.2 .5 -3.8 .5 -4.1 .5 -3.8 .5 -3.4 .5 -2.5 .5 -1.5 .5 -.3 .5 .9 .5 2.1 .5 3.0 .5 3.7 .5 3.9 .5 4.0" stroke="#9400d3" stroke-width="2.2" fill="none" stroke-linejoin="round"/><path d="M348.0 218.3l.5 -4.0 .5 -2.1 .5 -.2 .5 1.7 .5 3.7 .5 5.1 .5 6.1 .5 6.6 .5 6.4 .5 5.7 .5 4.4 .5 2.7 .5 .8 .5 -1.2 .5 -3.1 .5 -4.7 .5 -5.9 .5 -6.5 .5 -6.5 .5 -6.0 .5 -4.8 .5 -3.3 .5 -1.4 .5 .6 .5 2.6 .5 4.2 .5 5.6 .5 6.4 .5 6.6 .5 6.2 .5 5.2 .5 3.8 .5 1.9 .5 .0 .5 -1.9 .5 -3.8 .5 -5.2 .5 -6.2 .5 -6.6 .5 -6.4 .5 -5.6 .5 -4.2 .5 -2.6 .5 -.6 .5 1.4 .5 3.3 .5 4.8 .5 6.0 .5 6.5 .5 6.5 .5 5.9 .5 4.7 .5 3.1 .5 1.2 .5 -.8 .5 -2.7 .5 -4.4 .5 -5.7 .5 -6.4 .5 -6.6 .5 -6.1 .5 -5.1 .5 -3.7 .5 -1.7 .5 .2 .5 2.1 .5 4.0 .5 5.3 .5 6.3 .5 6.6 .5 6.3 .5 5.4 .5 4.1 .5 2.4 .5 .4 .5 -1.6 .5 -3.4 .5 -5.0 .5 -6.0 .5 -6.6 .5 -6.5 .5 -5.7 .5 -4.6 .5 -2.9 .5 -1.0 .5 1.0 .5 2.9 .5 4.6 .5 5.7 .5 6.5 .5 6.6 .5 6.0 .5 5.0 .5 3.4 .5 1.6 .5 -.4 .5 -2.4 .5 -4.1 .5 -5.4 .5 -6.3 .5 -6.6 .5 -6.3 .5 -5.3 .5 -4.0 .5 -2.1 .5 -.2 .5 1.7 .5 3.7 .5 5.1 .5 6.1 .5 6.6 .5 6.4 .5 5.7 .5 4.4 .5 2.7 .5 .8 .5 -1.2 .5 -3.1 .5 -4.7 .5 -5.9 .5 -6.5 .5 -6.5 .5 -6.0 .5 -4.8 .5 -3.3 .5 -1.4 .5 .6 .5 2.6 .5 4.2 .5 5.6 .5 6.4 .5 6.6 .5 6.2 .5 5.2 .5 3.8 .5 1.9 .5 .0 .5 -1.9 .5 -3.8 .5 -5.2 .5 -6.2 .5 -6.6 .5 -6.4 .5 -5.6 .5 -4.2 .5 -2.6 .5 -.6 .5 1.4 .5 3.3 .5 4.8 .5 6.0 .5 6.5 .5 6.5 .5 5.9 .5 4.7 .5 3.1 .5 1.2 .5 -.8 .5 -2.7 .5 -4.4 .5 -5.7 .5 -6.4 .5 -6.6 .5 -6.1 .5 -5.1 .5 -3.7 .5 -1.7 .5 .2 .5 2.1 .5 4.0 .5 5.3 .5 6.3 .5 6.6 .5 6.3 .5 5.4 .5 4.1 .5 2.4 .5 .4 .5 -1.6 .5 -3.4 .5 -5.0 .5 -6.0 .5 -6.6 .5 -6.5 .5 -5.7 .5 -4.6 .5 -2.9 .5 -1.0 .5 1.0 .5 2.9 .5 4.6 .5 5.7 .5 6.5 .5 6.6 .5 6.0 .5 5.0 .5 3.4 .5 1.6 .5 -.4 .5 -2.4 .5 -4.1 .5 -5.4 .5 -6.3 .5 -6.6 .5 -6.3 .5 -5.3 .5 -4.0 .5 -2.1 .5 -.2 .5 1.7 .5 3.7 .5 5.1 .5 6.1 .5 6.6 .5 6.4 .5 5.7 .5 4.4 .5 2.7 .5 .8 .5 -1.2 .5 -3.1 .5 -4.7 .5 -5.9 .5 -6.5 .5 -6.5 .5 -6.0 .5 -4.8 .5 -3.3 .5 -1.4 .5 .6 .5 2.6 .5 4.2 .5 5.6 .5 6.4 .5 6.6 .5 6.2 .5 5.2 .5 3.8 .5 1.9 .5 .0 .5 -1.9 .5 -3.8 .5 -5.2 .5 -6.2 .5 -6.6 .5 -6.4 .5 -5.6 .5 -4.2 .5 -2.6 .5 -.6 .5 1.4 .5 3.3 .5 4.8 .5 6.0 .5 6.5 .5 6.5 .5 5.9 .5 4.7 .5 3.1 .5 1.2 .5 -.8 .5 -2.7 .5 -4.4 .5 -5.7 .5 -6.4 .5 -6.6 .5 -6.1 .5 -5.1 .5 -3.7 .5 -1.7 .5 .2 .5 2.1 .5 4.0 .5 5.3 .5 6.3 .5 6.6 .5 6.3 .5 5.4 .5 4.1 .5 2.4 .5 .4 .5 -1.6 .5 -3.4 .5 -5.0 .5 -6.0 .5 -6.6 .5 -6.5 .5 -5.7 .5 -4.6 .5 -2.9 .5 -1.0 .5 1.0 .5 2.9 .5 4.6 .5 5.7 .5 6.5 .5 6.6 .5 6.0 .5 5.0 .5 3.4 .5 1.6 .5 -.4 .5 -2.4 .5 -4.1 .5 -5.4 .5 -6.3 .5 -6.6 .5 -6.3 .5 -5.3 .5 -4.0 .5 -2.1 .5 -.2 .5 1.7 .5 3.7 .5 5.1 .5 6.1 .5 6.6 .5 6.4 .5 5.7 .5 4.4 .5 2.7 .5 .8 .5 -1.2 .5 -3.1 .5 -4.7 .5 -5.9 .5 -6.5 .5 -6.5 .5 -6.0 .5 -4.8 .5 -3.3 .5 -1.4 .5 .6 .5 2.6 .5 4.2 .5 5.6 .5 6.4 .5 6.6 .5 6.2 .5 5.2 .5 3.8 .5 1.9 .5 .0 .5 -1.9 .5 -3.8 .5 -5.2 .5 -6.2 .5 -6.6 .5 -6.4 .5 -5.6 .5 -4.2 .5 -2.6 .5 -.6 .5 1.4 .5 3.3 .5 4.8 .5 6.0 .5 6.5 .5 6.5 .5 5.9 .5 4.7 .5 3.1 .5 1.2 .5 -.8 .5 -2.7 .5 -4.4 .5 -5.7 .5 -6.4 .5 -6.6 .5 -6.1 .5 -5.1 .5 -3.7 .5 -1.7 .5 .2 .5 2.1 .5 4.0 .5 5.3 .5 6.3 .5 6.6 .5 6.3 .5 5.4 .5 4.1 .5 2.4 .5 .4 .5 -1.6 .5 -3.4 .5 -5.0 .5 -6.0 .5 -6.6 .5 -6.5 .5 -5.7 .5 -4.6 .5 -2.9 .5 -1.0 .5 1.0 .5 2.9 .5 4.6 .5 5.7 .5 6.5 .5 6.6 .5 6.0 .5 5.0 .5 3.4 .5 1.6 .5 -.4 .5 -2.4 .5 -4.1 .5 -5.4 .5 -6.3 .5 -6.6 .5 -6.3 .5 -5.3 .5 -4.0 .5 -2.1 .5 -.2 .5 1.7 .5 3.7 .5 5.1 .5 6.1 .5 6.6 .5 6.4 .5 5.7 .5 4.4 .5 2.7 .5 .8 .5 -1.2 .5 -3.1 .5 -4.7 .5 -5.9 .5 -6.5 .5 -6.5 .5 -6.0 .5 -4.8 .5 -3.3 .5 -1.4 .5 .6 .5 2.6 .5 4.2 .5 5.6 .5 6.4 .5 6.6 .5 6.2 .5 5.2 .5 3.8 .5 1.9 .5 .0 .5 -1.9 .5 -3.8 .5 -5.2 .5 -6.2 .5 -6.6 .5 -6.4 .5 -5.6 .5 -4.2 .5 -2.6 .5 -.6 .5 1.4 .5 3.3 .5 4.8 .5 6.0 .5 6.5 .5 6.5 .5 5.9 .5 4.7 .5 3.1 .5 1.2 .5 -.8 .5 -2.7 .5 -4.4 .5 -5.7 .5 -6.4 .5 -6.6 .5 -6.1 .5 -5.1 .5 -3.7 .5 -1.7 .5 .2 .5 2.1 .5 4.0 .5 5.3 .5 6.3 .5 6.6 .5 6.3 .5 5.4 .5 4.1 .5 2.4 .5 .4 .5 -1.6 .5 -3.4 .5 -5.0 .5 -6.0 .5 -6.6 .5 -6.5 .5 -5.7 .5 -4.6 .5 -2.9 .5 -1.0 .5 1.0 .5 2.9 .5 4.6 .5 5.7 .5 6.5 .5 6.6 .5 6.0 .5 5.0 .5 3.4 .5 1.6 .5 -.4 .5 -2.4 .5 -4.1 .5 -5.4 .5 -6.3 .5 -6.6 .5 -6.3 .5 -5.3 .5 -4.0 .5 -2.1 .5 -.2 .5 1.7 .5 3.7 .5 5.1 .5 6.1 .5 6.6 .5 6.4 .5 5.7 .5 4.4 .5 2.7 .5 .8 .5 -1.2 .5 -3.1 .5 -4.7 .5 -5.9 .5 -6.5 .5 -6.5 .5 -6.0 .5 -4.8 .5 -3.3 .5 -1.4 .5 .6 .5 2.6 .5 4.2 .5 5.6 .5 6.4 .5 6.6 .5 6.2 .5 5.2 .5 3.8 .5 1.9 .5 .0 .5 -1.9 .5 -3.8 .5 -5.2 .5 -6.2 .5 -6.6 .5 -6.4 .5 -5.6 .5 -4.2 .5 -2.6 .5 -.6 .5 1.4 .5 3.3 .5 4.8 .5 6.0 .5 6.5 .5 6.5 .5 5.9 .5 4.7 .5 3.1 .5 1.2 .5 -.8 .5 -2.7 .5 -4.4 .5 -5.7 .5 -6.4 .5 -6.6 .5 -6.1 .5 -5.1 .5 -3.7 .5 -1.7 .5 .2 .5 2.1 .5 4.0 .5 5.3 .5 6.3 .5 6.6 .5 6.3 .5 5.4 .5 4.1 .5 2.4 .5 .4 .5 -1.6 .5 -3.4 .5 -5.0 .5 -6.0 .5 -6.6 .5 -6.5 .5 -5.7 .5 -4.6 .5 -2.9 .5 -1.0 .5 1.0 .5 2.9 .5 4.6 .5 5.7 .5 6.5 .5 6.6 .5 6.0 .5 5.0 .5 3.4 .5 1.6 .5 -.4 .5 -2.4 .5 -4.1 .5 -5.4 .5 -6.3 .5 -6.6 .5 -6.3 .5 -5.3 .5 -4.0 .5 -2.1 .5 -.2 .5 1.7 .5 3.7 .5 5.1 .5 6.1 .5 6.6 .5 6.4 .5 5.7 .5 4.4 .5 2.7 .5 .8 .5 -1.2 .5 -3.1 .5 -4.7 .5 -5.9 .5 -6.5 .5 -6.5 .5 -6.0 .5 -4.8 .5 -3.3 .5 -1.4 .5 .6 .5 2.6 .5 4.2 .5 5.6 .5 6.4 .5 6.6 .5 6.2 .5 5.2 .5 3.8 .5 1.9 .5 .0 .5 -1.9 .5 -3.8 .5 -5.2 .5 -6.2 .5 -6.6 .5 -6.4 .5 -5.6 .5 -4.2 .5 -2.6 .5 -.6 .5 1.4 .5 3.3 .5 4.8 .5 6.0 .5 6.5 .5 6.5 .5 5.9 .5 4.7 .5 3.1 .5 1.2 .5 -.8 .5 -2.7 .5 -4.4 .5 -5.7 .5 -6.4 .5 -6.6 .5 -6.1 .5 -5.1 .5 -3.7 .5 -1.7 .5 .2 .5 2.1 .5 4.0 .5 5.3 .5 6.3 .5 6.6 .5 6.3 .5 5.4 .5 4.1 .5 2.4 .5 .4 .5 -1.6 .5 -3.4 .5 -5.0 .5 -6.0 .5 -6.6 .5 -6.5 .5 -5.7 .5 -4.6 .5 -2.9 .5 -1.0 .5 1.0 .5 2.9 .5 4.6 .5 5.7 .5 6.5 .5 6.6 .5 6.0 .5 5.0 .5 3.4 .5 1.6 .5 -.4 .5 -2.4 .5 -4.1 .5 -5.4 .5 -6.3 .5 -6.6 .5 -6.3 .5 -5.3 .5 -4.0 .5 -2.1 .5 -.2 .5 1.7 .5 3.7 .5 5.1 .5 6.1 .5 6.6 .5 6.4 .5 5.7 .5 4.4 .5 2.7 .5 .8 .5 -1.2 .5 -3.1 .5 -4.7 .5 -5.9 .5 -6.5 .5 -6.5 .5 -6.0 .5 -4.8 .5 -3.3 .5 -1.4 .5 .6 .5 2.6 .5 4.2 .5 5.6 .5 6.4 .5 6.6 .5 6.2 .5 5.2 .5 3.8 .5 1.9 .5 .0 .5 -1.9 .5 -3.8 .5 -5.2 .5 -6.2 .5 -6.6 .5 -6.4 .5 -5.6 .5 -4.2 .5 -2.6 .5 -.6 .5 1.4 .5 3.3 .5 4.8 .5 6.0 .5 6.5 .5 6.5 .5 5.9 .5 4.7 .5 3.1 .5 1.2 .5 -.8 .5 -2.7 .5 -4.4 .5 -5.7 .5 -6.4 .5 -6.6 .5 -6.1 .5 -5.1 .5 -3.7 .5 -1.7 .5 .2 .5 2.1 .5 4.0 .5 5.3 .5 6.3 .5 6.6 .5 6.3 .5 5.4 .5 4.1 .5 2.4 .5 .4 .5 -1.6 .5 -3.4 .5 -5.0 .5 -6.0 .5 -6.6 .5 -6.5 .5 -5.7 .5 -4.6 .5 -2.9 .5 -1.0 .5 1.0 .5 2.9 .5 4.6 .5 5.7 .5 6.5 .5 6.6 .5 6.0 .5 5.0 .5 3.4 .5 1.6 .5 -.4 .5 -2.4 .5 -4.1 .5 -5.4 .5 -6.3 .5 -6.6 .5 -6.3 .5 -5.3 .5 -4.0 .5 -2.1 .5 -.2 .5 1.7 .5 3.7 .5 5.1 .5 6.1 .5 6.6 .5 6.4 .5 5.7 .5 4.4 .5 2.7 .5 .8 .5 -1.2 .5 -3.1 .5 -4.7 .5 -5.9 .5 -6.5 .5 -6.5 .5 -6.0 .5 -4.8 .5 -3.3 .5 -1.4 .5 .6 .5 2.6 .5 4.2 .5 5.6 .5 6.4 .5 6.6 .5 6.2 .5 5.2 .5 3.8 .5 1.9 .5 .0 .5 -1.9 .5 -3.8 .5 -5.2 .5 -6.2 .5 -6.6 .5 -6.4 .5 -5.6 .5 -4.2 .5 -2.6 .5 -.6 .5 1.4 .5 3.3 .5 4.8 .5 6.0 .5 6.5 .5 6.5 .5 5.9 .5 4.7 .5 3.1 .5 1.2 .5 -.8 .5 -2.7 .5 -4.4 .5 -5.7 .5 -6.4 .5 -6.6 .5 -6.1 .5 -5.1 .5 -3.7 .5 -1.7 .5 .2 .5 2.1 .5 4.0 .5 5.3 .5 6.3 .5 6.6 .5 6.3 .5 5.4 .5 4.1 .5 2.4 .5 .4 .5 -1.6 .5 -3.4 .5 -5.0 .5 -6.0 .5 -6.6 .5 -6.5 .5 -5.7 .5 -4.6 .5 -2.9 .5 -1.0 .5 1.0 .5 2.9 .5 4.6 .5 5.7 .5 6.5 .5 6.6 .5 6.0 .5 5.0 .5 3.4 .5 1.6 .5 -.4 .5 -2.4 .5 -4.1 .5 -5.4 .5 -6.3 .5 -6.6 .5 -6.3 .5 -5.3 .5 -4.0 .5 -2.1 .5 -.2 .5 1.7 .5 3.7 .5 5.1 .5 6.1 .5 6.6 .5 6.4 .5 5.7 .5 4.4 .5 2.7 .5 .8 .5 -1.2 .5 -3.1 .5 -4.7 .5 -5.9 .5 -6.5 .5 -6.5 .5 -6.0 .5 -4.8 .5 -3.3 .5 -1.4 .5 .6 .5 2.6 .5 4.2 .5 5.6 .5 6.4 .5 6.6 .5 6.2 .5 5.2 .5 3.8 .5 1.9 .5 .0 .5 -1.9 .5 -3.8 .5 -5.2 .5 -6.2 .5 -6.6 .5 -6.4 .5 -5.6 .5 -4.2 .5 -2.6 .5 -.6 .5 1.4 .5 3.3 .5 4.8 .5 6.0 .5 6.5 .5 6.5 .5 5.9 .5 4.7 .5 3.1 .5 1.2 .5 -.8 .5 -2.7 .5 -4.4 .5 -5.7 .5 -27.7 .5 -3.3 .5 1.2 .5 10.3 .5 17.4 .5 22.7 .5 25.5 .5 25.2 .5 21.1 .5 4.1 .5 -5.5 .5 -14.9 .5 -22.9 .5 -29.1 .5 -32.5 .5 -33.7 .5 -31.0 .5 -25.5 .5 -17.5 .5 -7.6 .5 2.9 .5 16.3 .5 24.4 .5 30.0 .5 32.5 .5 31.6 .5 28.1 .5 19.3 .5 10.4 .5 1.5 .5 -6.5 .5 -12.9 .5 -16.8 .5 -16.4 .5 -18.0 .5 -17.7 .5 -15.3 .5 -12.4 .5 -8.5 .5 -4.9 .5 -.3 .5 4.1 .5 8.0 .5 11.0 .5 13.0 .5 13.7 .5 13.2 .5 11.4 .5 8.7 .5 5.3 .5 1.5 .5 -2.3 .5 -5.9 .5 -8.7 .5 -10.7 .5 -11.8 .5 -11.6 .5 -10.4 .5 -8.3 .5 -5.6 .5 -2.3 .5 1.0 .5 4.1 .5 6.9 .5 8.9 .5 10.0 .5 10.3 .5 9.5 .5 8.0 .5 5.6 .5 3.0 .5 .0 .5 -2.8 .5 -5.3 .5 -7.4 .5 -8.6 .5 -9.1 .5 -8.7 .5 -7.6 .5 -5.7 .5 -3.4 .5 -.9 .5 1.8 .5 4.1 .5 6.0 .5 7.5 .5 8.1 .5 8.0 .5 7.1 .5 5.8 .5 3.7 .5 1.5 .5 -.8 .5 -3.1 .5 -5.0 .5 -6.4 .5 -7.2 .5 -7.4 .5 -6.8 .5 -5.7 .5 -4.0 .5 -2.0 .5 .1 .5 2.2 .5 4.0 .5 5.5 .5 6.5 .5 6.8 .5 6.5 .5 5.6 .5 4.3 .5 2.5 .5 .5 .5 -1.5 .5 -3.2 .5 -4.8 .5 -5.8 .5 -6.3 .5 -6.2 .5 -5.5 .5 -4.4 .5 -2.9 .5 -1.1 .5 .8 .5 2.6 .5 4.0 .5 5.2 .5 5.9 .5 5.9 .5 5.5 .5 4.5 .5 3.2 .5 1.6 .5 -.2 .5 -2.0 .5 -3.4 .5 -4.6 .5 -5.5 .5 -5.6 .5 -5.4 .5 -4.7 .5 -3.4 .5 -2.0 .5 -.4 .5 1.4 .5 2.9 .5 4.1 .5 5.0 .5 5.4 .5 5.3 .5 4.7 .5 3.8 .5 2.3 .5 .9 .5 -.8 .5 -2.4 .5 -3.6 .5 -4.6 .5 -5.2 .5 -5.2 .5 -4.8 .5 41.0 .5 8.4 .5 -1.2 .5 -18.2 .5 -20.0 .5 -19.9 .5 -17.9 .5 -14.4 .5 -9.6 .5 -3.8 .5 2.1 .5 7.8 .5 12.8 .5 16.5 .5 18.7 .5 19.1 .5 17.8 .5 14.8 .5 10.5 .5 5.3 .5 -.3 .5 -5.8 .5 -10.9 .5 -14.7 .5 -17.3 .5 -18.2 .5 -17.3 .5 -15.1 .5 -11.3 .5 -6.6 .5 -1.4 .5 4.0 .5 9.0 .5 13.0 .5 15.8 .5 17.2 .5 16.9 .5 15.1 .5 12.0 .5 7.7 .5 2.8 .5 -2.3 .5 -7.2 .5 -11.3 .5 -14.4 .5 -16.1 .5 -16.3 .5 -15.0 .5 -12.4 .5 -8.6 .5 -4.1 .5 .8 .5 5.5 .5 9.6 .5 12.9 .5 14.9 .5 15.6 .5 14.7 .5 12.6 .5 9.3 .5 5.2 .5 .6 .5 -3.9 .5 -8.0 .5 -11.4 .5 -13.7 .5 -14.6 .5 -14.3 .5 -12.8 .5 -10.1 .5 -6.5 .5 -2.2 .5 2.2 .5 6.4 .5 10.1 .5 12.8 .5 14.4 .5 14.6 .5 13.5 .5 11.1 .5 7.7 .5 3.6 .5 -.9 .5 -5.2 .5 -9.2 .5 -12.2 .5 -14.1 .5 -14.8 .5 -14.1 .5 -12.0 .5 -8.9 .5 -4.9 .5 -.5 .5 4.0 .5 8.1 .5 11.5 .5 13.8 .5 14.8 .5 14.6 .5 12.9 .5 10.1 .5 6.3 .5 1.9 .5 -2.7 .5 -7.0 .5 -10.7 .5 -13.4 .5 -14.9 .5 -15.1 .5 -13.8 .5 -11.3 .5 -7.7 .5 -3.3 .5 1.3 .5 5.9 .5 9.8 .5 13.0 .5 15.0 .5 15.5 .5 14.6 .5 12.4 .5 9.0 .5 4.8 .5 .1 .5 -4.6 .5 -8.9 .5 -12.5 .5 -14.8 .5 -15.8 .5 -15.3 .5 -13.5 .5 -10.3 .5 -6.2 .5 -1.6 .5 3.3 .5 7.8 .5 11.8 .5 14.5 .5 15.9 .5 15.9 .5 14.5 .5 11.6 .5 7.7 .5 3.1 .5 -1.9 .5 -6.7 .5 -10.8 .5 -14.1 .5 -16.0 .5 -16.4 .5 -15.3 .5 -12.9 .5 -9.1 .5 -4.6 .5 .4 .5 5.4 .5 9.9 .5 13.5 .5 15.8 .5 16.7 .5 15.9 .5 13.7 .5 10.2 .5 5.8 .5 .9 .5 -4.1 .5 -8.7 .5 -12.4 .5 -15.0 .5 -16.3 .5 -15.9 .5 -14.1 .5 -11.1 .5 -7.1 .5 -2.3 .5 2.5 .5 7.2 .5 11.2 .5 14.0 .5 15.7 .5 15.8 .5 14.5 .5 11.9 .5 8.1 .5 3.7 .5 -1.0 .5 -5.8 .5 -9.8 .5 -13.0 .5 -15.0 .5 -15.5 .5 -14.7 .5 -12.5 .5 -9.2 .5 -4.9 .5 -.4 .5 4.3 .5 8.5 .5 11.9 .5 14.1 .5 15.2 .5 14.8 .5 12.9 .5 10.0 .5 6.2 .5 1.7 .5 -2.9 .5 -7.1 .5 -10.7 .5 -13.3 .5 -14.7 .5 -14.6 .5 -13.3 .5 -10.8 .5 -7.1 .5 -3.0 .5 1.4 .5 5.8 .5 9.5 .5 12.4 .5 14.0 .5 14.3 .5 13.3 .5 11.2 .5 7.9 .5 4.0 .5 -.2 .5 -4.4 .5 -8.1 .5 -11.1 .5 -13.0 .5 -13.7 .5 -13.1 .5 -11.4 .5 -8.5 .5 -5.0 .5 -1.0 .5 3.0 .5 6.8 .5 9.8 .5 11.9 .5 13.0 .5 12.7 .5 11.4 .5 9.0 .5 5.8 .5 2.1 .5 -1.8 .5 -5.4 .5 -8.5 .5 -10.8 .5 -12.1 .5 -12.3 .5 -11.3 .5 -9.2 .5 -6.5 .5 -3.1 .5 .6 .5 4.1 .5 7.3 .5 9.7 .5 11.2 .5 11.6 .5 11.1 .5 9.4 .5 7.0 .5 3.8 .5 .5 .5 -2.9 .5 -6.0 .5 -8.6 .5 -10.2 .5 -11.0 .5 -10.6 .5 -9.4 .5 -7.3 .5 -4.6 .5 -1.4 .5 1.8 .5 4.8 .5 7.3 .5 9.3 .5 10.2 .5 10.3 .5 9.5 .5 7.6 .5 5.2 .5 2.4 .5 -.8 .5 -3.8 .5 -6.3 .5 -8.4 .5 -9.6 .5 -9.9 .5 -9.4 .5 -7.9 .5 -5.7 .5 -3.1 .5 -.1 .5 2.7 .5 5.4 .5 7.5 .5 8.9 .5 9.5 .5 9.1 .5 8.0 .5 6.1 .5 3.8 .5 .9 .5 -1.8 .5 -4.4 .5 -6.6 .5 -8.1 .5 -8.9 .5 -8.9 .5 -8.0 .5 -6.4 .5 -4.3 .5 -1.7 .5 1.0 .5 3.4 .5 5.7 .5 7.4 .5 8.3 .5 8.5 .5 7.9 .5 6.6 .5 4.7 .5 2.3 .5 -.1 .5 -2.6 .5 -4.8 .5 -6.6 .5 -7.7 .5 -8.0 .5 -7.7 .5 -6.7 .5 -5.0 .5 -3.0 .5 -.8 .5 1.7 .5 3.9 .5 5.8 .5 7.2 .5 7.8 .5 7.8 .5 7.0 .5 5.6 .5 3.8 .5 1.4 .5 -1.0 .5 -3.2 .5 -5.3 .5 -6.8 .5 -7.7 .5 -7.9 .5 -7.3 .5 -6.1 .5 -6.9 .5 -5.1 .5 -2.4 .5 1.0 .5 6.7 .5 9.2 .5 10.6 .5 11.3 .5 10.7 .5 9.3 .5 4.9 .5 1.3 .5 -1.9 .5 -4.5 .5 -4.3 .5 -6.2 .5 -7.5 .5 -8.1 .5 -8.1 .5 -7.2 .5 -5.6 .5 -3.7 .5 -1.2 .5 1.2 .5 3.7 .5 5.6 .5 7.2 .5 8.1 .5 8.1 .5 7.5 .5 6.2 .5 4.3 .5 2.0 .5 -.5 .5 -2.9 .5 -5.1 .5 -6.8 .5 -7.9 .5 -8.2 .5 -7.8 .5 -6.6 .5 -4.9 .5 -2.7 .5 -.3 .5 2.2 .5 4.5 .5 6.4 .5 7.6 .5 8.2 .5 7.9 .5 7.1 .5 5.5 .5 3.4 .5 1.0 .5 -1.5 .5 -3.9 .5 -5.8 .5 -7.3 .5 -8.1 .5 -8.1 .5 -7.4 .5 -6.0 .5 -4.1 .5 -1.7 .5 .7 .5 3.2 .5 5.3 .5 6.9 .5 7.9 .5 8.2 .5 7.7 .5 6.5 .5 4.7 .5 2.5 .5 .0 .5 -2.5 .5 -4.7 .5 -6.5 .5 -7.7 .5 -8.2 .5 -7.9 .5 -6.9 .5 -5.3 .5 -3.2 .5 -.7 .5 1.7 .5 4.1 .5 6.0 .5 7.4 .5 8.1 .5 8.1 .5 7.3 .5 5.8 .5 3.9 .5 1.5 .5 -1.0 .5 -3.4 .5 -5.5 .5 -7.1 .5 -7.9 .5 -8.2 .5 -7.6 .5 -6.3 .5 -4.5 .5 -2.1 .5 .2 .5 2.7 .5 4.9 .5 6.6 .5 7.7 .5 8.1 .5 7.8 .5 6.7 .5 5.0 .5 2.8 .5 .5 .5 -2.0 .5 -4.2 .5 -6.1 .5 -7.3 .5 -8.0 .5 -7.8 .5 -7.0 .5 -5.5 .5 -3.5 .5 -1.2 .5 1.2 .5 3.6 .5 5.5 .5 6.9 .5 7.8 .5 7.9 .5 7.2 .5 5.9 .5 4.1 .5 1.9 .5 -.5 .5 -2.9 .5 -4.9 .5 -6.5 .5 -7.5 .5 -7.8 .5 -7.4 .5 -6.3 .5 -4.6 .5 -2.5 .5 -.3 .5 2.2 .5 4.2 .5 6.1 .5 7.1 .5 7.7 .5 7.5 .5 6.6 .5 5.2 .5 3.1 .5 .9 .5 -1.4 .5 -3.6 .5 -5.5 .5 -6.8 .5 -7.5 .5 -7.6 .5 -6.8 .5 -5.6 .5 -3.7 .5 -1.6 .5 .7 .5 3.0 .5 4.9 .5 6.4 .5 7.3 .5 7.5 .5 7.0 .5 5.9 .5 4.3 .5 2.2 .5 .0 .5 -2.3 .5 -4.3 .5 -5.9 .5 -7.0 .5 -7.4 .5 -7.2 .5 -6.2 .5 -4.8 .5 -2.8 .5 -.6 .5 1.6 .5 3.6 .5 5.5 .5 6.6 .5 7.3 .5 7.2 .5 6.5 .5 5.2 .5 3.4 .5 1.3 .5 -1.0 .5 -3.0 .5 -4.9 .5 -6.2 .5 -7.1 .5 -7.2 .5 -6.7 .5 -5.6 .5 -3.9 .5 -1.9 .5 .2 .5 2.4 .5 4.3 .5 5.8 .5 6.9 .5 7.1 .5 6.9 .5 5.9 .5 4.4 .5 2.5 .5 .4 .5 -1.7 .5 -3.7 .5 -5.4 .5 -6.5 .5 -7.1 .5 -6.9 .5 -6.2 .5 -4.9 .5 -3.1 .5 -1.0 .5 1.1 .5 3.1 .5 4.9 .5 6.2 .5 6.8 .5 7.0 .5 6.4 .5 5.3 .5 3.6 .5 1.7 .5 -.5 .5 -2.5 .5 -4.3 .5 -5.8 .5 -6.7 .5 -6.9 .5 -6.6 .5 -5.6 .5 -4.1 .5 -2.2 .5 -.2 .5 1.9 .5 3.8 .5 5.3 .5 6.4 .5 6.8 .5 6.7 .5 5.9 .5 4.5 .5 2.8 .5 .9 .5 -1.3 .5 -3.2 .5 -4.9 .5 -6.1 .5 -6.7 .5 -6.7 .5 -6.1 .5 -4.9 .5 -3.4 .5 -1.4 .5 .7 .5 2.6 .5 4.3 .5 5.7 .5 6.5 .5 6.7 .5 6.3 .5 5.3 .5 3.8 .5 2.0 .5 .0 .5 -2.0 .5 -3.9 .5 -5.2 .5 -6.3 .5 -6.6 .5 -6.4 .5 -5.6 .5 -4.3 .5 -2.5 .5 -.6 .5 1.4 .5 3.3 .5 4.9 .5 5.9 .5 6.5 .5 6.5 .5 5.8 .5 4.7 .5 3.0 .5 1.2 .5 -.9 .5 -2.7 .5 -4.3 .5 -5.6 .5 -6.4 .5 -6.4 .5 -6.0 .5 -5.0 .5 -3.6 .5 -1.7 .5 .2 .5 2.2 .5 3.8 .5 5.3 .5 6.1 .5 6.4 .5 6.1 .5 5.3 .5 4.0 .5 2.2 .5 .4 .5 -1.6 .5 -3.3 .5 -4.8 .5 -5.8 .5 -6.4 .5 -6.2 .5 -5.5 .5 -4.3 .5 -2.8 .5 -.9 .5 .9 .5 2.8 .5 4.4 .5 5.5 .5 6.2 .5 6.2 .5 5.7 .5 4.7 .5 3.2 .5 1.5 .5 -.4 .5 -2.2 .5 -3.9 .5 -5.2 .5 -5.9 .5 -6.2 .5 -5.9 .5 -4.9 .5 -3.7 .5 -2.0 .5 -.2 .5 1.7 .5 3.4 .5 4.7 .5 5.7 .5 6.1 .5 6.0 .5 5.2 .5 4.1 .5 2.5 .5 .7 .5 -1.1 .5 -2.9 .5 -4.3 .5 -5.4 .5 -6.0 .5 -6.0 .5 -5.4 .5 -4.4 .5 -3.0 .5 -1.2 .5 .6 .5 2.3 .5 3.9 .5 5.0 .5 5.8 .5 6.0 .5 5.5 .5 4.7 .5 3.4 .5 1.8 .5 .0 .5 -1.8 .5 -3.4 .5 -4.7 .5 -5.6 .5 -5.9 .5 -5.6 .5 -5.0 .5 -3.8 .5 -2.2 .5 -.5 .5 1.3 .5 2.9 .5 4.3 .5 5.2 .5 5.8 .5 5.7 .5 5.2 .5 4.1 .5 2.7 .5 1.0 .5 -.7 .5 -2.4 .5 -3.9 .5 -5.0 .5 -5.6 .5 -5.7 .5 -5.3 .5 -4.4 .5 -3.1 .5 -1.5 .5 .2 .5 1.9 .5 3.4 .5 4.6 .5 5.4 .5 5.6 .5 5.5 .5 4.6 .5 3.5 .5 2.0 .5 .3 .5 -1.4 .5 -2.9 .5 -4.2 .5 -5.2 .5 -5.5 .5 -5.5 .5 -4.9 .5 -3.8 .5 -2.4 .5 -.9 .5 .9 .5 2.5 .5 3.8 .5 4.9 .5 5.4 .5 5.4 .5 5.1 .5 4.1 .5 2.8 .5 1.3 .5 -.3 .5 -2.0 .5 -3.4 .5 -4.5 .5 -5.3 .5 -5.4 .5 -5.1 .5 -4.4 .5 -3.2 .5 -1.8 .5 -.1 .5 1.5 .5 2.9 .5 4.2 .5 5.0 .5 5.3 .5 5.3 .5 4.5 .5 3.6 .5 2.2 .5 .6 .5 -1.0 .5 -2.5 .5 -3.8 .5 -4.7 .5 -5.2 .5 -5.3 .5 -4.7 .5 -3.9 .5 -2.6 .5 -1.0 .5 .5 .5 2.0 .5 3.4 .5 4.4 .5 5.1 .5 5.2 .5 4.9 .5 4.1 .5 2.9 .5 1.5 .5 .0 .5 -1.6 .5 -2.9 .5 -4.1 .5 -4.9 .5 -5.1 .5 -5.0 .5 -4.3 .5 -3.3 .5 -1.9 .5 -.4 .5 1.1 .5 2.5 .5 3.7 .5 4.6 .5 5.1 .5 4.9 .5 4.5 .5 3.6 .5 2.3 .5 .9 .5 -.6 .5 -2.1 .5 -3.4 .5 -4.3 .5 -4.8 .5 -5.0 .5 -4.6 .5 -3.9 .5 -2.7 .5 -1.3 .5 .2 .5 1.6 .5 3.0 .5 4.0 .5 4.7 .5 4.9 .5 4.7 .5 4.0 .5 3.1 .5 1.7 .5 .3 .5 -1.2 .5 -2.6 .5 -3.7 .5 -4.4 .5 -4.8 .5 -4.8 .5 -4.2 .5 -3.3 .5 -2.1 .5 -.7 .5 .8 .5 2.1 .5 3.3 .5 4.2 .5 4.7 .5 4.7 .5 4.4 .5 3.5 .5 2.5 .5 1.1 .5 -.3 .5 -1.7 .5 -2.9 .5 -3.9 .5 -4.6 .5 -4.7 .5 -4.5 .5 -3.8 .5 -2.9 .5 -1.5 .5 -.2 .5 1.3 .5 2.6 .5 3.7 .5 4.4 .5 4.7 .5 4.6 .5 4.1 .5 3.1 .5 2.0 .5 .5 .5 -.8 .5 -2.2 .5 -3.4 .5 -4.2 .5 -4.7 .5 -4.6 .5 -4.3 .5 -3.5 .5 -2.3 .5 -1.0 .5 .4 .5 1.9 .5 3.0 .5 4.0 .5 4.5 .5 4.8 .5 4.4 .5 3.7 .5 2.7 .5 1.4 .5 .0 .5 -1.4 .5 -2.7 .5 -3.7 .5 -4.4 .5 -4.8 .5 -4.5 .5 -4.0 .5 -3.0 .5 -1.8 .5 -.4 .5 1.0 .5 2.3 .5 3.4 .5 4.3 .5 4.6 .5 4.7 .5 4.1 .5 3.4 .5 2.2 .5 .8 .5 -.5 .5 -2.0 .5 -3.1 .5 -4.1 .5 -4.5 .5 -4.7 .5 -4.4 .5 -3.6 .5 -2.5 .5 -1.3 .5 .1 .5 1.6 .5 2.8 .5 3.8 .5 4.4 .5 4.7 .5 4.5 .5 3.9 .5 2.9 .5 1.7 .5 .2 .5 -1.1 .5 -2.4 .5 -3.6 .5 -4.3 .5 -4.6 .5 -4.6 .5 -4.1 .5 -3.2 .5 -2.1 .5 -.7 .5 .7 .5 2.1 .5 3.2 .5 4.1 .5 4.6 .5 4.6 .5 4.3 .5 3.5 .5 2.5 .5 1.1 .5 -.3 .5 -1.7 .5 -2.9 .5 -3.8 .5 -4.5 .5 -4.7 .5 -4.4 .5 -3.8 .5 -2.7 .5 -1.6 .5 -.1 .5 1.2 .5 2.6 .5 3.6 .5 4.3 .5 4.7 .5 4.5 .5 4.0 .5 3.1 .5 1.9 .5 .6 .5 -.8 .5 -2.2 .5 -3.3 .5 -4.2 .5 -4.6 .5 -4.6 .5 -4.2 .5 -3.4 .5 -2.3 .5 -1.0 .5 .5 .5 1.8 .5 3.0 .5 3.9 .5 4.5 .5 4.6 .5 4.4 .5 3.6 .5 2.7 .5 1.4 .5 .0 .5 -1.4 .5 -2.7 .5 -3.6 .5 -4.4 .5 -4.6 .5 -4.5 .5 -3.9 .5 -3.0 .5 -1.8 .5 -.4 .5 1.0 .5 2.3 .5 3.4 .5 4.1 .5 4.6 .5 4.6 .5 4.1 .5 3.3 .5 2.2 .5 .8 .5 -.6 .5 -1.9 .5 -3.1 .5 -3.9 .5 -4.5 .5 -4.6 .5 -4.3 .5 -3.6 .5 -2.5 .5 -1.3 .5 .2 .5 1.5 .5 2.7 .5 3.8 .5 4.4 .5 4.6 .5 4.4 .5 3.8 .5 2.9 .5 1.6 .5 .3 .5 -1.1 .5 -2.4 .5 -3.5 .5 -4.2 .5 -4.6 .5 -4.5 .5 -4.0 .5 -3.2 .5 -2.1 .5 -.6 .5 .7 .5 2.0 .5 3.2 .5 4.0 .5 4.5 .5 4.6 .5 4.2 .5 3.5 .5 2.4 .5 1.1 .5 -.3 .5 -1.7 .5 -2.8 .5 -3.8 .5 -4.4 .5 -4.6 .5 -4.4 .5 -3.7 .5 -2.7 .5 -1.6 .5 -.1 .5 1.3 .5 2.5 .5 3.5 .5 4.3 .5 4.5 .5 4.5 .5 4.0 .5 3.0 .5 1.9 .5 .6 .5 -.9 .5 -2.1 .5 -3.3 .5 -4.1 .5 -4.5 .5 -4.5 .5 -4.1 .5 -3.4 .5 -2.3 .5 -.9 .5 .4 .5 1.8 .5 2.9 .5 3.9 .5 4.4 .5 4.6 .5 4.3 .5 3.6 .5 2.6 .5 1.4 .5 .0 .5 -1.4 .5 -2.6 .5 -3.7 .5 -4.2 .5 -4.6 .5 -4.4 .5 -3.9 .5 -2.9 .5 -1.8 .5 -.4 .5 1.0 .5 2.2 .5 3.4 .5 4.1 .5 4.5 .5 4.5 .5 4.1 .5 3.2 .5 2.2 .5 .8 .5 -.6 .5 -1.9 .5 -3.0 .5 -3.9 .5 -4.5 .5 -4.5 .5 -4.2 .5 -3.5 .5 -2.5 .5 -1.3 .5 .2 .5 1.5 .5 2.7 .5 3.7 .5 4.3 .5 4.5 .5 4.4 .5 3.8 .5 2.8 .5 1.6 .5 .3 .5 -1.1 .5 -2.4 .5 -3.4 .5 -4.2 .5 -4.5 .5 -4.4 .5 -4.0 .5 -3.1 .5 -2.0 .5 -.7 .5 .7 .5 2.0 .5 3.1 .5 4.0 .5 4.4 .5 4.5 .5 4.2 .5 3.4 .5 2.3 .5 1.1 .5 -.2 .5 -1.7 .5 -2.8 .5 -3.7 .5 -4.4 .5 -4.5 .5 -4.3 .5 -3.6 .5 -2.7 .5 -1.5 .5 -.2 .5 1.3 .5 2.4 .5 3.5 .5 4.2 .5 4.5 .5 4.4 .5 3.9 .5 3.0 .5 1.9 .5 .5 .5 -.8 .5 -2.1 .5 -3.2 .5 -4.0 .5 -4.5 .5 -4.4 .5 -4.1 .5 -3.3 .5 -2.2 .5 -1.0 .5 .4 .5 1.8 .5 2.9 .5 3.8 .5 4.3 .5 4.5 .5 4.2 .5 3.6 .5 2.6 .5 1.3 .5 .0 .5 -1.3 .5 -2.6 .5 -3.6 .5 -4.2 .5 -4.5 .5 -4.3 .5 -3.8 .5 -2.9 .5 -1.7 .5 -.4 .5 .9 .5 2.2 .5 3.3 .5 4.1 .5 4.4 .5 4.4 .5 4.0 .5 3.2 .5 2.1 .5 .8 .5 -.5 .5 -1.9 .5 -3.0 .5 -3.8 .5 -4.4 .5 -4.4 .5 -4.2 .5 -3.5 .5 -2.4 .5 -1.2 .5 .1 .5 1.5 .5 2.7 .5 3.6 .5 4.2 .5 4.5 .5 4.3 .5 3.7 .5 2.8 .5 1.6 .5 .2 .5 -1.0 .5 -2.4 .5 -3.3 .5 -4.1 .5 -4.5 .5 -4.3 .5 -4.0 .5 -3.0 .5 -2.0 .5 -.7 .5 .7 .5 2.0 .5 3.1 .5 3.9 .5 4.3 .5 4.5 .5 4.0 .5 3.4 .5 2.3 .5 1.1 .5 -.3 .5 -1.6 .5 -2.7 .5 -3.7 .5 -4.3 .5 -4.4 .5 -4.3 .5 -3.6 .5 -2.6 .5 -1.5 .5 -.1 .5 1.2 .5 2.4 .5 3.5 .5 4.1 .5 4.4 .5 4.3 .5 3.9 .5 2.9 .5 1.9 .5 .5 .5 -.8 .5 -2.1 .5 -3.2 .5 -3.9 .5 -4.4 .5 -4.4 .5 -4.0 .5 -3.2 .5 -2.2 .5 -1.0 .5 .4 .5 1.8 .5 2.8 .5 3.8 .5 4.2 .5 4.5 .5 4.1 .5 3.5 .5 2.6 .5 1.3 .5 .0 .5 -1.3 .5 -2.6 .5 -3.5 .5 -4.1 .5 -4.5 .5 -4.2 .5 -3.8 .5 -2.8 .5 -1.7 .5 -.4 .5 .9 .5 2.2 .5 3.3 .5 3.9 .5 4.4 .5 4.4 .5 3.9 .5 3.1 .5 2.1 .5 .8 .5 -.5 .5 -1.9 .5 -2.9 .5 -3.8 .5 -4.3 .5 -4.4 .5 -4.1 .5 -3.4 .5 -2.4 .5 -1.2 .5 .2 .5 1.4 .5 2.6 .5 3.6 .5 4.2 .5 4.4 .5 4.2 .5 3.6 .5 2.8 .5 1.5 .5 .3 .5 -1.1 .5 -2.3 .5 -3.3 .5 -4.0 .5 -4.4 .5 -4.3 .5 -3.8 .5 -3.0 .5 -2.0 .5 -.6 .5 .6 .5 2.0 .5 3.0 .5 3.8 .5 4.3 .5 4.4 .5 4.0 .5 3.3 .5 2.3 .5 1.1 .5 -.3 .5 -1.6 .5 -2.7 .5 -3.6 .5 -4.2 .5 -4.4 .5 -4.2 .5 -3.5 .5 -2.6 .5 -1.5 .5 -.1 .5 1.2 .5 2.4 .5 3.4 .5 4.0 .5 4.4 .5 4.3 .5 3.7 .5 2.9 .5 1.8 .5 .6 .5 -.8 .5 -2.1 .5 -3.1 .5 -3.9 .5 -4.3 .5 -4.3 .5 -3.9 .5 -3.2 .5 -2.2 .5 -.9 .5 .4 .5 1.7 .5 2.8 .5 3.7 .5 4.2 .5 4.3 .5 4.1 .5 3.5 .5 2.5 .5 1.3 .5 .0 .5 -1.3 .5 -2.5 .5 -3.5 .5 -4.1 .5 -4.3 .5 -4.2 .5 -3.7 .5 -2.8 .5 -1.7 .5 -.4 .5 .9 .5 2.2 .5 3.2 .5 3.9 .5 4.3 .5 4.3 .5 3.9 .5 3.1 .5 2.0 .5 .8 .5 -.6 .5 -1.8 .5 -2.9 .5 -3.7 .5 -4.2 .5 -4.3 .5 -4.1 .5 -3.3 .5 -2.4 .5 -1.2 .5 .2 .5 1.4 .5 2.6 .5 3.5 .5 4.1 .5 4.3 .5 4.2 .5 3.6 .5 2.7 .5 1.5 .5 .3 .5 -1.1 .5 -2.2 .5 -3.3 .5 -4.0 .5 -4.3 .5 -4.2 .5 -3.8 .5 -3.0 .5 -1.9 .5 -.6 .5 .6 .5 2.0 .5 2.9 .5 3.8 .5 4.3 .5 4.2 .5 4.0 .5 3.2 .5 2.3 .5 1.0 .5 -.2 .5 -1.6 .5 -2.7 .5 -3.5 .5 -4.2 .5 -4.3 .5 -4.1 .5 -3.4 .5 -2.6 .5 -1.4 .5 -.2 .5 1.2 .5 2.4 .5 3.3 .5 4.0 .5 4.3 .5 4.2 .5 3.7 .5 2.8 .5 1.8 .5 .5 .5 -.8 .5 -2.0 .5 -3.0 .5 -3.9 .5 -4.2 .5 -4.2 .5 -3.9 .5 -3.2 .5 -2.1 .5 -.9 .5 .4 .5 1.7 .5 2.7 .5 3.7 .5 4.1 .5 4.3 .5 4.0 .5 3.4 .5 2.4 .5 1.3 .5 .0 .5 -1.3 .5 -2.4 .5 -3.4 .5 -4.0 .5 -4.3 .5 -4.1 .5 -3.6 .5 -2.8 .5 -1.7 .5 -.3 .5 .9 .5 2.1 .5 3.1 .5 3.9 .5 4.2 .5 4.2 .5 3.8 .5 3.1 .5 2.0 .5 .7 .5 -.5 .5 -1.8 .5 -2.8 .5 -3.7 .5 -4.1 .5 -4.3 .5 -3.9 .5 -3.3 .5 -2.4 .5 -1.1 .5 .1 .5 1.4 .5 2.6 .5 3.4 .5 4.1 .5 4.2 .5 4.1 .5 3.5 .5 2.7 .5 1.5 .5 .2 .5 -1.0 .5 -2.2 .5 -3.2 .5 -3.9 .5 -4.2 .5 -4.2 .5 -3.7 .5 -3.0 .5 -1.8 .5 -.7 .5 .7 .5 1.8 .5 3.0 .5 3.7 .5 4.2 .5 4.2 .5 3.9 .5 3.2 .5 2.2 .5 1.0 .5 -.3 .5 -1.5 .5 -2.6 .5 -3.5 .5 -4.1 .5 -4.2 .5 -4.0 .5 -3.5 .5 -2.5 .5 -1.4 .5 -.1 .5 1.1 .5 2.3 .5 3.3 .5 3.9 .5 4.3 .5 4.1 .5 3.6 .5 2.8 .5 1.8 .5 .5 .5 -.8 .5 -2.0 .5 -3.0 .5 -3.7 .5 -4.2 .5 -4.2 .5 -3.8 .5 -3.1 .5 -2.1 .5 -.9 .5 .4 .5 1.7 .5 2.7 .5 3.5 .5 4.1 .5 4.2 .5 4.0 .5 3.3 .5 2.4 .5 1.3 .5 .0 .5 -1.3 .5 -2.4 .5 -3.3 .5 -4.0 .5 -4.2 .5 -4.0 .5 -3.6 .5 -2.7 .5 -1.6 .5 -.4 .5 .9 .5 2.1 .5 3.1 .5 3.7 .5 4.2 .5 4.2 .5 3.7 .5 3.0 .5 1.9 .5 .8 .5 -.5 .5 -1.7 .5 -2.9 .5 -3.6 .5 -4.0 .5 -4.2 .5 -3.9 .5 -3.3 .5 -2.3 .5 -1.1 .5 .1 .5 1.4 .5 2.5 .5 3.4 .5 4.0 .5 4.2 .5 4.0 .5 3.5 .5 2.6 .5 1.5 .5 .2 .5 -1.0 .5 -2.2 .5 -3.1 .5 -3.9 .5 -4.1 .5 -4.1 .5 -3.7 .5 -2.9 .5 -1.8 .5 -.6 .5 .6 .5 1.8 .5 2.9 .5 3.7 .5 4.1 .5 4.1 .5 3.8 .5 3.2 .5 2.2 .5 1.0 .5 -.3 .5 -1.5 .5 -2.6 .5 -3.4 .5 -4.0 .5 -4.2 .5 -3.9 .5 -3.4 .5 -2.5 .5 -1.4 .5 -.1 .5 1.1 .5 2.3 .5 3.2 .5 3.9 .5 4.1 .5 4.1 .5 3.6 .5 2.7 .5 1.8 .5 .5 .5 -.8 .5 -1.9 .5 -3.0 .5 -3.7 .5 -4.1 .5 -4.1 .5 -3.8 .5 -3.0 .5 -2.0 .5 -.9 .5 .4 .5 1.6 .5 2.6 .5 3.5 .5 4.0 .5 4.2 .5 3.9 .5 3.3 .5 2.3 .5 1.3 .5 .0 .5 -1.3 .5 -2.4 .5 -3.2 .5 -3.9 .5 -4.2 .5 -3.9 .5 -3.5 .5 -2.7 .5 -1.6 .5 -.4 .5 .9 .5 2.1 .5 3.0 .5 3.7 .5 4.1 .5 4.1 .5 3.7 .5 2.9 .5 1.9 .5 .8 .5 -.5 .5 -1.7 .5 -2.8 .5 -3.6 .5 -4.0 .5 -4.1 .5 -3.8 .5 -3.2 .5 -2.2 .5 -1.2 .5 .2 .5 1.3 .5 2.5 .5 3.3 .5 3.9 .5 4.2 .5 3.9 .5 3.4 .5 2.6 .5 1.4 .5 .3 .5 -1.0 .5 -2.2 .5 -3.1 .5 -3.7 .5 -4.1 .5 -4.0 .5 -3.6 .5 -2.9 .5 -1.8 .5 -.6 .5 .6 .5 1.8 .5 2.9 .5 3.6 .5 4.0 .5 4.1 .5 3.7 .5 3.1 .5 2.1 .5 1.0 .5 -.2 .5 -1.5 .5 -2.5 .5 -3.4 .5 -4.0 .5 -4.0 .5 -3.9 .5 -3.3 .5 -2.5 .5 -1.3 .5 -.2 .5 1.2 .5 2.2 .5 3.2 .5 3.7 .5 4.1 .5 4.0 .5 3.5 .5 2.7 .5 1.7 .5 .5 .5 -.7 .5 -1.9 .5 -2.9 .5 -3.7 .5 -4.0 .5 -4.0 .5 -3.7 .5 -3.0 .5 -2.0 .5 -.9 .5 .4 .5 1.6 .5 2.6 .5 3.4 .5 4.0 .5 4.0 .5 3.9 .5 3.2 .5 2.3 .5 1.2 .5 .0 .5 -1.2 .5 -2.3 .5 -3.2 .5 -3.9 .5 -4.0 .5 -4.0 .5 -3.4 .5 -2.6 .5 -1.6 .5 -.3 .5 .8 .5 2.0 .5 3.0 .5 3.7 .5 4.0 .5 4.0 .5 3.6 .5 2.9 .5 1.9 .5 .7 .5 -.5 .5 -1.6 .5 -2.7 .5 -3.5 .5 -4.0 .5 -4.0 .5 -3.8 .5 -3.1 .5 -2.2 .5 -1.1 .5 .1 .5 1.3 .5 2.5 .5 3.2 .5 3.9 .5 4.0 .5 3.9 .5 3.3 .5 2.6 .5 1.4 .5 .2 .5 -.9 .5 -2.1 .5 -3.1 .5 -3.7 .5 -4.0 .5 -4.0 .5 -3.5 .5 -2.8 .5 -1.8 .5 -.6 .5 .6 .5 1.8 .5 2.8 .5 3.5 .5 4.0 .5 4.0 .5 3.7 .5 3.0 .5 2.1 .5 1.0 .5 -.3 .5 -1.4 .5 -2.5 .5 -3.3 .5 -3.9 .5 -4.0 .5 -3.8 .5 -3.3 .5 -2.4 .5 -1.3" stroke="#ff0000" stroke-width="2.2" fill="none" stroke-linejoin="round"/><path d="M348.0 254.5l.5 -2.6 .5 -4.3 .5 -5.7 .5 -6.4 .5 -6.5 .5 -6.2 .5 -5.2 .5 -3.7 .5 -1.9 .5 .1 .5 2.1 .5 3.8 .5 5.3 .5 6.2 .5 6.6 .5 6.3 .5 5.6 .5 4.1 .5 2.5 .5 .5 .5 -1.4 .5 -3.4 .5 -4.9 .5 -6.0 .5 -6.5 .5 -6.5 .5 -5.8 .5 -4.7 .5 -3.0 .5 -1.1 .5 .9 .5 2.8 .5 4.5 .5 5.7 .5 6.4 .5 6.6 .5 6.1 .5 5.0 .5 3.6 .5 1.7 .5 -.3 .5 -2.3 .5 -4.0 .5 -5.4 .5 -6.2 .5 -6.6 .5 -6.3 .5 -5.4 .5 -4.1 .5 -2.3 .5 -.3 .5 1.7 .5 3.5 .5 5.0 .5 6.1 .5 6.6 .5 6.4 .5 5.7 .5 4.5 .5 2.9 .5 .9 .5 -1.1 .5 -3.0 .5 -4.6 .5 -5.8 .5 -6.5 .5 -6.5 .5 -6.0 .5 -4.9 .5 -3.4 .5 -1.5 .5 .5 .5 2.4 .5 4.1 .5 5.6 .5 6.3 .5 6.6 .5 6.2 .5 5.3 .5 3.9 .5 2.1 .5 .1 .5 -1.9 .5 -3.6 .5 -5.2 .5 -6.1 .5 -6.6 .5 -6.4 .5 -5.7 .5 -4.3 .5 -2.7 .5 -.7 .5 1.3 .5 3.2 .5 4.7 .5 5.9 .5 6.5 .5 6.6 .5 5.9 .5 4.8 .5 3.2 .5 1.3 .5 -.7 .5 -2.6 .5 -4.3 .5 -5.7 .5 -6.4 .5 -6.5 .5 -6.2 .5 -5.2 .5 -3.7 .5 -1.9 .5 .1 .5 2.1 .5 3.8 .5 5.3 .5 6.2 .5 6.6 .5 6.3 .5 5.6 .5 4.1 .5 2.5 .5 .5 .5 -1.4 .5 -3.4 .5 -4.9 .5 -6.0 .5 -6.5 .5 -6.5 .5 -5.8 .5 -4.7 .5 -3.0 .5 -1.1 .5 .9 .5 2.8 .5 4.5 .5 5.7 .5 6.4 .5 6.6 .5 6.1 .5 5.0 .5 3.6 .5 1.7 .5 -.3 .5 -2.3 .5 -4.0 .5 -5.4 .5 -6.2 .5 -6.6 .5 -6.3 .5 -5.4 .5 -4.1 .5 -2.3 .5 -.3 .5 1.7 .5 3.5 .5 5.0 .5 6.1 .5 6.6 .5 6.4 .5 5.7 .5 4.5 .5 2.9 .5 .9 .5 -1.1 .5 -3.0 .5 -4.6 .5 -5.8 .5 -6.5 .5 -6.5 .5 -6.0 .5 -4.9 .5 -3.4 .5 -1.5 .5 .5 .5 2.4 .5 4.1 .5 5.6 .5 6.3 .5 6.6 .5 6.2 .5 5.3 .5 3.9 .5 2.1 .5 .1 .5 -1.9 .5 -3.6 .5 -5.2 .5 -6.1 .5 -6.6 .5 -6.4 .5 -5.7 .5 -4.3 .5 -2.7 .5 -.7 .5 1.3 .5 3.2 .5 4.7 .5 5.9 .5 6.5 .5 6.6 .5 5.9 .5 4.8 .5 3.2 .5 1.3 .5 -.7 .5 -2.6 .5 -4.3 .5 -5.7 .5 -6.4 .5 -6.5 .5 -6.2 .5 -5.2 .5 -3.7 .5 -1.9 .5 .1 .5 2.1 .5 3.8 .5 5.3 .5 6.2 .5 6.6 .5 6.3 .5 5.6 .5 4.1 .5 2.5 .5 .5 .5 -1.4 .5 -3.4 .5 -4.9 .5 -6.0 .5 -6.5 .5 -6.5 .5 -5.8 .5 -4.7 .5 -3.0 .5 -1.1 .5 .9 .5 2.8 .5 4.5 .5 5.7 .5 6.4 .5 6.6 .5 6.1 .5 5.0 .5 3.6 .5 1.7 .5 -.3 .5 -2.3 .5 -4.0 .5 -5.4 .5 -6.2 .5 -6.6 .5 -6.3 .5 -5.4 .5 -4.1 .5 -2.3 .5 -.3 .5 1.7 .5 3.5 .5 5.0 .5 6.1 .5 6.6 .5 6.4 .5 5.7 .5 4.5 .5 2.9 .5 .9 .5 -1.1 .5 -3.0 .5 -4.6 .5 -5.8 .5 -6.5 .5 -6.5 .5 -6.0 .5 -4.9 .5 -3.4 .5 -1.5 .5 .5 .5 2.4 .5 4.1 .5 5.6 .5 6.3 .5 6.6 .5 6.2 .5 5.3 .5 3.9 .5 2.1 .5 .1 .5 -1.9 .5 -3.6 .5 -5.2 .5 -6.1 .5 -6.6 .5 -6.4 .5 -5.7 .5 -4.3 .5 -2.7 .5 -.7 .5 1.3 .5 3.2 .5 4.7 .5 5.9 .5 6.5 .5 6.6 .5 5.9 .5 4.8 .5 3.2 .5 1.3 .5 -.7 .5 -2.6 .5 -4.3 .5 -5.7 .5 -6.4 .5 -6.5 .5 -6.2 .5 -5.2 .5 -3.7 .5 -1.9 .5 .1 .5 2.1 .5 3.8 .5 5.3 .5 6.2 .5 6.6 .5 6.3 .5 5.6 .5 4.1 .5 2.5 .5 .5 .5 -1.4 .5 -3.4 .5 -4.9 .5 -6.0 .5 -6.5 .5 -6.5 .5 -5.8 .5 -4.7 .5 -3.0 .5 -1.1 .5 .9 .5 2.8 .5 4.5 .5 5.7 .5 6.4 .5 6.6 .5 6.1 .5 5.0 .5 3.6 .5 1.7 .5 -.3 .5 -2.3 .5 -4.0 .5 -5.4 .5 -6.2 .5 -6.6 .5 -6.3 .5 -5.4 .5 -4.1 .5 -2.3 .5 -.3 .5 1.7 .5 3.5 .5 5.0 .5 6.1 .5 6.6 .5 6.4 .5 5.7 .5 4.5 .5 2.9 .5 .9 .5 -1.1 .5 -3.0 .5 -4.6 .5 -5.8 .5 -6.5 .5 -6.5 .5 -6.0 .5 -4.9 .5 -3.4 .5 -1.5 .5 .5 .5 2.4 .5 4.1 .5 5.6 .5 6.3 .5 6.6 .5 6.2 .5 5.3 .5 3.9 .5 2.1 .5 .1 .5 -1.9 .5 -3.6 .5 -5.2 .5 -6.1 .5 -6.6 .5 -6.4 .5 -5.7 .5 -4.3 .5 -2.7 .5 -.7 .5 1.3 .5 3.2 .5 4.7 .5 5.9 .5 6.5 .5 6.6 .5 5.9 .5 4.8 .5 3.2 .5 1.3 .5 -.7 .5 -2.6 .5 -4.3 .5 -5.7 .5 -6.4 .5 -6.5 .5 -6.2 .5 -5.2 .5 -3.7 .5 -1.9 .5 .1 .5 2.1 .5 3.8 .5 5.3 .5 6.2 .5 6.6 .5 6.3 .5 5.6 .5 4.1 .5 2.5 .5 .5 .5 -1.4 .5 -3.4 .5 -4.9 .5 -6.0 .5 -6.5 .5 -6.5 .5 -5.8 .5 -4.7 .5 -3.0 .5 -1.1 .5 .9 .5 2.8 .5 4.5 .5 5.7 .5 6.4 .5 6.6 .5 6.1 .5 5.0 .5 3.6 .5 1.7 .5 -.3 .5 -2.3 .5 -4.0 .5 -5.4 .5 -6.2 .5 -6.6 .5 -6.3 .5 -5.4 .5 -4.1 .5 -2.3 .5 -.3 .5 1.7 .5 3.5 .5 5.0 .5 6.1 .5 6.6 .5 6.4 .5 5.7 .5 4.5 .5 2.9 .5 .9 .5 -1.1 .5 -3.0 .5 -4.6 .5 -5.8 .5 -6.5 .5 -6.5 .5 -6.0 .5 -4.9 .5 -3.4 .5 -1.5 .5 .5 .5 2.4 .5 4.1 .5 5.6 .5 6.3 .5 6.6 .5 6.2 .5 5.3 .5 3.9 .5 2.1 .5 .1 .5 -1.9 .5 -3.6 .5 -5.2 .5 -6.1 .5 -6.6 .5 -6.4 .5 -5.7 .5 -4.3 .5 -2.7 .5 -.7 .5 1.3 .5 3.2 .5 4.7 .5 5.9 .5 6.5 .5 6.6 .5 5.9 .5 4.8 .5 3.2 .5 1.3 .5 -.7 .5 -2.6 .5 -4.3 .5 -5.7 .5 -6.4 .5 -6.5 .5 -6.2 .5 -5.2 .5 -3.7 .5 -1.9 .5 .1 .5 2.1 .5 3.8 .5 5.3 .5 6.2 .5 6.6 .5 6.3 .5 5.6 .5 4.1 .5 2.5 .5 .5 .5 -1.4 .5 -3.4 .5 -4.9 .5 -6.0 .5 -6.5 .5 -6.5 .5 -5.8 .5 -4.7 .5 -3.0 .5 -1.1 .5 .9 .5 2.8 .5 4.5 .5 5.7 .5 6.4 .5 6.6 .5 6.1 .5 5.0 .5 3.6 .5 1.7 .5 -.3 .5 -2.3 .5 -4.0 .5 -5.4 .5 -6.2 .5 -6.6 .5 -6.3 .5 -5.4 .5 -4.1 .5 -2.3 .5 -.3 .5 1.7 .5 3.5 .5 5.0 .5 6.1 .5 6.6 .5 6.4 .5 5.7 .5 4.5 .5 2.9 .5 .9 .5 -1.1 .5 -3.0 .5 -4.6 .5 -5.8 .5 -6.5 .5 -6.5 .5 -6.0 .5 -4.9 .5 -3.4 .5 -1.5 .5 .5 .5 2.4 .5 4.1 .5 5.6 .5 6.3 .5 6.6 .5 6.2 .5 5.3 .5 3.9 .5 2.1 .5 .1 .5 -1.9 .5 -3.6 .5 -5.2 .5 -6.1 .5 -6.6 .5 -6.4 .5 -5.7 .5 -4.3 .5 -2.7 .5 -.7 .5 1.3 .5 3.2 .5 4.7 .5 5.9 .5 6.5 .5 6.6 .5 5.9 .5 4.8 .5 3.2 .5 1.3 .5 -.7 .5 -2.6 .5 -4.3 .5 -5.7 .5 -6.4 .5 -6.5 .5 -6.2 .5 -5.2 .5 -3.7 .5 -1.9 .5 .1 .5 2.1 .5 3.8 .5 5.3 .5 6.2 .5 6.6 .5 6.3 .5 5.6 .5 4.1 .5 2.5 .5 .5 .5 -1.4 .5 -3.4 .5 -4.9 .5 -6.0 .5 -6.5 .5 -6.5 .5 -5.8 .5 -4.7 .5 -3.0 .5 -1.1 .5 .9 .5 2.8 .5 4.5 .5 5.7 .5 6.4 .5 6.6 .5 6.1 .5 5.0 .5 3.6 .5 1.7 .5 -.3 .5 -2.3 .5 -4.0 .5 -5.4 .5 -6.2 .5 -6.6 .5 -6.3 .5 -5.4 .5 -4.1 .5 -2.3 .5 -.3 .5 1.7 .5 3.5 .5 5.0 .5 6.1 .5 6.6 .5 6.4 .5 5.7 .5 4.5 .5 2.9 .5 .9 .5 -1.1 .5 -3.0 .5 -4.6 .5 -5.8 .5 -6.5 .5 -6.5 .5 -6.0 .5 -4.9 .5 -3.4 .5 -1.5 .5 .5 .5 2.4 .5 4.1 .5 5.6 .5 6.3 .5 6.6 .5 6.2 .5 5.3 .5 3.9 .5 2.1 .5 .1 .5 -1.9 .5 -3.6 .5 -5.2 .5 -6.1 .5 -6.6 .5 -6.4 .5 -5.7 .5 -4.3 .5 -2.7 .5 -.7 .5 1.3 .5 3.2 .5 4.7 .5 5.9 .5 6.5 .5 6.6 .5 5.9 .5 4.8 .5 3.2 .5 1.3 .5 -.7 .5 -2.6 .5 -4.3 .5 -5.7 .5 -6.4 .5 -6.5 .5 -6.2 .5 -5.2 .5 -3.7 .5 -1.9 .5 .1 .5 2.1 .5 3.8 .5 5.3 .5 6.2 .5 6.6 .5 6.3 .5 5.6 .5 4.1 .5 2.5 .5 .5 .5 -1.4 .5 -3.4 .5 -4.9 .5 -6.0 .5 -6.5 .5 -6.5 .5 -5.8 .5 -4.7 .5 -3.0 .5 -1.1 .5 .9 .5 2.8 .5 4.5 .5 5.7 .5 6.4 .5 6.6 .5 6.1 .5 5.0 .5 3.6 .5 1.7 .5 -.3 .5 -2.3 .5 -4.0 .5 -5.4 .5 -6.2 .5 -6.6 .5 -6.3 .5 -5.4 .5 -4.1 .5 -2.3 .5 -.3 .5 1.7 .5 3.5 .5 5.0 .5 6.1 .5 6.6 .5 6.4 .5 5.7 .5 4.5 .5 2.9 .5 .9 .5 -1.1 .5 -3.0 .5 -4.6 .5 -5.8 .5 -6.5 .5 -6.5 .5 -6.0 .5 -4.9 .5 -3.4 .5 -1.5 .5 .5 .5 2.4 .5 4.1 .5 5.6 .5 6.3 .5 6.6 .5 6.2 .5 5.3 .5 3.9 .5 2.1 .5 .1 .5 -1.9 .5 -3.6 .5 -5.2 .5 -6.1 .5 -6.6 .5 -6.4 .5 -5.7 .5 -4.3 .5 -2.7 .5 -.7 .5 1.3 .5 3.2 .5 4.7 .5 5.9 .5 6.5 .5 6.6 .5 5.9 .5 4.8 .5 3.2 .5 1.3 .5 -.7 .5 -2.6 .5 -4.3 .5 -5.7 .5 -6.4 .5 -6.5 .5 -6.2 .5 -5.2 .5 -3.7 .5 -1.9 .5 .1 .5 2.1 .5 3.8 .5 5.3 .5 6.2 .5 6.6 .5 6.3 .5 5.6 .5 4.1 .5 2.5 .5 .5 .5 -1.4 .5 -3.4 .5 -4.9 .5 -6.0 .5 -6.5 .5 -6.5 .5 -5.8 .5 -4.7 .5 -3.0 .5 -1.1 .5 .9 .5 2.8 .5 4.5 .5 5.7 .5 6.4 .5 6.6 .5 6.1 .5 5.0 .5 3.6 .5 1.7 .5 -.3 .5 -2.3 .5 -4.0 .5 -5.4 .5 -6.2 .5 -6.6 .5 -6.3 .5 -5.4 .5 -4.1 .5 -2.3 .5 -.3 .5 1.7 .5 3.5 .5 5.0 .5 6.1 .5 6.6 .5 6.4 .5 5.7 .5 4.5 .5 2.9 .5 .9 .5 -1.1 .5 -3.0 .5 -4.6 .5 -5.8 .5 -6.5 .5 -6.5 .5 -6.0 .5 -4.9 .5 -3.4 .5 -1.5 .5 .5 .5 2.4 .5 4.1 .5 5.6 .5 6.3 .5 6.6 .5 6.2 .5 5.3 .5 3.9 .5 2.1 .5 .1 .5 -1.9 .5 -3.6 .5 -5.2 .5 -6.1 .5 -6.6 .5 -6.4 .5 -5.7 .5 -4.3 .5 -2.7 .5 -.7 .5 1.3 .5 3.2 .5 4.7 .5 5.9 .5 6.5 .5 6.6 .5 5.9 .5 4.8 .5 3.2 .5 1.3 .5 -.7 .5 -2.6 .5 -4.3 .5 -5.7 .5 -6.4 .5 -6.5 .5 -6.2 .5 -5.2 .5 -3.7 .5 -1.9 .5 .1 .5 2.1 .5 3.8 .5 5.3 .5 6.2 .5 6.6 .5 6.3 .5 5.6 .5 4.1 .5 2.5 .5 .5 .5 -1.4 .5 -3.4 .5 -4.9 .5 -6.0 .5 -6.5 .5 -6.5 .5 -5.8 .5 -4.7 .5 -3.0 .5 -1.1 .5 .9 .5 2.8 .5 4.5 .5 5.7 .5 6.4 .5 6.6 .5 6.1 .5 5.0 .5 3.6 .5 1.7 .5 -.3 .5 -2.3 .5 -4.0 .5 -5.4 .5 -6.2 .5 -6.6 .5 -6.3 .5 -5.4 .5 -4.1 .5 -2.3 .5 -.3 .5 1.7 .5 3.5 .5 5.0 .5 6.1 .5 6.6 .5 6.4 .5 5.7 .5 -11.7 .5 -8.8 .5 -10.2 .5 -13.8 .5 -14.2 .5 -12.0 .5 -7.2 .5 -.4 .5 7.8 .5 19.7 .5 23.6 .5 28.0 .5 30.5 .5 26.8 .5 20.6 .5 12.4 .5 2.9 .5 -7.2 .5 -16.5 .5 -24.7 .5 -30.5 .5 -32.5 .5 -25.6 .5 -21.8 .5 -16.2 .5 -9.3 .5 -2.0 .5 8.3 .5 13.9 .5 17.5 .5 18.8 .5 17.9 .5 18.3 .5 16.3 .5 12.5 .5 6.1 .5 2.4 .5 -2.6 .5 -7.1 .5 -10.0 .5 -12.7 .5 -14.2 .5 -14.3 .5 -13.3 .5 -10.9 .5 -7.6 .5 -3.8 .5 .2 .5 4.2 .5 7.6 .5 10.2 .5 11.9 .5 12.4 .5 11.7 .5 10.1 .5 7.6 .5 4.3 .5 .9 .5 -2.6 .5 -5.7 .5 -8.2 .5 -9.9 .5 -10.8 .5 -10.5 .5 -9.3 .5 -7.3 .5 -4.7 .5 -1.7 .5 1.3 .5 4.1 .5 6.6 .5 8.4 .5 9.3 .5 9.4 .5 8.6 .5 7.1 .5 4.9 .5 2.4 .5 -.3 .5 -3.0 .5 -5.2 .5 -7.0 .5 -8.1 .5 -8.4 .5 -8.0 .5 -6.9 .5 -5.0 .5 -2.9 .5 -.5 .5 1.9 .5 4.1 .5 5.9 .5 7.1 .5 7.6 .5 7.4 .5 6.6 .5 5.1 .5 3.3 .5 1.1 .5 -1.0 .5 -3.2 .5 -4.9 .5 -6.2 .5 -6.8 .5 -7.0 .5 -6.3 .5 -5.2 .5 -3.6 .5 -1.7 .5 .4 .5 2.3 .5 4.1 .5 5.4 .5 6.2 .5 6.5 .5 6.1 .5 5.2 .5 3.9 .5 2.1 .5 .3 .5 -1.7 .5 -3.3 .5 -4.7 .5 -5.7 .5 -6.0 .5 -5.9 .5 -5.2 .5 -4.1 .5 -2.5 .5 -.8 .5 1.0 .5 2.6 .5 4.1 .5 5.2 .5 5.6 .5 5.7 .5 5.2 .5 4.3 .5 2.9 .5 1.2 .5 -.4 .5 -2.0 .5 -3.6 .5 -4.6 .5 -5.3 .5 -5.5 .5 -5.2 .5 -4.4 .5 -3.2 .5 -1.7 .5 -.1 .5 1.5 .5 3.0 .5 4.2 .5 4.9 .5 5.3 .5 5.2 .5 4.5 .5 3.5 .5 2.1 .5 .6 .5 -23.5 .5 12.3 .5 21.6 .5 16.8 .5 12.6 .5 7.3 .5 1.2 .5 -4.7 .5 -10.3 .5 -14.9 .5 -17.9 .5 -19.5 .5 -19.0 .5 -17.0 .5 -13.3 .5 -8.5 .5 -2.9 .5 2.8 .5 8.3 .5 13.0 .5 16.3 .5 18.2 .5 18.4 .5 16.8 .5 13.8 .5 9.5 .5 4.4 .5 -1.1 .5 -6.4 .5 -11.0 .5 -14.6 .5 -16.9 .5 -17.6 .5 -16.6 .5 -14.1 .5 -10.4 .5 -5.7 .5 -.5 .5 4.5 .5 9.3 .5 13.0 .5 15.6 .5 16.7 .5 16.2 .5 14.2 .5 11.1 .5 6.8 .5 2.0 .5 -2.9 .5 -7.6 .5 -11.4 .5 -14.2 .5 -15.7 .5 -15.6 .5 -14.2 .5 -11.5 .5 -7.7 .5 -3.3 .5 1.4 .5 5.9 .5 9.8 .5 12.8 .5 14.5 .5 15.0 .5 14.0 .5 11.7 .5 8.4 .5 4.4 .5 .3 .5 -4.1 .5 -8.1 .5 -11.4 .5 -13.7 .5 -14.6 .5 -14.2 .5 -12.5 .5 -9.7 .5 -6.0 .5 -1.6 .5 2.8 .5 7.0 .5 10.6 .5 13.2 .5 14.6 .5 14.5 .5 13.3 .5 10.8 .5 7.2 .5 2.9 .5 -1.5 .5 -5.8 .5 -9.7 .5 -12.6 .5 -14.4 .5 -14.8 .5 -13.9 .5 -11.7 .5 -8.4 .5 -4.4 .5 .1 .5 4.5 .5 8.7 .5 12.0 .5 14.1 .5 15.1 .5 14.6 .5 12.7 .5 9.8 .5 5.8 .5 1.3 .5 -3.4 .5 -7.6 .5 -11.3 .5 -13.9 .5 -15.3 .5 -15.2 .5 -13.7 .5 -11.0 .5 -7.2 .5 -2.7 .5 2.0 .5 6.5 .5 10.6 .5 13.5 .5 15.3 .5 15.7 .5 14.5 .5 12.2 .5 8.6 .5 4.2 .5 -.6 .5 -5.3 .5 -9.6 .5 -13.0 .5 -15.2 .5 -16.1 .5 -15.3 .5 -13.3 .5 -9.9 .5 -5.7 .5 -.9 .5 4.0 .5 8.6 .5 12.3 .5 15.0 .5 16.2 .5 16.0 .5 14.3 .5 11.3 .5 7.2 .5 2.4 .5 -2.6 .5 -7.4 .5 -11.5 .5 -14.6 .5 -16.4 .5 -16.5 .5 -15.3 .5 -12.4 .5 -8.4 .5 -3.7 .5 1.3 .5 6.3 .5 10.5 .5 13.8 .5 15.9 .5 16.4 .5 15.4 .5 13.1 .5 9.4 .5 5.1 .5 .2 .5 -4.7 .5 -9.1 .5 -12.7 .5 -15.0 .5 -16.1 .5 -15.5 .5 -13.6 .5 -10.4 .5 -6.3 .5 -1.7 .5 3.2 .5 7.7 .5 11.5 .5 14.1 .5 15.5 .5 15.5 .5 14.0 .5 11.2 .5 7.5 .5 3.0 .5 -1.7 .5 -6.3 .5 -10.2 .5 -13.1 .5 -14.9 .5 -15.3 .5 -14.3 .5 -11.8 .5 -8.5 .5 -4.3 .5 .3 .5 4.8 .5 8.9 .5 12.1 .5 14.2 .5 14.9 .5 14.4 .5 12.4 .5 9.4 .5 5.4 .5 1.1 .5 -3.5 .5 -7.5 .5 -11.0 .5 -13.3 .5 -14.5 .5 -14.3 .5 -12.7 .5 -10.0 .5 -6.4 .5 -2.2 .5 2.1 .5 6.2 .5 9.7 .5 12.3 .5 13.7 .5 13.8 .5 12.7 .5 10.4 .5 7.2 .5 3.3 .5 -.8 .5 -4.8 .5 -8.3 .5 -11.1 .5 -12.7 .5 -13.3 .5 -12.5 .5 -10.6 .5 -7.8 .5 -4.3 .5 -.4 .5 3.4 .5 7.0 .5 9.8 .5 11.8 .5 12.5 .5 12.2 .5 10.7 .5 8.3 .5 5.1 .5 1.5 .5 -2.2 .5 -5.7 .5 -8.6 .5 -10.6 .5 -11.8 .5 -11.7 .5 -10.7 .5 -8.6 .5 -5.8 .5 -2.4 .5 1.0 .5 4.5 .5 7.3 .5 9.6 .5 10.9 .5 11.2 .5 10.4 .5 8.8 .5 6.3 .5 3.2 .5 .0 .5 -3.2 .5 -6.2 .5 -8.5 .5 -9.9 .5 -10.6 .5 -10.1 .5 -8.9 .5 -6.8 .5 -4.0 .5 -1.0 .5 2.1 .5 5.1 .5 7.4 .5 9.2 .5 10.0 .5 9.9 .5 9.0 .5 7.1 .5 4.7 .5 1.8 .5 -1.2 .5 -4.0 .5 -6.5 .5 -8.3 .5 -9.4 .5 -9.6 .5 -8.9 .5 -7.4 .5 -5.2 .5 -2.5 .5 .2 .5 3.1 .5 5.5 .5 7.5 .5 8.7 .5 9.2 .5 8.7 .5 7.5 .5 5.6 .5 3.3 .5 .5 .5 -2.1 .5 -4.6 .5 -6.6 .5 -8.0 .5 -8.7 .5 -8.5 .5 -7.5 .5 -5.9 .5 -3.8 .5 -1.3 .5 1.3 .5 3.7 .5 5.7 .5 7.3 .5 8.1 .5 8.1 .5 7.5 .5 6.1 .5 4.2 .5 1.9 .5 -.4 .5 -2.9 .5 -4.8 .5 -6.4 .5 -7.6 .5 -7.9 .5 -7.5 .5 -6.5 .5 -4.8 .5 -2.8 .5 -.4 .5 2.0 .5 4.2 .5 6.1 .5 7.2 .5 7.9 .5 7.7 .5 6.9 .5 5.4 .5 3.4 .5 1.1 .5 -1.3 .5 -1.3 .5 -4.5 .5 -7.5 .5 -10.2 .5 -11.1 .5 -10.3 .5 -8.4 .5 -5.7 .5 -2.6 .5 .8 .5 6.3 .5 8.3 .5 9.2 .5 8.9 .5 8.2 .5 7.8 .5 6.6 .5 4.8 .5 2.6 .5 .2 .5 -2.4 .5 -4.5 .5 -6.4 .5 -7.7 .5 -8.2 .5 -8.0 .5 -7.0 .5 -5.4 .5 -3.3 .5 -.9 .5 1.6 .5 4.0 .5 5.9 .5 7.3 .5 8.1 .5 8.1 .5 7.4 .5 5.9 .5 4.0 .5 1.7 .5 -.9 .5 -3.2 .5 -5.4 .5 -7.0 .5 -8.0 .5 -8.1 .5 -7.7 .5 -6.4 .5 -4.7 .5 -2.3 .5 .1 .5 2.5 .5 4.8 .5 6.6 .5 7.7 .5 8.2 .5 7.9 .5 6.9 .5 5.2 .5 3.1 .5 .6 .5 -1.8 .5 -4.2 .5 -6.0 .5 -7.5 .5 -8.1 .5 -8.1 .5 -7.3 .5 -5.7 .5 -3.8 .5 -1.4 .5 1.1 .5 3.5 .5 5.5 .5 7.2 .5 8.0 .5 8.1 .5 7.6 .5 6.3 .5 4.4 .5 2.1 .5 -.3 .5 -2.8 .5 -5.0 .5 -6.7 .5 -7.8 .5 -8.2 .5 -7.9 .5 -6.7 .5 -5.0 .5 -2.9 .5 -.4 .5 2.1 .5 4.4 .5 6.2 .5 7.6 .5 8.2 .5 8.0 .5 7.1 .5 5.6 .5 3.5 .5 1.1 .5 -1.3 .5 -3.8 .5 -5.7 .5 -7.2 .5 -8.0 .5 -8.1 .5 -7.4 .5 -6.0 .5 -4.1 .5 -1.8 .5 .6 .5 3.0 .5 5.1 .5 6.7 .5 7.8 .5 8.0 .5 7.6 .5 6.4 .5 4.7 .5 2.5 .5 .2 .5 -2.3 .5 -4.5 .5 -6.2 .5 -7.5 .5 -7.9 .5 -7.7 .5 -6.8 .5 -5.2 .5 -3.1 .5 -.9 .5 1.6 .5 3.8 .5 5.7 .5 7.1 .5 7.7 .5 7.8 .5 7.0 .5 5.6 .5 3.8 .5 1.5 .5 -.8 .5 -3.1 .5 -5.1 .5 -6.7 .5 -7.5 .5 -7.7 .5 -7.2 .5 -6.1 .5 -4.3 .5 -2.2 .5 .1 .5 2.4 .5 4.5 .5 6.2 .5 7.2 .5 7.7 .5 7.3 .5 6.4 .5 4.9 .5 2.8 .5 .5 .5 -1.7 .5 -3.8 .5 -5.7 .5 -6.9 .5 -7.5 .5 -7.4 .5 -6.7 .5 -5.2 .5 -3.5 .5 -1.2 .5 1.0 .5 3.2 .5 5.1 .5 6.5 .5 7.3 .5 7.5 .5 6.8 .5 5.7 .5 4.0 .5 1.8 .5 -.3 .5 -2.5 .5 -4.6 .5 -6.0 .5 -7.0 .5 -7.4 .5 -7.0 .5 -6.0 .5 -4.5 .5 -2.5 .5 -.3 .5 1.9 .5 3.9 .5 5.5 .5 6.7 .5 7.3 .5 7.1 .5 6.3 .5 4.9 .5 3.1 .5 1.0 .5 -1.2 .5 -3.3 .5 -5.1 .5 -6.3 .5 -7.1 .5 -7.1 .5 -6.6 .5 -5.3 .5 -3.6 .5 -1.7 .5 .6 .5 2.6 .5 4.6 .5 5.9 .5 6.9 .5 7.1 .5 6.7 .5 5.7 .5 4.1 .5 2.3 .5 .1 .5 -2.1 .5 -3.9 .5 -5.5 .5 -6.6 .5 -7.0 .5 -6.9 .5 -6.0 .5 -4.6 .5 -2.8 .5 -.7 .5 1.4 .5 3.3 .5 5.1 .5 6.2 .5 6.9 .5 6.9 .5 6.2 .5 5.1 .5 3.3 .5 1.4 .5 -.8 .5 -2.7 .5 -4.6 .5 -5.9 .5 -6.7 .5 -6.8 .5 -6.5 .5 -5.3 .5 -3.9 .5 -1.9 .5 .1 .5 2.1 .5 4.0 .5 5.5 .5 6.4 .5 6.9 .5 6.5 .5 5.7 .5 4.3 .5 2.5 .5 .5 .5 -1.5 .5 -3.4 .5 -5.1 .5 -6.1 .5 -6.7 .5 -6.6 .5 -6.0 .5 -4.7 .5 -3.0 .5 -1.1 .5 .9 .5 2.8 .5 4.6 .5 5.8 .5 6.5 .5 6.6 .5 6.2 .5 5.0 .5 3.6 .5 1.7 .5 -.3 .5 -2.3 .5 -4.0 .5 -5.4 .5 -6.3 .5 -6.6 .5 -6.3 .5 -5.4 .5 -4.0 .5 -2.2 .5 -.3 .5 1.6 .5 3.5 .5 5.0 .5 6.1 .5 6.4 .5 6.4 .5 5.6 .5 4.5 .5 2.7 .5 .9 .5 -1.1 .5 -2.9 .5 -4.6 .5 -5.7 .5 -6.3 .5 -6.4 .5 -5.8 .5 -4.8 .5 -3.3 .5 -1.4 .5 .5 .5 2.4 .5 4.0 .5 5.4 .5 6.1 .5 6.3 .5 6.0 .5 5.1 .5 3.7 .5 2.0 .5 .1 .5 -1.8 .5 -3.5 .5 -5.0 .5 -5.9 .5 -6.2 .5 -6.1 .5 -5.4 .5 -4.1 .5 -2.5 .5 -.6 .5 1.2 .5 3.0 .5 4.5 .5 5.6 .5 6.1 .5 6.2 .5 5.5 .5 4.5 .5 3.0 .5 1.2 .5 -.7 .5 -2.4 .5 -4.1 .5 -5.2 .5 -6.0 .5 -6.1 .5 -5.7 .5 -4.8 .5 -3.4 .5 -1.8 .5 .1 .5 1.9 .5 3.6 .5 4.9 .5 5.7 .5 6.1 .5 5.8 .5 5.1 .5 3.8 .5 2.2 .5 .5 .5 -1.4 .5 -3.1 .5 -4.4 .5 -5.5 .5 -5.9 .5 -5.9 .5 -5.3 .5 -4.2 .5 -2.7 .5 -1.0 .5 .8 .5 2.6 .5 4.0 .5 5.2 .5 5.8 .5 5.8 .5 5.5 .5 4.5 .5 3.1 .5 1.5 .5 -.2 .5 -2.1 .5 -3.5 .5 -4.8 .5 -5.6 .5 -5.9 .5 -5.5 .5 -4.8 .5 -3.5 .5 -2.0 .5 -.3 .5 1.5 .5 3.1 .5 4.4 .5 5.4 .5 5.7 .5 5.6 .5 5.0 .5 3.9 .5 2.5 .5 .7 .5 -.9 .5 -2.6 .5 -4.0 .5 -5.1 .5 -5.6 .5 -5.6 .5 -5.2 .5 -4.2 .5 -2.9 .5 -1.2 .5 .4 .5 2.1 .5 3.6 .5 4.7 .5 5.4 .5 5.6 .5 5.3 .5 4.5 .5 3.2 .5 1.8 .5 .1 .5 -1.6 .5 -3.1 .5 -4.4 .5 -5.2 .5 -5.5 .5 -5.4 .5 -4.7 .5 -3.6 .5 -2.2 .5 -.6 .5 1.1 .5 2.7 .5 3.9 .5 4.9 .5 5.4 .5 5.4 .5 4.9 .5 4.0 .5 2.6 .5 1.0 .5 -.6 .5 -2.1 .5 -3.6 .5 -4.6 .5 -5.2 .5 -5.4 .5 -5.0 .5 -4.2 .5 -3.0 .5 -1.5 .5 .0 .5 1.7 .5 3.2 .5 4.2 .5 5.1 .5 5.3 .5 5.1 .5 4.4 .5 3.4 .5 1.9 .5 .4 .5 -1.2 .5 -2.7 .5 -3.9 .5 -4.8 .5 -5.2 .5 -5.1 .5 -4.6 .5 -3.7 .5 -2.3 .5 -.9 .5 .7 .5 2.2 .5 3.6 .5 4.5 .5 5.0 .5 5.1 .5 4.8 .5 3.9 .5 2.8 .5 1.3 .5 -.3 .5 -1.7 .5 -3.2 .5 -4.1 .5 -4.9 .5 -5.1 .5 -4.8 .5 -4.2 .5 -3.1 .5 -1.7 .5 -.2 .5 1.3 .5 2.7 .5 3.8 .5 4.7 .5 5.0 .5 4.8 .5 4.4 .5 3.4 .5 2.1 .5 .7 .5 -.9 .5 -2.2 .5 -3.5 .5 -4.4 .5 -4.9 .5 -4.9 .5 -4.4 .5 -3.7 .5 -2.5 .5 -1.1 .5 .4 .5 1.8 .5 3.1 .5 4.1 .5 4.7 .5 4.9 .5 4.5 .5 3.9 .5 2.8 .5 1.6 .5 .0 .5 -1.4 .5 -2.7 .5 -3.7 .5 -4.5 .5 -4.8 .5 -4.6 .5 -4.1 .5 -3.1 .5 -1.9 .5 -.5 .5 .9 .5 2.3 .5 3.4 .5 4.3 .5 4.7 .5 4.6 .5 4.3 .5 3.4 .5 2.3 .5 1.0 .5 -.5 .5 -1.9 .5 -3.1 .5 -4.0 .5 -4.6 .5 -4.8 .5 -4.4 .5 -3.7 .5 -2.6 .5 -1.4 .5 .1 .5 1.4 .5 2.8 .5 3.8 .5 4.4 .5 4.7 .5 4.6 .5 4.0 .5 3.0 .5 1.7 .5 .4 .5 -1.1 .5 -2.4 .5 -3.5 .5 -4.2 .5 -4.7 .5 -4.7 .5 -4.1 .5 -3.4 .5 -2.1 .5 -.8 .5 .6 .5 2.0 .5 3.2 .5 4.1 .5 4.6 .5 4.7 .5 4.3 .5 3.6 .5 2.6 .5 1.2 .5 -.2 .5 -1.6 .5 -2.9 .5 -3.8 .5 -4.5 .5 -4.7 .5 -4.5 .5 -3.9 .5 -2.8 .5 -1.7 .5 -.2 .5 1.2 .5 2.5 .5 3.6 .5 4.3 .5 4.7 .5 4.6 .5 4.1 .5 3.2 .5 2.0 .5 .6 .5 -.7 .5 -2.2 .5 -3.2 .5 -4.2 .5 -4.6 .5 -4.6 .5 -4.3 .5 -3.5 .5 -2.4 .5 -1.1 .5 .4 .5 1.7 .5 3.0 .5 3.9 .5 4.5 .5 4.7 .5 4.4 .5 3.7 .5 2.8 .5 1.5 .5 .1 .5 -1.4 .5 -2.6 .5 -3.6 .5 -4.4 .5 -4.7 .5 -4.5 .5 -4.0 .5 -3.1 .5 -1.8 .5 -.6 .5 1.0 .5 2.2 .5 3.4 .5 4.1 .5 4.7 .5 4.6 .5 4.2 .5 3.3 .5 2.3 .5 .9 .5 -.5 .5 -1.8 .5 -3.1 .5 -3.9 .5 -4.6 .5 -4.6 .5 -4.4 .5 -3.6 .5 -2.6 .5 -1.4 .5 .1 .5 1.4 .5 2.8 .5 3.7 .5 4.4 .5 4.6 .5 4.5 .5 3.9 .5 2.9 .5 1.8 .5 .4 .5 -1.1 .5 -2.3 .5 -3.5 .5 -4.2 .5 -4.6 .5 -4.6 .5 -4.1 .5 -3.3 .5 -2.1 .5 -.8 .5 .7 .5 1.9 .5 3.2 .5 4.0 .5 4.5 .5 4.6 .5 4.3 .5 3.6 .5 2.5 .5 1.2 .5 -.2 .5 -1.6 .5 -2.8 .5 -3.8 .5 -4.4 .5 -4.7 .5 -4.4 .5 -3.8 .5 -2.8 .5 -1.6 .5 -.2 .5 1.1 .5 2.5 .5 3.5 .5 4.3 .5 4.6 .5 4.5 .5 4.0 .5 3.2 .5 2.0 .5 .6 .5 -.8 .5 -2.0 .5 -3.3 .5 -4.1 .5 -4.5 .5 -4.6 .5 -4.2 .5 -3.4 .5 -2.4 .5 -1.0 .5 .3 .5 1.7 .5 2.9 .5 3.9 .5 4.4 .5 4.6 .5 4.4 .5 3.7 .5 2.7 .5 1.4 .5 .1 .5 -1.3 .5 -2.6 .5 -3.6 .5 -4.2 .5 -4.6 .5 -4.5 .5 -3.9 .5 -3.1 .5 -1.8 .5 -.5 .5 .9 .5 2.2 .5 3.3 .5 4.1 .5 4.6 .5 4.5 .5 4.1 .5 3.4 .5 2.2 .5 .9 .5 -.5 .5 -1.8 .5 -3.0 .5 -3.9 .5 -4.5 .5 -4.6 .5 -4.2 .5 -3.6 .5 -2.6 .5 -1.3 .5 .0 .5 1.5 .5 2.6 .5 3.7 .5 4.3 .5 4.6 .5 4.4 .5 3.8 .5 2.9 .5 1.8 .5 .3 .5 -1.0 .5 -2.3 .5 -3.4 .5 -4.2 .5 -4.5 .5 -4.5 .5 -4.1 .5 -3.2 .5 -2.1 .5 -.7 .5 .6 .5 1.9 .5 3.1 .5 4.0 .5 4.4 .5 4.6 .5 4.2 .5 3.5 .5 2.4 .5 1.2 .5 -.2 .5 -1.5 .5 -2.8 .5 -3.7 .5 -4.4 .5 -4.5 .5 -4.4 .5 -3.7 .5 -2.8 .5 -1.6 .5 -.2 .5 1.1 .5 2.5 .5 3.4 .5 4.2 .5 4.6 .5 4.4 .5 4.0 .5 3.1 .5 1.9 .5 .7 .5 -.8 .5 -2.0 .5 -3.2 .5 -4.0 .5 -4.5 .5 -4.5 .5 -4.2 .5 -3.3 .5 -2.4 .5 -1.0 .5 .3 .5 1.7 .5 2.9 .5 3.8 .5 4.3 .5 4.6 .5 4.3 .5 3.6 .5 2.7 .5 1.4 .5 .1 .5 -1.3 .5 -2.5 .5 -3.6 .5 -4.2 .5 -4.5 .5 -4.4 .5 -3.9 .5 -3.0 .5 -1.8 .5 -.5 .5 .9 .5 2.2 .5 3.2 .5 4.1 .5 4.5 .5 4.4 .5 4.1 .5 3.3 .5 2.2 .5 .9 .5 -.5 .5 -1.8 .5 -3.0 .5 -3.8 .5 -4.4 .5 -4.5 .5 -4.2 .5 -3.6 .5 -2.5 .5 -1.3 .5 .1 .5 1.4 .5 2.6 .5 3.6 .5 4.3 .5 4.5 .5 4.3 .5 3.8 .5 2.8 .5 1.7 .5 .4 .5 -1.0 .5 -2.3 .5 -3.3 .5 -4.1 .5 -4.5 .5 -4.4 .5 -4.0 .5 -3.2 .5 -2.0 .5 -.8 .5 .6 .5 1.9 .5 3.1 .5 3.9 .5 4.4 .5 4.4 .5 4.2 .5 3.4 .5 2.4 .5 1.2 .5 -.2 .5 -1.5 .5 -2.8 .5 -3.6 .5 -4.3 .5 -4.5 .5 -4.3 .5 -3.7 .5 -2.7 .5 -1.6 .5 -.2 .5 1.2 .5 2.3 .5 3.5 .5 4.1 .5 4.5 .5 4.3 .5 3.9 .5 3.1 .5 1.9 .5 .6 .5 -.7 .5 -2.0 .5 -3.2 .5 -3.9 .5 -4.4 .5 -4.4 .5 -4.1 .5 -3.4 .5 -2.2 .5 -1.1 .5 .4 .5 1.6 .5 2.8 .5 3.8 .5 4.3 .5 4.4 .5 4.3 .5 3.5 .5 2.7 .5 1.4 .5 .1 .5 -1.3 .5 -2.5 .5 -3.5 .5 -4.1 .5 -4.5 .5 -4.3 .5 -3.8 .5 -3.0 .5 -1.8 .5 -.5 .5 .9 .5 2.2 .5 3.2 .5 4.0 .5 4.4 .5 4.4 .5 4.0 .5 3.2 .5 2.1 .5 .9 .5 -.4 .5 -1.8 .5 -2.9 .5 -3.8 .5 -4.3 .5 -4.5 .5 -4.1 .5 -3.5 .5 -2.5 .5 -1.3 .5 .1 .5 1.4 .5 2.6 .5 3.5 .5 4.2 .5 4.4 .5 4.3 .5 3.7 .5 2.8 .5 1.7 .5 .4 .5 -1.0 .5 -2.3 .5 -3.3 .5 -4.0 .5 -4.4 .5 -4.4 .5 -3.9 .5 -3.1 .5 -2.0 .5 -.8 .5 .6 .5 1.9 .5 3.0 .5 3.8 .5 4.4 .5 4.4 .5 4.1 .5 3.3 .5 2.4 .5 1.2 .5 -.2 .5 -1.5 .5 -2.7 .5 -3.6 .5 -4.2 .5 -4.5 .5 -4.2 .5 -3.6 .5 -2.7 .5 -1.5 .5 -.2 .5 1.1 .5 2.3 .5 3.4 .5 4.1 .5 4.3 .5 4.4 .5 3.8 .5 3.0 .5 1.9 .5 .6 .5 -.7 .5 -2.0 .5 -3.1 .5 -3.9 .5 -4.3 .5 -4.4 .5 -4.0 .5 -3.3 .5 -2.2 .5 -1.0 .5 .3 .5 1.6 .5 2.8 .5 3.7 .5 4.2 .5 4.4 .5 4.1 .5 3.6 .5 2.6 .5 1.3 .5 .1 .5 -1.2 .5 -2.5 .5 -3.4 .5 -4.1 .5 -4.4 .5 -4.2 .5 -3.8 .5 -2.9 .5 -1.7 .5 -.5 .5 .8 .5 2.1 .5 3.2 .5 3.9 .5 4.4 .5 4.3 .5 3.9 .5 3.2 .5 2.1 .5 .9 .5 -.5 .5 -1.7 .5 -2.9 .5 -3.7 .5 -4.2 .5 -4.4 .5 -4.1 .5 -3.4 .5 -2.5 .5 -1.2 .5 .0 .5 1.4 .5 2.5 .5 3.5 .5 4.1 .5 4.4 .5 4.2 .5 3.7 .5 2.7 .5 1.7 .5 .3 .5 -1.0 .5 -2.2 .5 -3.2 .5 -4.0 .5 -4.3 .5 -4.3 .5 -3.8 .5 -3.1 .5 -2.0 .5 -.7 .5 .6 .5 1.8 .5 3.0 .5 3.7 .5 4.3 .5 4.3 .5 4.0 .5 3.4 .5 2.3 .5 1.1 .5 -.2 .5 -1.4 .5 -2.7 .5 -3.5 .5 -4.2 .5 -4.3 .5 -4.2 .5 -3.5 .5 -2.7 .5 -1.5 .5 -.2 .5 1.1 .5 2.3 .5 3.3 .5 4.0 .5 4.3 .5 4.3 .5 3.7 .5 3.0 .5 1.9 .5 .6 .5 -.7 .5 -2.0 .5 -3.0 .5 -3.9 .5 -4.2 .5 -4.3 .5 -4.0 .5 -3.2 .5 -2.2 .5 -1.0 .5 .3 .5 1.6 .5 2.8 .5 3.6 .5 4.1 .5 4.3 .5 4.1 .5 3.5 .5 2.5 .5 1.4 .5 .1 .5 -1.2 .5 -2.4 .5 -3.4 .5 -4.0 .5 -4.4 .5 -4.1 .5 -3.7 .5 -2.9 .5 -1.7 .5 -.5 .5 .9 .5 2.0 .5 3.1 .5 3.9 .5 4.3 .5 4.2 .5 3.9 .5 3.1 .5 2.1 .5 .9 .5 -.5 .5 -1.7 .5 -2.8 .5 -3.7 .5 -4.2 .5 -4.3 .5 -4.0 .5 -3.4 .5 -2.4 .5 -1.2 .5 .0 .5 1.4 .5 2.5 .5 3.4 .5 4.1 .5 4.3 .5 4.1 .5 3.6 .5 2.7 .5 1.6 .5 .4 .5 -1.0 .5 -2.1 .5 -3.2 .5 -3.9 .5 -4.3 .5 -4.2 .5 -3.8 .5 -3.0 .5 -2.0 .5 -.7 .5 .6 .5 1.8 .5 2.9 .5 3.7 .5 4.2 .5 4.3 .5 3.9 .5 3.3 .5 2.3 .5 1.1 .5 -.2 .5 -1.5 .5 -2.5 .5 -3.5 .5 -4.1 .5 -4.3 .5 -4.1 .5 -3.5 .5 -2.6 .5 -1.5 .5 -.2 .5 1.1 .5 2.3 .5 3.2 .5 4.0 .5 4.2 .5 4.2 .5 3.7 .5 2.9 .5 1.8 .5 .6 .5 -.7 .5 -1.9 .5 -3.0 .5 -3.7 .5 -4.2 .5 -4.3 .5 -3.8 .5 -3.2 .5 -2.2 .5 -1.0 .5 .3 .5 1.6 .5 2.7 .5 3.6 .5 4.1 .5 4.2 .5 4.0 .5 3.4 .5 2.5 .5 1.4 .5 .1 .5 -1.2 .5 -2.4 .5 -3.3 .5 -4.0 .5 -4.2 .5 -4.2 .5 -3.6 .5 -2.8 .5 -1.7 .5 -.4 .5 .8 .5 2.0 .5 3.1 .5 3.8 .5 4.2 .5 4.1 .5 3.9 .5 3.0 .5 2.1 .5 .8 .5 -.4 .5 -1.7 .5 -2.8 .5 -3.6 .5 -4.1 .5 -4.2 .5 -4.0 .5 -3.3 .5 -2.4 .5 -1.2 .5 .1 .5 1.3 .5 2.5 .5 3.3 .5 4.0 .5 4.2 .5 4.1 .5 3.6 .5 2.6 .5 1.6 .5 .4 .5 -1.0 .5 -2.1 .5 -3.2 .5 -3.8 .5 -4.2 .5 -4.1 .5 -3.8 .5 -2.9 .5 -2.0 .5 -.7 .5 .6 .5 1.8 .5 2.8 .5 3.7 .5 4.1 .5 4.2 .5 3.9 .5 3.2 .5 2.3 .5 1.1 .5 -.2 .5 -1.5 .5 -2.5 .5 -3.5 .5 -4.0 .5 -4.2 .5 -4.0 .5 -3.4 .5 -2.6 .5 -1.4 .5 -.2 .5 1.0 .5 2.3 .5 3.2 .5 3.8 .5 4.2 .5 4.1 .5 3.6 .5 2.9 .5 1.8 .5 .6 .5 -.7 .5 -1.9 .5 -2.9 .5 -3.7 .5 -4.1 .5 -4.2 .5 -3.8 .5 -3.1 .5 -2.2 .5 -.9 .5 .3 .5 1.5 .5 2.7 .5 3.5 .5 4.0 .5 4.2 .5 3.9 .5 3.4 .5 2.4 .5 1.4 .5 .0 .5 -1.2 .5 -2.3 .5 -3.3 .5 -3.8 .5 -4.2 .5 -4.1 .5 -3.5 .5 -2.8 .5 -1.7 .5 -.4 .5 .8 .5 2.0 .5 3.0 .5 3.7 .5 4.2 .5 4.1 .5 3.7 .5 3.0 .5 2.1 .5 .8 .5 -.4 .5 -1.7 .5 -2.7 .5 -3.6 .5 -4.0 .5 -4.2 .5 -3.8 .5 -3.3 .5 -2.3 .5 -1.2 .5 .0 .5 1.3 .5 2.4 .5 3.4 .5 3.9 .5 4.1 .5 4.0 .5 3.5 .5 2.6 .5 1.6 .5 .3 .5 -.9 .5 -2.1 .5 -3.1 .5 -3.8 .5 -4.1 .5 -4.1 .5 -3.6 .5 -2.9 .5 -1.9 .5 -.7 .5 .5 .5 1.8 .5 2.8 .5 3.6 .5 4.0 .5 4.1 .5 3.9 .5 3.1 .5 2.3 .5 1.0 .5 -.2 .5 -1.4 .5 -2.5 .5 -3.4 .5 -3.9 .5 -4.1 .5 -4.0 .5 -3.4 .5 -2.5 .5 -1.4 .5 -.2 .5 1.0 .5 2.2 .5 3.2 .5 3.8 .5 4.1 .5 4.0 .5 3.6 .5 2.8 .5 1.8 .5 .6 .5 -.7 .5 -1.9 .5 -2.9 .5 -3.6 .5 -4.0 .5 -4.1 .5 -3.8 .5 -3.1 .5 -2.1 .5 -.9 .5 .3 .5 1.5 .5 2.6 .5 3.5 .5 3.9 .5 4.1 .5 3.9 .5 3.3 .5 2.4 .5 1.3 .5 .1 .5 -1.2 .5 -2.3 .5 -3.2 .5 -3.8 .5 -4.1 .5 -4.0 .5 -3.5 .5 -2.7 .5 -1.6 .5 -.5 .5 .8 .5 2.0 .5 2.9 .5 3.7 .5 4.1 .5 4.0 .5 3.7 .5 3.0 .5 1.9 .5 .9 .5 -.5 .5 -1.6 .5 -2.7 .5 -3.5 .5 -3.9 .5 -4.1 .5 -3.8 .5 -3.2 .5 -2.3 .5 -1.2 .5 .0 .5 1.3 .5 2.4 .5 3.3 .5 3.8 .5 4.1 .5 3.9 .5 3.4 .5 2.6 .5 1.6 .5 .3 .5 -.9 .5 -2.1 .5 -3.0 .5 -3.7 .5 -4.1 .5 -4.0 .5 -3.6 .5 -2.8 .5 -1.9 .5 -.7 .5 .6 .5 1.7 .5 2.7 .5 3.6 .5 3.9 .5 4.1 .5 3.7 .5 3.2 .5 2.1 .5 1.1 .5 -.2 .5 -1.4 .5 -2.4 .5 -3.4 .5 -3.8 .5 -4.1 .5 -3.9 .5 -3.3 .5 -2.5 .5 -1.4 .5 -.2 .5 1.1 .5 2.1 .5 3.1 .5 3.7 .5 4.1 .5 3.9 .5 3.6 .5 2.7 .5 1.8 .5 .5 .5 -.6 .5 -1.9 .5 -2.8 .5 -3.6 .5 -4.0 .5 -4.0 .5 -3.7 .5 -3.0 .5 -2.0 .5 -1.0 .5 .3 .5 1.5 .5 2.6 .5 3.4 .5 3.8 .5 4.1 .5 3.8 .5 3.2 .5 2.4 .5 1.3 .5 .1 .5 -1.2 .5 -2.2 .5 -3.2 .5 -3.7 .5 -4.1 .5 -3.9 .5 -3.4 .5 -2.7 .5 -1.6 .5 -.4 .5 .7 .5 2.0 .5 2.9 .5 3.6 .5 4.0 .5 3.9 .5 3.7 .5 2.9 .5 1.9 .5 .8 .5 -.4 .5 -1.6 .5 -2.6" stroke="#008000" stroke-width="2.2" fill="none" stroke-linejoin="round"/></g><line x1="348" y1="233.5" x2="1890" y2="233.5" stroke="#ddd" stroke-opacity="0.45" stroke-width="1" stroke-dasharray="1.2 2.3"/><line x1="332.5" y1="442" x2="332.5" y2="665" stroke="#fff" stroke-width="1"/><rect x="335" y="452" width="9" height="203" fill="#c3c3c3"/><polygon points="336.0,449 343.0,449 339.5,445" fill="#c3c3c3"/><polygon points="336.0,658 343.0,658 339.5,662" fill="#c3c3c3"/><rect x="337" y="454" width="5" height="5" fill="#fff"/><rect x="337" y="649" width="5" height="5" fill="#fff"/><line x1="347.5" y1="442" x2="347.5" y2="663" stroke="#0000b0" stroke-width="1" stroke-dasharray="2 2"/><polygon points="350.0,672.5 354.0,668.5 354.0,676.5" fill="#c3c3c3"/><rect x="357.0" y="668" width="1527.0" height="9" fill="#c3c3c3"/><rect x="359.0" y="670" width="5" height="5" fill="#fff"/><rect x="1877.5" y="670" width="5" height="5" fill="#fff"/><polygon points="1887,668.5 1891,672.5 1887,676.5" fill="#c3c3c3"/><line x1="347.5" y1="680" x2="1893.5" y2="680" stroke="#fff" stroke-width="1.2"/><line x1="327" y1="460.5" x2="332" y2="460.5" stroke="#fff" stroke-width="1"/><line x1="327" y1="556.5" x2="332" y2="556.5" stroke="#fff" stroke-width="1"/><line x1="327" y1="652.5" x2="332" y2="652.5" stroke="#fff" stroke-width="1"/><line x1="348" y1="460.5" x2="1890" y2="460.5" stroke="#fff" stroke-width="1" stroke-dasharray="3 4"/><line x1="348" y1="652.5" x2="1890" y2="652.5" stroke="#fff" stroke-width="1" stroke-dasharray="3 4"/><line x1="347.5" y1="680" x2="347.5" y2="685.5" stroke="#fff" stroke-width="1"/><line x1="734.5" y1="680" x2="734.5" y2="685.5" stroke="#fff" stroke-width="1"/><line x1="1120.5" y1="680" x2="1120.5" y2="685.5" stroke="#fff" stroke-width="1"/><line x1="1507.5" y1="680" x2="1507.5" y2="685.5" stroke="#fff" stroke-width="1"/><line x1="1893.5" y1="680" x2="1893.5" y2="685.5" stroke="#fff" stroke-width="1"/><line x1="860.5" y1="442" x2="860.5" y2="665" stroke="#fff" stroke-width="1"/><line x1="1373.5" y1="442" x2="1373.5" y2="665" stroke="#fff" stroke-width="1"/><line x1="1886.5" y1="442" x2="1886.5" y2="665" stroke="#fff" stroke-width="1"/><text x="870" y="657.2" font-family="Liberation Sans" font-size="12" fill="#fff">12:00:01 AM</text><text x="1383" y="657.2" font-family="Liberation Sans" font-size="12" fill="#fff">12:00:02 AM</text><g clip-path="url(#cV)"><path d="M348.0 497.7l.5 -22.3 .5 -14.7 .5 -6.0 .5 3.4 .5 12.4 .5 20.3 .5 26.3 .5 29.9 .5 30.8 .5 28.7 .5 24.1 .5 17.2 .5 8.7 .5 -.6 .5 -9.8 .5 -18.1 .5 -24.7 .5 -29.2 .5 -30.7 .5 -29.7 .5 -25.7 .5 -19.5 .5 -11.3 .5 -2.3 .5 7.1 .5 15.8 .5 22.9 .5 28.1 .5 30.6 .5 30.3 .5 27.1 .5 21.6 .5 13.9 .5 5.1 .5 -4.3 .5 -13.3 .5 -21.0 .5 -26.8 .5 -30.1 .5 -30.7 .5 -28.4 .5 -23.5 .5 -16.3 .5 -7.9 .5 1.5 .5 10.7 .5 18.9 .5 25.3 .5 29.4 .5 30.8 .5 29.4 .5 25.2 .5 18.7 .5 10.5 .5 1.3 .5 -8.0 .5 -16.6 .5 -23.5 .5 -28.5 .5 -30.7 .5 -30.1 .5 -26.7 .5 -20.9 .5 -13.1 .5 -4.1 .5 5.3 .5 14.1 .5 21.7 .5 27.2 .5 30.3 .5 30.6 .5 28.0 .5 22.8 .5 15.6 .5 6.9 .5 -2.4 .5 -11.6 .5 -19.6 .5 -25.8 .5 -29.7 .5 -30.8 .5 -29.0 .5 -24.7 .5 -17.9 .5 -9.6 .5 -.4 .5 8.9 .5 17.3 .5 24.2 .5 28.8 .5 30.8 .5 29.8 .5 26.3 .5 20.1 .5 12.3 .5 3.2 .5 -6.2 .5 -14.9 .5 -22.4 .5 -27.6 .5 -30.5 .5 -30.4 .5 -27.6 .5 -22.3 .5 -14.7 .5 -6.0 .5 3.4 .5 12.4 .5 20.3 .5 26.3 .5 29.9 .5 30.8 .5 28.7 .5 24.1 .5 17.2 .5 8.7 .5 -.6 .5 -9.8 .5 -18.1 .5 -24.7 .5 -29.2 .5 -30.7 .5 -29.7 .5 -25.7 .5 -19.5 .5 -11.3 .5 -2.3 .5 7.1 .5 15.8 .5 22.9 .5 28.1 .5 30.6 .5 30.3 .5 27.1 .5 21.6 .5 13.9 .5 5.1 .5 -4.3 .5 -13.3 .5 -21.0 .5 -26.8 .5 -30.1 .5 -30.7 .5 -28.4 .5 -23.5 .5 -16.3 .5 -7.9 .5 1.5 .5 10.7 .5 18.9 .5 25.3 .5 29.4 .5 30.8 .5 29.4 .5 25.2 .5 18.7 .5 10.5 .5 1.3 .5 -8.0 .5 -16.6 .5 -23.5 .5 -28.5 .5 -30.7 .5 -30.1 .5 -26.7 .5 -20.9 .5 -13.1 .5 -4.1 .5 5.3 .5 14.1 .5 21.7 .5 27.2 .5 30.3 .5 30.6 .5 28.0 .5 22.8 .5 15.6 .5 6.9 .5 -2.4 .5 -11.6 .5 -19.6 .5 -25.8 .5 -29.7 .5 -30.8 .5 -29.0 .5 -24.7 .5 -17.9 .5 -9.6 .5 -.4 .5 8.9 .5 17.3 .5 24.2 .5 28.8 .5 30.8 .5 29.8 .5 26.3 .5 20.1 .5 12.3 .5 3.2 .5 -6.2 .5 -14.9 .5 -22.4 .5 -27.6 .5 -30.5 .5 -30.4 .5 -27.6 .5 -22.3 .5 -14.7 .5 -6.0 .5 3.4 .5 12.4 .5 20.3 .5 26.3 .5 29.9 .5 30.8 .5 28.7 .5 24.1 .5 17.2 .5 8.7 .5 -.6 .5 -9.8 .5 -18.1 .5 -24.7 .5 -29.2 .5 -30.7 .5 -29.7 .5 -25.7 .5 -19.5 .5 -11.3 .5 -2.3 .5 7.1 .5 15.8 .5 22.9 .5 28.1 .5 30.6 .5 30.3 .5 27.1 .5 21.6 .5 13.9 .5 5.1 .5 -4.3 .5 -13.3 .5 -21.0 .5 -26.8 .5 -30.1 .5 -30.7 .5 -28.4 .5 -23.5 .5 -16.3 .5 -7.9 .5 1.5 .5 10.7 .5 18.9 .5 25.3 .5 29.4 .5 30.8 .5 29.4 .5 25.2 .5 18.7 .5 10.5 .5 1.3 .5 -8.0 .5 -16.6 .5 -23.5 .5 -28.5 .5 -30.7 .5 -30.1 .5 -26.7 .5 -20.9 .5 -13.1 .5 -4.1 .5 5.3 .5 14.1 .5 21.7 .5 27.2 .5 30.3 .5 30.6 .5 28.0 .5 22.8 .5 15.6 .5 6.9 .5 -2.4 .5 -11.6 .5 -19.6 .5 -25.8 .5 -29.7 .5 -30.8 .5 -29.0 .5 -24.7 .5 -17.9 .5 -9.6 .5 -.4 .5 8.9 .5 17.3 .5 24.2 .5 28.8 .5 30.8 .5 29.8 .5 26.3 .5 20.1 .5 12.3 .5 3.2 .5 -6.2 .5 -14.9 .5 -22.4 .5 -27.6 .5 -30.5 .5 -30.4 .5 -27.6 .5 -22.3 .5 -14.7 .5 -6.0 .5 3.4 .5 12.4 .5 20.3 .5 26.3 .5 29.9 .5 30.8 .5 28.7 .5 24.1 .5 17.2 .5 8.7 .5 -.6 .5 -9.8 .5 -18.1 .5 -24.7 .5 -29.2 .5 -30.7 .5 -29.7 .5 -25.7 .5 -19.5 .5 -11.3 .5 -2.3 .5 7.1 .5 15.8 .5 22.9 .5 28.1 .5 30.6 .5 30.3 .5 27.1 .5 21.6 .5 13.9 .5 5.1 .5 -4.3 .5 -13.3 .5 -21.0 .5 -26.8 .5 -30.1 .5 -30.7 .5 -28.4 .5 -23.5 .5 -16.3 .5 -7.9 .5 1.5 .5 10.7 .5 18.9 .5 25.3 .5 29.4 .5 30.8 .5 29.4 .5 25.2 .5 18.7 .5 10.5 .5 1.3 .5 -8.0 .5 -16.6 .5 -23.5 .5 -28.5 .5 -30.7 .5 -30.1 .5 -26.7 .5 -20.9 .5 -13.1 .5 -4.1 .5 5.3 .5 14.1 .5 21.7 .5 27.2 .5 30.3 .5 30.6 .5 28.0 .5 22.8 .5 15.6 .5 6.9 .5 -2.4 .5 -11.6 .5 -19.6 .5 -25.8 .5 -29.7 .5 -30.8 .5 -29.0 .5 -24.7 .5 -17.9 .5 -9.6 .5 -.4 .5 8.9 .5 17.3 .5 24.2 .5 28.8 .5 30.8 .5 29.8 .5 26.3 .5 20.1 .5 12.3 .5 3.2 .5 -6.2 .5 -14.9 .5 -22.4 .5 -27.6 .5 -30.5 .5 -30.4 .5 -27.6 .5 -22.3 .5 -14.7 .5 -6.0 .5 3.4 .5 12.4 .5 20.3 .5 26.3 .5 29.9 .5 30.8 .5 28.7 .5 24.1 .5 17.2 .5 8.7 .5 -.6 .5 -9.8 .5 -18.1 .5 -24.7 .5 -29.2 .5 -30.7 .5 -29.7 .5 -25.7 .5 -19.5 .5 -11.3 .5 -2.3 .5 7.1 .5 15.8 .5 22.9 .5 28.1 .5 30.6 .5 30.3 .5 27.1 .5 21.6 .5 13.9 .5 5.1 .5 -4.3 .5 -13.3 .5 -21.0 .5 -26.8 .5 -30.1 .5 -30.7 .5 -28.4 .5 -23.5 .5 -16.3 .5 -7.9 .5 1.5 .5 10.7 .5 18.9 .5 25.3 .5 29.4 .5 30.8 .5 29.4 .5 25.2 .5 18.7 .5 10.5 .5 1.3 .5 -8.0 .5 -16.6 .5 -23.5 .5 -28.5 .5 -30.7 .5 -30.1 .5 -26.7 .5 -20.9 .5 -13.1 .5 -4.1 .5 5.3 .5 14.1 .5 21.7 .5 27.2 .5 30.3 .5 30.6 .5 28.0 .5 22.8 .5 15.6 .5 6.9 .5 -2.4 .5 -11.6 .5 -19.6 .5 -25.8 .5 -29.7 .5 -30.8 .5 -29.0 .5 -24.7 .5 -17.9 .5 -9.6 .5 -.4 .5 8.9 .5 17.3 .5 24.2 .5 28.8 .5 30.8 .5 29.8 .5 26.3 .5 20.1 .5 12.3 .5 3.2 .5 -6.2 .5 -14.9 .5 -22.4 .5 -27.6 .5 -30.5 .5 -30.4 .5 -27.6 .5 -22.3 .5 -14.7 .5 -6.0 .5 3.4 .5 12.4 .5 20.3 .5 26.3 .5 29.9 .5 30.8 .5 28.7 .5 24.1 .5 17.2 .5 8.7 .5 -.6 .5 -9.8 .5 -18.1 .5 -24.7 .5 -29.2 .5 -30.7 .5 -29.7 .5 -25.7 .5 -19.5 .5 -11.3 .5 -2.3 .5 7.1 .5 15.8 .5 22.9 .5 28.1 .5 30.6 .5 30.3 .5 27.1 .5 21.6 .5 13.9 .5 5.1 .5 -4.3 .5 -13.3 .5 -21.0 .5 -26.8 .5 -30.1 .5 -30.7 .5 -28.4 .5 -23.5 .5 -16.3 .5 -7.9 .5 1.5 .5 10.7 .5 18.9 .5 25.3 .5 29.4 .5 30.8 .5 29.4 .5 25.2 .5 18.7 .5 10.5 .5 1.3 .5 -8.0 .5 -16.6 .5 -23.5 .5 -28.5 .5 -30.7 .5 -30.1 .5 -26.7 .5 -20.9 .5 -13.1 .5 -4.1 .5 5.3 .5 14.1 .5 21.7 .5 27.2 .5 30.3 .5 30.6 .5 28.0 .5 22.8 .5 15.6 .5 6.9 .5 -2.4 .5 -11.6 .5 -19.6 .5 -25.8 .5 -29.7 .5 -30.8 .5 -29.0 .5 -24.7 .5 -17.9 .5 -9.6 .5 -.4 .5 8.9 .5 17.3 .5 24.2 .5 28.8 .5 30.8 .5 29.8 .5 26.3 .5 20.1 .5 12.3 .5 3.2 .5 -6.2 .5 -14.9 .5 -22.4 .5 -27.6 .5 -30.5 .5 -30.4 .5 -27.6 .5 -22.3 .5 -14.7 .5 -6.0 .5 3.4 .5 12.4 .5 20.3 .5 26.3 .5 29.9 .5 30.8 .5 28.7 .5 24.1 .5 17.2 .5 8.7 .5 -.6 .5 -9.8 .5 -18.1 .5 -24.7 .5 -29.2 .5 -30.7 .5 -29.7 .5 -25.7 .5 -19.5 .5 -11.3 .5 -2.3 .5 7.1 .5 15.8 .5 22.9 .5 28.1 .5 30.6 .5 30.3 .5 27.1 .5 21.6 .5 13.9 .5 5.1 .5 -4.3 .5 -13.3 .5 -21.0 .5 -26.8 .5 -30.1 .5 -30.7 .5 -28.4 .5 -23.5 .5 -16.3 .5 -7.9 .5 1.5 .5 10.7 .5 18.9 .5 25.3 .5 29.4 .5 30.8 .5 29.4 .5 25.2 .5 18.7 .5 10.5 .5 1.3 .5 -8.0 .5 -16.6 .5 -23.5 .5 -28.5 .5 -30.7 .5 -30.1 .5 -26.7 .5 -20.9 .5 -13.1 .5 -4.1 .5 5.3 .5 14.1 .5 21.7 .5 27.2 .5 30.3 .5 30.6 .5 28.0 .5 22.8 .5 15.6 .5 6.9 .5 -2.4 .5 -11.6 .5 -19.6 .5 -25.8 .5 -29.7 .5 -30.8 .5 -29.0 .5 -24.7 .5 -17.9 .5 -9.6 .5 -.4 .5 8.9 .5 17.3 .5 24.2 .5 28.8 .5 30.8 .5 29.8 .5 26.3 .5 20.1 .5 12.3 .5 3.2 .5 -6.2 .5 -14.9 .5 -22.4 .5 -27.6 .5 -30.5 .5 -30.4 .5 -27.6 .5 -22.3 .5 -14.7 .5 -6.0 .5 3.4 .5 12.4 .5 20.3 .5 26.3 .5 29.9 .5 30.8 .5 28.7 .5 24.1 .5 17.2 .5 8.7 .5 -.6 .5 -9.8 .5 -18.1 .5 -24.7 .5 -29.2 .5 -30.7 .5 -29.7 .5 -25.7 .5 -19.5 .5 -11.3 .5 -2.3 .5 7.1 .5 15.8 .5 22.9 .5 28.1 .5 30.6 .5 30.3 .5 27.1 .5 21.6 .5 13.9 .5 5.1 .5 -4.3 .5 -13.3 .5 -21.0 .5 -26.8 .5 -30.1 .5 -30.7 .5 -28.4 .5 -23.5 .5 -16.3 .5 -7.9 .5 1.5 .5 10.7 .5 18.9 .5 25.3 .5 29.4 .5 30.8 .5 29.4 .5 25.2 .5 18.7 .5 10.5 .5 1.3 .5 -8.0 .5 -16.6 .5 -23.5 .5 -28.5 .5 -30.7 .5 -30.1 .5 -26.7 .5 -20.9 .5 -13.1 .5 -4.1 .5 5.3 .5 14.1 .5 21.7 .5 27.2 .5 30.3 .5 30.6 .5 28.0 .5 22.8 .5 15.6 .5 6.9 .5 -2.4 .5 -11.6 .5 -19.6 .5 -25.8 .5 -29.7 .5 -30.8 .5 -29.0 .5 -24.7 .5 -17.9 .5 -9.6 .5 -.4 .5 8.9 .5 17.3 .5 24.2 .5 28.8 .5 30.8 .5 29.8 .5 26.3 .5 20.1 .5 12.3 .5 3.2 .5 -6.2 .5 -14.9 .5 -22.4 .5 -27.6 .5 -30.5 .5 -30.4 .5 -27.6 .5 -22.3 .5 -14.7 .5 -6.0 .5 3.4 .5 12.4 .5 20.3 .5 26.3 .5 29.9 .5 30.8 .5 28.7 .5 24.1 .5 17.2 .5 8.7 .5 -.6 .5 -9.8 .5 -18.1 .5 -24.7 .5 -29.2 .5 -30.7 .5 -29.7 .5 -25.7 .5 -19.5 .5 -11.3 .5 -2.3 .5 7.1 .5 15.8 .5 22.9 .5 28.1 .5 30.6 .5 30.3 .5 27.1 .5 21.6 .5 13.9 .5 5.1 .5 -4.3 .5 -13.3 .5 -21.0 .5 -26.8 .5 -30.1 .5 -30.7 .5 -28.4 .5 -23.5 .5 -16.3 .5 -7.9 .5 1.5 .5 10.7 .5 18.9 .5 25.3 .5 29.4 .5 30.8 .5 29.4 .5 25.2 .5 18.7 .5 10.5 .5 1.3 .5 -8.0 .5 -16.6 .5 -23.5 .5 -28.5 .5 -30.7 .5 -30.1 .5 -26.7 .5 -20.9 .5 -13.1 .5 -4.1 .5 5.3 .5 14.1 .5 21.7 .5 27.2 .5 30.3 .5 30.6 .5 28.0 .5 22.8 .5 15.6 .5 6.9 .5 -2.4 .5 -11.6 .5 -19.6 .5 -25.8 .5 -29.7 .5 -30.8 .5 -29.0 .5 -24.7 .5 -17.9 .5 -9.6 .5 -.4 .5 8.9 .5 17.3 .5 24.2 .5 28.8 .5 30.8 .5 29.8 .5 26.3 .5 20.1 .5 12.3 .5 3.2 .5 -6.2 .5 -14.9 .5 -22.4 .5 -27.6 .5 -30.5 .5 -30.4 .5 -27.6 .5 -22.3 .5 -14.7 .5 -6.0 .5 3.4 .5 12.4 .5 20.3 .5 26.3 .5 29.9 .5 30.8 .5 28.7 .5 24.1 .5 17.2 .5 8.7 .5 -.6 .5 -9.8 .5 -18.1 .5 -24.7 .5 -29.2 .5 -30.7 .5 -29.7 .5 -25.7 .5 -19.5 .5 -11.3 .5 -2.3 .5 7.1 .5 15.8 .5 22.9 .5 28.1 .5 30.6 .5 30.3 .5 27.1 .5 21.6 .5 13.9 .5 5.1 .5 -4.3 .5 -13.3 .5 -21.0 .5 -26.8 .5 -30.1 .5 -30.7 .5 -28.4 .5 -23.5 .5 -16.3 .5 -7.9 .5 1.5 .5 10.7 .5 18.9 .5 25.3 .5 29.4 .5 30.8 .5 29.4 .5 25.2 .5 18.7 .5 10.5 .5 1.3 .5 -8.0 .5 -16.6 .5 -23.5 .5 -28.5 .5 -30.7 .5 -30.1 .5 -22.4 .5 -13.7 .5 -4.7 .5 3.6 .5 10.4 .5 14.9 .5 17.0 .5 16.5 .5 13.9 .5 9.9 .5 5.0 .5 .2 .5 2.6 .5 1.1 .5 -.5 .5 -2.1 .5 -3.5 .5 -4.5 .5 -5.1 .5 -5.2 .5 -4.8 .5 -4.0 .5 -2.9 .5 -1.5 .5 .1 .5 1.5 .5 2.9 .5 4.0 .5 4.6 .5 4.8 .5 4.6 .5 4.0 .5 3.1 .5 1.7 .5 .4 .5 -1.1 .5 -2.3 .5 -3.4 .5 -4.1 .5 -4.4 .5 -4.4 .5 -3.9 .5 -3.1 .5 -2.0 .5 -.7 .5 .6 .5 1.8 .5 2.8 .5 3.7 .5 4.0 .5 4.1 .5 3.7 .5 3.1 .5 2.1 .5 1.0 .5 -.1 .5 -1.4 .5 -2.3 .5 -3.2 .5 -3.6 .5 -3.7 .5 -3.6 .5 -3.0 .5 -2.2 .5 -1.2 .5 -.1 .5 .9 .5 1.9 .5 2.6 .5 3.2 .5 3.4 .5 3.2 .5 2.9 .5 2.2 .5 1.4 .5 .4 .5 -.5 .5 -1.4 .5 -2.2 .5 -2.8 .5 -3.0 .5 -3.1 .5 -2.8 .5 -2.3 .5 -1.5 .5 -.7 .5 .2 .5 1.1 .5 1.8 .5 2.5 .5 2.8 .5 2.9 .5 2.7 .5 2.3 .5 1.7 .5 .9 .5 .1 .5 -.8 .5 -1.6 .5 -2.1 .5 -2.6 .5 -2.7 .5 -2.6 .5 -2.3 .5 -1.7 .5 -1.1 .5 -.3 .5 .5 .5 1.2 .5 1.9 .5 2.3 .5 2.5 .5 2.5 .5 2.2 .5 1.8 .5 1.2 .5 .5 .5 -.3 .5 -.9 .5 -1.6 .5 -2.0 .5 -2.3 .5 -2.3 .5 -2.2 .5 -1.8 .5 -1.2 .5 -.7 .5 .0 .5 .7 .5 1.3 .5 1.8 .5 2.0 .5 2.2 .5 2.0 .5 1.8 .5 1.3 .5 .8 .5 .1 .5 -.5 .5 -1.0 .5 -1.5 .5 -1.8 .5 -1.9 .5 -1.9 .5 -1.7 .5 -1.4 .5 -.8 .5 -.3 .5 .3 .5 .8 .5 1.2 .5 1.6 .5 1.7 .5 1.7 .5 1.6 .5 1.3 .5 .9 .5 .5 .5 27.8 .5 21.8 .5 -11.1 .5 -15.2 .5 -17.7 .5 -18.8 .5 -18.0 .5 -15.5 .5 -12.1 .5 -7.1 .5 -1.7 .5 4.2 .5 9.5 .5 14.1 .5 17.3 .5 19.1 .5 19.1 .5 17.2 .5 13.8 .5 9.1 .5 3.4 .5 -2.5 .5 -8.3 .5 -13.3 .5 -17.3 .5 -19.5 .5 -20.0 .5 -18.7 .5 -15.4 .5 -10.9 .5 -5.2 .5 .9 .5 6.9 .5 12.4 .5 16.7 .5 19.5 .5 20.4 .5 19.6 .5 16.8 .5 12.6 .5 7.1 .5 1.0 .5 -5.3 .5 -11.0 .5 -15.8 .5 -19.1 .5 -20.7 .5 -20.3 .5 -18.1 .5 -14.2 .5 -9.0 .5 -2.9 .5 3.5 .5 9.5 .5 14.7 .5 18.6 .5 20.7 .5 20.9 .5 19.3 .5 15.8 .5 10.8 .5 4.8 .5 -1.6 .5 -7.9 .5 -13.4 .5 -17.9 .5 -20.5 .5 -21.4 .5 -20.3 .5 -17.2 .5 -12.6 .5 -6.8 .5 -.4 .5 6.1 .5 12.1 .5 17.0 .5 20.2 .5 21.7 .5 21.0 .5 18.6 .5 14.2 .5 8.7 .5 2.3 .5 -4.3 .5 -10.5 .5 -15.8 .5 -19.6 .5 -21.6 .5 -21.6 .5 -19.6 .5 -15.9 .5 -10.5 .5 -4.3 .5 2.4 .5 8.8 .5 14.4 .5 18.8 .5 21.3 .5 22.0 .5 20.5 .5 17.2 .5 12.4 .5 6.2 .5 -.3 .5 -7.0 .5 -12.9 .5 -17.8 .5 -20.9 .5 -22.1 .5 -21.3 .5 -18.5 .5 -14.0 .5 -8.3 .5 -1.6 .5 5.0 .5 11.3 .5 16.6 .5 20.3 .5 22.1 .5 21.9 .5 19.6 .5 15.7 .5 10.1 .5 3.7 .5 -3.1 .5 -9.6 .5 -15.2 .5 -19.4 .5 -21.9 .5 -22.3 .5 -20.7 .5 -17.1 .5 -12.0 .5 -5.8 .5 1.1 .5 7.8 .5 13.7 .5 18.5 .5 21.5 .5 22.5 .5 21.5 .5 18.5 .5 13.7 .5 7.8 .5 1.0 .5 -5.8 .5 -12.2 .5 -17.3 .5 -20.9 .5 -22.6 .5 -22.1 .5 -19.7 .5 -15.5 .5 -9.7 .5 -3.1 .5 3.9 .5 10.4 .5 16.0 .5 20.1 .5 22.4 .5 22.7 .5 20.8 .5 16.9 .5 11.7 .5 5.1 .5 -1.8 .5 -8.5 .5 -14.5 .5 -19.2 .5 -22.1 .5 -23.0 .5 -21.7 .5 -18.4 .5 -13.4 .5 -7.2 .5 -.4 .5 6.6 .5 13.0 .5 18.1 .5 21.5 .5 23.1 .5 22.4 .5 19.7 .5 15.2 .5 9.2 .5 2.5 .5 -4.6 .5 -11.2 .5 -16.8 .5 -20.9 .5 -22.9 .5 -23.0 .5 -20.9 .5 -16.8 .5 -11.2 .5 -4.5 .5 2.5 .5 9.3 .5 15.4 .5 19.9 .5 22.7 .5 23.3 .5 21.9 .5 18.3 .5 13.1 .5 6.7 .5 -.4 .5 -7.4 .5 -13.8 .5 -18.8 .5 -22.2 .5 -23.6 .5 -22.6 .5 -19.7 .5 -14.9 .5 -8.7 .5 -1.8 .5 5.4 .5 12.0 .5 17.6 .5 21.5 .5 23.5 .5 23.3 .5 20.9 .5 16.6 .5 10.8 .5 3.9 .5 -3.3 .5 -10.2 .5 -16.1 .5 -20.7 .5 -23.3 .5 -23.7 .5 -21.9 .5 -18.2 .5 -12.7 .5 -6.1 .5 1.1 .5 8.2 .5 14.6 .5 19.6 .5 22.9 .5 23.9 .5 22.9 .5 19.6 .5 14.6 .5 8.2 .5 1.1 .5 -6.2 .5 -12.9 .5 -18.4 .5 -22.2 .5 -24.0 .5 -23.5 .5 -20.9 .5 -16.4 .5 -10.3 .5 -3.3 .5 4.1 .5 11.0 .5 17.0 .5 21.4 .5 23.8 .5 24.1 .5 22.0 .5 18.1 .5 12.3 .5 5.5 .5 -1.9 .5 -9.1 .5 -15.4 .5 -20.4 .5 -23.5 .5 -24.4 .5 -23.0 .5 -19.6 .5 -14.2 .5 -7.7 .5 -.4 .5 7.1 .5 13.7 .5 19.2 .5 22.9 .5 24.5 .5 23.9 .5 20.9 .5 16.1 .5 9.9 .5 2.6 .5 -4.9 .5 -11.9 .5 -17.9 .5 -22.1 .5 -24.4 .5 -24.5 .5 -22.1 .5 -17.9 .5 -11.9 .5 -4.9 .5 2.7 .5 9.9 .5 16.4 .5 21.2 .5 24.1 .5 24.8 .5 23.2 .5 19.5 .5 13.9 .5 7.1 .5 -.4 .5 -7.9 .5 -14.6 .5 -20.1 .5 -23.6 .5 -25.0 .5 -24.1 .5 -20.9 .5 -15.9 .5 -9.3 .5 -1.8 .5 5.7 .5 12.8 .5 18.7 .5 22.9 .5 25.0 .5 24.7 .5 22.3 .5 17.6 .5 11.5 .5 4.2 .5 -3.5 .5 -10.8 .5 -17.2 .5 -22.0 .5 -24.8 .5 -25.2 .5 -23.4 .5 -19.3 .5 -13.6 .5 -6.5 .5 1.2 .5 8.8 .5 15.5 .5 20.9 .5 24.3 .5 25.5 .5 24.3 .5 20.9 .5 15.6 .5 8.7 .5 1.1 .5 -6.5 .5 -13.8 .5 -19.5 .5 -23.7 .5 -25.5 .5 -25.1 .5 -22.2 .5 -17.5 .5 -10.9 .5 -3.5 .5 4.3 .5 11.8 .5 18.1 .5 22.7 .5 25.4 .5 25.6 .5 23.4 .5 19.2 .5 13.1 .5 5.8 .5 -2.0 .5 -9.7 .5 -16.4 .5 -21.7 .5 -24.9 .5 -25.9 .5 -24.4 .5 -20.8 .5 -15.1 .5 -8.2 .5 -.3 .5 7.4 .5 14.6 .5 20.4 .5 24.3 .5 26.0 .5 25.2 .5 22.2 .5 17.1 .5 10.4 .5 2.8 .5 -5.2 .5 -12.6 .5 -19.0 .5 -23.4 .5 -25.9 .5 -25.8 .5 -23.5 .5 -18.9 .5 -12.6 .5 -5.1 .5 2.9 .5 10.5 .5 17.3 .5 22.4 .5 25.5 .5 26.2 .5 24.5 .5 20.6 .5 14.7 .5 7.5 .5 -.5 .5 -8.3 .5 -15.5 .5 -21.1 .5 -25.0 .5 -26.3 .5 -25.4 .5 -22.1 .5 -16.7 .5 -9.9 .5 -1.9 .5 6.0 .5 13.5 .5 19.8 .5 24.1 .5 26.3 .5 26.1 .5 23.4 .5 18.6 .5 12.1 .5 4.4 .5 -3.7 .5 -11.4 .5 -18.1 .5 -23.2 .5 -26.0 .5 -26.6 .5 -24.5 .5 -20.4 .5 -14.2 .5 -6.8 .5 1.2 .5 9.3 .5 16.3 .5 21.9 .5 25.6 .5 26.8 .5 25.5 .5 21.9 .5 16.3 .5 9.2 .5 1.2 .5 -6.9 .5 -14.4 .5 -20.6 .5 -24.8 .5 -26.8 .5 -26.3 .5 -23.3 .5 -18.3 .5 -11.5 .5 -3.6 .5 4.5 .5 12.4 .5 18.9 .5 23.9 .5 26.6 .5 26.8 .5 24.6 .5 20.0 .5 13.8 .5 6.1 .5 -2.1 .5 -10.2 .5 -17.2 .5 -22.7 .5 -26.1 .5 -27.1 .5 -25.6 .5 -21.8 .5 -15.9 .5 -8.5 .5 -.3 .5 7.8 .5 15.3 .5 21.3 .5 25.5 .5 27.2 .5 26.4 .5 23.3 .5 17.9 .5 10.8 .5 2.9 .5 -5.4 .5 -13.2 .5 -19.9 .5 -24.5 .5 -27.1 .5 -27.0 .5 -24.6 .5 -19.8 .5 -13.1 .5 -5.4 .5 3.0 .5 11.0 .5 18.1 .5 23.4 .5 26.7 .5 27.4 .5 25.7 .5 21.5 .5 15.4 .5 7.9 .5 -.5 .5 -8.7 .5 -16.2 .5 -22.2 .5 -26.0 .5 -27.6 .5 -26.6 .5 -23.1 .5 -17.5 .5 -10.2 .5 -2.1 .5 6.3 .5 14.2 .5 20.6 .5 25.2 .5 27.6 .5 27.2 .5 24.5 .5 19.5 .5 12.6 .5 4.6 .5 -3.9 .5 -11.9 .5 -19.0 .5 -24.2 .5 -27.2 .5 -27.7 .5 -25.7 .5 -21.3 .5 -14.8 .5 -7.2 .5 1.4 .5 9.6 .5 17.1 .5 22.9 .5 26.7 .5 28.0 .5 26.6 .5 23.0 .5 17.0 .5 9.6 .5 1.2 .5 -7.2 .5 -15.1 .5 -21.4 .5 -25.9 .5 -28.0 .5 -27.5 .5 -24.3 .5 -19.1 .5 -12.0 .5 -3.8 .5 4.7 .5 12.9 .5 19.8 .5 24.9 .5 27.8 .5 27.9 .5 25.7 .5 21.0 .5 14.3 .5 6.4 .5 -2.2 .5 -10.6 .5 -18.0 .5 -23.7 .5 -27.2 .5 -28.3 .5 -26.8 .5 -22.7 .5 -16.5 .5 -8.9 .5 -.4 .5 8.2 .5 15.9 .5 22.3 .5 26.6 .5 28.3 .5 27.6 .5 24.3 .5 18.6 .5 11.4 .5 3.0 .5 -5.7 .5 -13.8 .5 -20.6 .5 -25.7 .5 -28.2 .5 -28.2 .5 -25.6 .5 -20.6 .5 -13.8 .5 -5.6 .5 3.1 .5 11.5 .5 18.9 .5 24.4 .5 27.9 .5 28.6 .5 26.7 .5 22.5 .5 16.0 .5 8.2 .5 -.5 .5 -9.1 .5 -16.9 .5 -23.1 .5 -27.1 .5 -28.8 .5 -27.7 .5 -24.1 .5 -18.2 .5 -10.7 .5 -2.1 .5 6.6 .5 14.7 .5 21.5 .5 26.3 .5 28.7 .5 28.4 .5 25.5 .5 20.3 .5 13.1 .5 4.8 .5 -4.0 .5 -12.5 .5 -19.7 .5 -25.2 .5 -28.4 .5 -28.9 .5 -26.7 .5 -22.2 .5 -15.5 .5 -7.4 .5 1.4 .5 10.1 .5 17.8 .5 23.8 .5 27.8 .5 29.2 .5 27.7 .5 23.9 .5 17.7 .5 10.0 .5 1.3 .5 -7.5 .5 -15.7 .5 -22.4 .5 -26.9 .5 -29.2 .5 -28.5 .5 -25.4 .5 -19.9 .5 -12.5 .5 -3.9 .5 4.9 .5 13.4 .5 20.6 .5 26.0 .5 28.8 .5 29.2 .5 26.7 .5 21.8 .5 15.0 .5 6.6 .5 -2.3 .5 -11.0 .5 -18.7 .5 -24.7 .5 -28.4 .5 -29.5 .5 -27.8 .5 -23.6 .5 -17.3 .5 -9.2 .5 -.4 .5 8.5 .5 16.6 .5 23.2 .5 27.7 .5 29.5 .5 28.7 .5 25.3 .5 19.4 .5 11.8 .5 3.1 .5 -5.9 .5 -14.3 .5 -21.5 .5 -26.7 .5 -29.4 .5 -29.4 .5 -26.6 .5 -21.5 .5 -14.3 .5 -5.8 .5 3.2 .5 12.0 .5 19.6 .5 25.5 .5 28.9 .5 29.8 .5 27.9 .5 23.3 .5 16.7 .5 8.5 .5 -.5 .5 -9.5 .5 -17.5 .5 -24.1 .5 -28.3 .5 -29.9 .5 -28.8 .5 -25.1 .5 -19.0 .5 -11.1 .5 -2.2 .5 6.9 .5 15.3 .5 22.4 .5 27.4 .5 29.8 .5 29.6 .5 26.6 .5 21.0 .5 13.7 .5 5.0 .5 -4.2 .5 -12.9 .5 -20.6 .5 -26.2 .5 -29.5 .5 -30.1 .5 -27.9 .5 -23.0 .5 -16.1 .5 -7.7 .5 1.4 .5 10.5 .5 18.5 .5 24.8 .5 28.9 .5 30.4 .5 28.9 .5 24.8 .5 18.5 .5 10.3 .5 1.4 .5 -7.9 .5 -16.3 .5 -23.2 .5 -28.1 .5 -30.3 .5 -29.7 .5 -26.5 .5 -20.6 .5 -13.0 .5 -4.1 .5 5.1 .5 14.0 .5 21.4 .5 27.0 .5 30.0 .5 30.4 .5 27.8 .5 22.7 .5 15.5 .5 6.9 .5 -2.4 .5 -11.5 .5 -19.4 .5 -25.7 .5 -29.5 .5 -30.7 .5 -28.9 .5 -24.6 .5 -17.9 .5 -9.6 .5 -.4 .5 8.8 .5 17.3 .5 24.1 .5 28.7 .5 30.8 .5 29.8 .5 26.3 .5 20.2 .5 12.3 .5 3.2 .5 -6.2 .5 -14.9 .5 -22.3 .5 -27.8 .5 -30.5 .5 -30.5 .5 -27.8 .5 -22.3 .5 -14.8 .5 -6.1 .5 3.4 .5 12.4 .5 20.4 .5 26.5 .5 30.1 .5 30.9 .5 29.0 .5 24.3 .5 17.3 .5 8.8 .5 -.5 .5 -9.8 .5 -18.3 .5 -25.0 .5 -29.4 .5 -31.1 .5 -29.9 .5 -26.1 .5 -19.7 .5 -11.5 .5 -2.3 .5 7.1 .5 15.9 .5 23.3 .5 28.4 .5 31.0 .5 30.8 .5 27.6 .5 21.9 .5 14.1 .5 5.2 .5 -4.3 .5 -13.5 .5 -21.3 .5 -27.3 .5 -30.6 .5 -31.2 .5 -29.0 .5 -23.9 .5 -16.7 .5 -8.0 .5 1.5 .5 10.8 .5 19.2 .5 25.9 .5 30.0 .5 31.4 .5 30.0 .5 25.8 .5 19.1 .5 10.8 .5 1.3 .5 -8.1 .5 -16.9 .5 -24.1 .5 -29.1 .5 -31.4 .5 -30.8 .5 -27.4 .5 -21.4 .5 -13.4 .5 -4.2 .5 5.3 .5 14.4 .5 22.3 .5 27.9 .5 31.0 .5 31.4 .5 28.7 .5 23.5 .5 16.0 .5 7.1 .5 -2.5 .5 -11.8 .5 -20.1 .5 -26.6 .5 -30.4 .5 -31.7 .5 -29.8 .5 -25.4 .5 -18.5 .5 -9.8 .5 -.5 .5 9.2 .5 17.8 .5 24.9 .5 29.6 .5 31.7 .5 30.7 .5 27.0 .5 20.8 .5 12.7 .5 3.3 .5 -6.4 .5 -15.4 .5 -23.0 .5 -28.5 .5 -31.4 .5 -31.4 .5 -28.5 .5 -22.9 .5 -15.3 .5 -6.2 .5 3.5 .5 12.8 .5 20.9 .5 27.2 .5 30.9 .5 31.8 .5 29.7 .5 24.9 .5 17.8 .5 9.0 .5 -.5 .5 -10.1 .5 -18.8 .5 -25.6 .5 -30.1 .5 -31.9 .5 -30.7 .5 -26.6 .5 -20.2 .5 -11.8 .5 -2.4 .5 7.3 .5 16.4 .5 23.8 .5 29.1 .5 31.7 .5 31.4 .5 28.2 .5 22.4 .5 14.5 .5 5.3 .5 -4.5 .5 -13.7 .5 -21.8 .5 -27.9 .5 -31.3 .5 -31.9 .5 -29.5 .5 -24.4 .5 -17.1 .5 -8.1 .5 1.5 .5 11.1 .5 19.6 .5 26.4 .5 30.6 .5 32.1 .5 30.5 .5 26.3 .5 19.5 .5 10.9 .5 1.4 .5 -8.3 .5 -17.2 .5 -24.6 .5 -29.7 .5 -32.0 .5 -31.3 .5 -27.9 .5 -21.8 .5 -13.6 .5 -4.3 .5 5.4 .5 14.7 .5 22.6 .5 28.5 .5 31.6 .5 31.9 .5 29.2 .5 23.9 .5 16.3 .5 7.2 .5 -2.5 .5 -12.1 .5 -20.4 .5 -27.0 .5 -31.0 .5 -32.2 .5 -30.4 .5 -25.7 .5 -18.8 .5 -10.1 .5 -.4 .5 9.3 .5 18.1 .5 25.3 .5 30.1 .5 32.2 .5 31.3 .5 27.4 .5 21.1 .5 12.9 .5 3.3 .5 -6.4 .5 -15.6 .5 -23.4 .5 -29.0 .5 -31.9 .5 -31.9 .5 -28.9 .5 -23.3 .5 -15.5 .5 -6.3 .5 3.5 .5 13.1 .5 21.2 .5 27.6 .5 31.4 .5 32.3 .5 30.1 .5 25.3 .5 18.0 .5 9.1 .5 -.5 .5 -10.3 .5 -19.0 .5 -26.0 .5 -30.5 .5 -32.4 .5 -31.1 .5 -27.0 .5 -20.5 .5 -11.9 .5 -2.4 .5 7.4 .5 16.6 .5 24.1 .5 29.5 .5 32.2 .5 31.8 .5 28.6 .5 22.7 .5 14.6 .5 5.4 .5 -4.6 .5 -13.9 .5 -22.1 .5 -28.2 .5 -31.7 .5 -32.3 .5 -29.9 .5 -24.7 .5 -17.3 .5 -8.2 .5 1.6 .5 11.2 .5 19.8 .5 26.7 .5 31.0 .5 32.5 .5 30.9 .5 26.6 .5 19.7 .5 11.1 .5 1.4 .5 -8.4 .5 -17.5 .5 -24.9 .5 -30.0 .5 -32.3 .5 -31.8 .5 -28.2 .5 -22.0 .5 -13.9 .5 -4.3 .5 5.5 .5 14.9 .5 22.9 .5 28.7 .5 32.1 .5 32.3 .5 29.5 .5 24.2 .5 16.5 .5 7.3 .5 -2.6 .5 -12.2 .5 -20.7 .5 -27.3 .5 -31.4 .5 -32.5 .5 -30.8 .5 -26.1 .5 -19.0 .5 -10.1 .5 -.5 .5 9.4 .5 18.4 .5 25.6 .5 30.5 .5 32.5 .5 31.7 .5 27.8 .5 21.3 .5 13.0 .5 3.4 .5 -6.5 .5 -15.8 .5 -23.7 .5 -29.3 .5 -32.3 .5 -32.3 .5 -29.3 .5 -23.5 .5 -15.7 .5 -6.4 .5 3.6 .5 13.2 .5 21.5 .5 27.9 .5 31.8 .5 32.6 .5 30.5 .5 25.6 .5 18.3 .5 9.2 .5 -.6 .5 -10.4 .5 -19.2 .5 -26.3 .5 -30.9 .5 -32.7 .5 -31.5 .5 -27.4 .5 -20.7 .5 -12.1 .5 -2.4 .5 7.5 .5 16.8 .5 24.4 .5 29.9 .5 32.5 .5 32.2 .5 29.0 .5 22.9 .5 14.9 .5 5.3 .5 -4.5 .5 -14.2 .5 -22.3 .5 -28.6 .5 -32.0 .5 -32.7 .5 -30.2 .5 -25.0 .5 -17.5 .5 -8.3 .5 1.6 .5 11.3 .5 20.1 .5 27.0 .5 31.3 .5 32.8 .5 31.3 .5 26.9 .5 19.9 .5 11.2 .5 1.4 .5 -8.5 .5 -17.7 .5 -25.1 .5 -30.3 .5 -32.7 .5 -32.1 .5 -28.4 .5 -22.3 .5 -13.9 .5 -4.4 .5 5.6 .5 15.0 .5 23.1 .5 29.0 .5 32.3 .5 32.6 .5 29.8 .5 24.4 .5 16.6 .5 7.4 .5 -2.6 .5 -12.3 .5 -20.9 .5 -27.5 .5 -31.7 .5 -32.8 .5 -31.0 .5 -26.2 .5 -19.2 .5 -10.2 .5 -.4 .5 9.5 .5 18.4 .5 25.8 .5 30.7 .5 32.8 .5 31.8 .5 28.0 .5 21.5 .5 13.1 .5 3.4 .5 -6.6 .5 -15.9 .5 -23.8 .5 -29.6 .5 -32.4 .5 -32.5 .5 -29.4 .5 -23.7 .5 -15.7 .5 -6.4 .5 3.6 .5 13.2 .5 21.7 .5 28.1 .5 31.9 .5 32.7 .5 30.7 .5 25.6 .5 18.3 .5 9.3 .5 -.6 .5 -10.4 .5 -19.3 .5 -26.4 .5 -31.0 .5 -32.9 .5 -31.6 .5 -27.4 .5 -20.8 .5 -12.1 .5 -2.4 .5 7.6 .5 16.8 .5 24.5 .5 29.9 .5 32.6 .5 32.3 .5 29.0 .5 23.0 .5 14.8 .5 5.4 .5 -4.6 .5 -14.1 .5 -22.4 .5 -28.6 .5 -32.1 .5 -32.7 .5 -30.3 .5 -25.1 .5 -17.4 .5 -8.4 .5 1.6 .5 11.4 .5 20.1 .5 27.0 .5 31.4 .5 32.9 .5 31.3 .5 26.9 .5 19.9 .5 11.2 .5 1.4 .5 -8.5 .5 -17.7 .5 -25.1 .5 -30.4 .5 -32.7 .5 -32.1 .5 -28.5 .5 -22.3 .5 -14.0 .5 -4.4 .5 5.6 .5 15.1 .5 23.1 .5 29.1 .5 32.3 .5 32.6 .5 29.9 .5 24.4 .5 16.7 .5 7.3 .5 -2.6 .5 -12.3 .5 -20.9 .5 -27.6 .5 -31.7 .5 -32.8 .5 -31.0 .5 -26.3 .5 -19.1 .5 -10.3 .5 -.4 .5 9.5 .5 18.5 .5 25.8 .5 30.7 .5 32.8 .5 31.9 .5 27.9 .5 21.5 .5 13.1 .5 3.4 .5 -6.6 .5 -15.9 .5 -23.8 .5 -29.6 .5 -32.4 .5 -32.5 .5 -29.4 .5 -23.7 .5 -15.7 .5 -6.4 .5 3.6 .5 13.3 .5 21.6 .5 28.1 .5 31.9 .5 32.7 .5 30.6 .5 25.7 .5 18.3 .5 9.2 .5 -.6 .5 -10.4 .5 -19.3 .5 -26.4 .5 -31.0 .5 -32.8 .5 -31.5 .5 -27.4 .5 -20.7 .5 -12.1 .5 -2.4 .5 7.5 .5 16.8 .5 24.5 .5 29.9 .5 32.5 .5 32.2 .5 29.0 .5 22.9 .5 14.8 .5 5.4 .5 -4.6 .5 -14.1 .5 -22.4 .5 -28.5 .5 -32.1 .5 -32.6 .5 -30.2 .5 -24.9 .5 -17.5 .5 -8.3 .5 1.6 .5 11.4 .5 20.0 .5 27.0 .5 31.2 .5 32.8 .5 31.2 .5 26.8 .5 19.9 .5 11.2 .5 1.4 .5 -8.5 .5 -17.6 .5 -25.1 .5 -30.3 .5 -32.6 .5 -32.0 .5 -28.4 .5 -22.2 .5 -13.9 .5 -4.4 .5 5.6 .5 15.0 .5 23.1 .5 28.9 .5 32.2 .5 32.5 .5 29.8 .5 24.3 .5 16.5 .5 7.3 .5 -2.6 .5 -12.2 .5 -20.9 .5 -27.4 .5 -31.5 .5 -32.7 .5 -30.9 .5 -26.2 .5 -19.0 .5 -10.2 .5 -.4 .5 9.4 .5 18.4 .5 25.7 .5 30.6 .5 32.7 .5 31.7 .5 27.8 .5 21.4 .5 13.0 .5 3.4 .5 -6.5 .5 -15.9 .5 -23.7 .5 -29.4 .5 -32.3 .5 -32.3 .5 -29.3 .5 -23.6 .5 -15.6 .5 -6.4 .5 3.6 .5 13.2 .5 21.5 .5 28.0 .5 31.7 .5 32.6 .5 30.5 .5 25.5 .5 18.2 .5 9.3 .5 -.6 .5 -10.4 .5 -19.2 .5 -26.3 .5 -30.9 .5 -32.6 .5 -31.4 .5 -27.3 .5 -20.6 .5 -12.1 .5 -2.3 .5 7.5 .5 16.7 .5 24.3 .5 29.8 .5 32.4 .5 32.1 .5 28.8 .5 22.8 .5 14.8 .5 5.3 .5 -4.5 .5 -14.1 .5 -22.3 .5 -28.4 .5 -31.9 .5 -32.5 .5 -30.0 .5 -24.9 .5 -17.4 .5 -8.2 .5 1.6 .5 11.3 .5 20.0 .5 26.8 .5 31.1 .5 32.6 .5 31.1 .5 26.7 .5 19.8 .5 11.1 .5 1.4 .5 -8.5 .5 -17.5 .5 -25.0 .5 -30.1 .5 -32.5 .5 -31.8 .5 -28.3 .5 -22.1 .5 -13.8 .5 -4.4 .5 5.6 .5 14.9 .5 22.9 .5 28.9 .5 32.1 .5 32.3 .5 29.6 .5 24.2 .5 16.5 .5 7.3 .5 -2.6 .5 -12.2 .5 -20.8 .5 -27.3 .5 -31.4 .5 -32.5 .5 -30.8 .5 -26.0 .5 -19.0 .5 -10.2 .5 -.3 .5 9.4 .5 18.3 .5 25.6 .5 30.4 .5 32.5 .5 31.6 .5 27.7 .5 21.3 .5 13.0 .5 3.3 .5 -6.5 .5 -15.8 .5 -23.6 .5 -29.2 .5 -32.2 .5 -32.2 .5 -29.1 .5 -23.5 .5 -15.6 .5 -6.3 .5 3.6 .5 13.1 .5 21.4 .5 27.8 .5 31.6 .5 32.5 .5 30.3 .5 25.5 .5 18.1 .5 9.2 .5 -.6 .5 -10.3 .5 -19.2 .5 -26.1 .5 -30.7 .5 -32.5 .5 -31.3 .5 -27.2 .5 -20.5 .5 -12.0 .5 -2.4 .5 7.5 .5 16.6 .5 24.3 .5 29.6 .5 32.3 .5 31.9 .5 28.7 .5 22.7 .5 14.7 .5 5.3 .5 -4.5 .5 -14.0 .5 -22.2 .5 -28.2 .5 -31.8 .5 -32.3 .5 -30.0 .5 -24.7 .5 -17.3 .5 -8.2 .5 1.6 .5 11.3 .5 19.8 .5 26.7 .5 31.0 .5 32.4 .5 31.0 .5 26.5 .5 19.7 .5 11.1 .5 1.3 .5 -8.4 .5 -17.4 .5 -24.9 .5 -29.9 .5 -32.3 .5 -31.7 .5 -28.1 .5 -22.0 .5 -13.8 .5 -4.3 .5 5.5 .5 14.9 .5 22.8 .5 28.7 .5 31.9 .5 32.1 .5 29.5 .5 24.0 .5 16.4 .5 7.2 .5 -2.5 .5 -12.2 .5 -20.6 .5 -27.1 .5 -31.3 .5 -32.3 .5 -30.6 .5 -25.9 .5 -18.8 .5 -10.1 .5 -.4 .5 9.3 .5 18.3 .5 25.4 .5 30.2 .5 32.4 .5 31.3 .5 27.6 .5 21.2 .5 12.8 .5 3.3 .5 -6.4 .5 -15.7 .5 -23.5 .5 -29.0 .5 -32.0 .5 -32.0 .5 -28.9 .5 -23.3 .5 -15.5 .5 -6.3 .5 3.5 .5 13.1 .5 21.3 .5 27.6 .5 31.4 .5 32.3 .5 30.1 .5 25.2 .5 18.0 .5 9.2 .5 -.6 .5 -10.3 .5 -19.0 .5 -25.9 .5 -30.6 .5 -32.3 .5 -31.0 .5 -27.0 .5 -20.3 .5 -12.0 .5 -2.3 .5 7.4 .5 16.5 .5 24.1 .5 29.4 .5 32.1 .5 31.7 .5 28.4 .5 22.6 .5 14.6 .5 5.3 .5 -4.6 .5 -13.9 .5 -22.0 .5 -28.0 .5 -31.6 .5 -32.1 .5 -29.7 .5 -24.5 .5 -17.2 .5 -8.1 .5 1.6 .5 11.1 .5 19.8 .5 26.4 .5 30.8 .5 32.2 .5 30.7 .5 26.4 .5 19.5 .5 11.0 .5 1.4 .5 -8.4 .5 -17.3 .5 -24.7 .5 -29.7 .5 -32.1 .5 -31.4 .5 -27.9 .5 -21.8 .5 -13.7 .5 -4.3 .5 5.5 .5 14.7 .5 22.7 .5 28.4 .5 31.7 .5 31.9 .5 29.3 .5 23.8 .5 16.3 .5 7.2 .5 -2.6 .5 -12.0 .5 -20.5 .5 -27.0 .5 -30.9 .5 -32.2 .5 -30.3 .5 -25.7 .5 -18.7 .5 -10.1 .5 -.3 .5 9.2 .5 18.1 .5 25.3 .5 30.0 .5 32.1 .5 31.1 .5 27.4 .5 21.0 .5 12.8 .5 3.3 .5 -6.5 .5 -15.5 .5 -23.3 .5 -28.9 .5 -31.7 .5 -31.7 .5 -28.8 .5 -23.1 .5 -15.4 .5 -6.2 .5 3.5 .5 12.9 .5 21.2 .5 27.4 .5 31.2 .5 32.0 .5 29.9 .5 25.1 .5 17.8 .5 9.1 .5 -.6 .5 -10.2 .5 -18.8 .5 -25.8 .5 -30.3 .5 -32.1 .5 -30.8 .5 -26.7 .5 -20.3 .5 -11.8 .5 -2.3 .5 7.3 .5 16.4 .5 23.9 .5 29.2 .5 31.8 .5 31.5 .5 28.3 .5 22.4 .5 14.4 .5 5.3 .5 -4.5 .5 -13.8 .5 -21.8 .5 -27.9 .5 -31.3 .5 -31.9 .5 -29.4 .5 -24.4 .5 -17.1 .5 -8.1 .5 1.6 .5 11.1 .5 19.6 .5 26.3 .5 30.5 .5 32.0 .5 30.5 .5 26.1 .5 19.5 .5 10.8 .5 1.4 .5 -8.3 .5 -17.2 .5 -24.5 .5 -29.5 .5 -31.8 .5 -31.2 .5 -27.8 .5 -21.6 .5 -13.6 .5 -4.2 .5 5.4 .5 14.6 .5 22.5 .5 28.3 .5 31.4 .5 31.7 .5 29.0 .5 23.7 .5 16.2 .5 7.1 .5 -2.5 .5 -12.0 .5 -20.3 .5 -26.8 .5 -30.7 .5 -31.9 .5 -30.1 .5 -25.6 .5 -18.5 .5 -10.0 .5 -.4 .5 9.2 .5 18.0 .5 25.0 .5 29.9 .5 31.8 .5 30.9 .5 27.2 .5 20.8 .5 12.7 .5 3.3 .5 -6.4 .5 -15.4 .5 -23.2 .5 -28.6 .5 -31.5 .5 -31.5 .5 -28.5 .5 -23.0 .5 -15.3 .5 -6.2 .5 3.5 .5 12.9 .5 21.0 .5 27.2 .5 30.9 .5 31.8 .5 29.7 .5 24.9 .5 17.7 .5 9.0 .5 -.6 .5 -10.1 .5 -18.7 .5 -25.6 .5 -30.1 .5 -31.8 .5 -30.6 .5 -26.5 .5 -20.1 .5 -11.7 .5 -2.4 .5 7.3 .5 16.3 .5 23.7 .5 29.0 .5 31.6 .5 31.3 .5 28.0 .5 22.2 .5 14.4 .5 5.2 .5 -4.4 .5 -13.7 .5 -21.7 .5 -27.7 .5 -31.0 .5 -31.7 .5 -29.2 .5 -24.2 .5 -16.9 .5 -8.1 .5 1.6 .5 11.0 .5 19.4 .5 26.1 .5 30.3 .5 31.8 .5 30.2 .5 26.0 .5 19.3 .5 10.8 .5 1.3 .5 -8.2 .5 -17.1 .5 -24.3 .5 -29.3 .5 -31.6 .5 -31.0 .5 -27.5 .5 -21.5 .5 -13.4 .5 -4.3 .5 5.4 .5 14.6 .5 22.3 .5 28.0 .5 31.2 .5 31.5 .5 28.8 .5 23.5 .5 16.0 .5 7.1 .5 -2.5 .5 -11.9 .5 -20.1 .5 -26.6 .5 -30.5 .5 -31.7 .5 -29.9 .5 -25.3 .5 -18.5 .5 -9.8 .5 -.4 .5 9.1 .5 17.9 .5 24.8 .5 29.6 .5 31.6 .5 30.7 .5 27.0 .5 20.7 .5 12.6 .5 3.2 .5 -6.3 .5 -15.4 .5 -22.9 .5 -28.4 .5 -31.3 .5 -31.3 .5 -28.3 .5 -22.8 .5 -15.2" stroke="#9400d3" stroke-width="2.0" fill="none" stroke-linejoin="round"/><path d="M348.0 657.0l.5 -7.5 .5 -16.0 .5 -23.3 .5 -28.2 .5 -30.6 .5 -30.2 .5 -27.0 .5 -21.3 .5 -13.6 .5 -4.7 .5 4.7 .5 13.6 .5 21.3 .5 27.0 .5 30.2 .5 30.6 .5 28.2 .5 23.3 .5 16.0 .5 7.5 .5 -1.9 .5 -11.0 .5 -19.2 .5 -25.5 .5 -29.5 .5 -30.8 .5 -29.3 .5 -25.0 .5 -18.4 .5 -10.1 .5 -.9 .5 8.3 .5 16.9 .5 23.8 .5 28.6 .5 30.7 .5 30.0 .5 26.6 .5 20.5 .5 12.8 .5 3.8 .5 -5.7 .5 -14.4 .5 -21.9 .5 -27.5 .5 -30.4 .5 -30.5 .5 -27.8 .5 -22.6 .5 -15.3 .5 -6.5 .5 2.8 .5 11.9 .5 19.9 .5 26.0 .5 29.8 .5 30.8 .5 28.9 .5 24.4 .5 17.7 .5 9.2 .5 .0 .5 -9.2 .5 -17.7 .5 -24.4 .5 -28.9 .5 -30.8 .5 -29.8 .5 -26.0 .5 -19.9 .5 -11.9 .5 -2.8 .5 6.5 .5 15.3 .5 22.6 .5 27.8 .5 30.5 .5 30.4 .5 27.5 .5 21.9 .5 14.4 .5 5.7 .5 -3.8 .5 -12.8 .5 -20.5 .5 -26.6 .5 -30.0 .5 -30.7 .5 -28.6 .5 -23.8 .5 -16.9 .5 -8.3 .5 .9 .5 10.1 .5 18.4 .5 25.0 .5 29.3 .5 30.8 .5 29.5 .5 25.5 .5 19.2 .5 11.0 .5 1.9 .5 -7.5 .5 -16.0 .5 -23.3 .5 -28.2 .5 -30.6 .5 -30.2 .5 -27.0 .5 -21.3 .5 -13.6 .5 -4.7 .5 4.7 .5 13.6 .5 21.3 .5 27.0 .5 30.2 .5 30.6 .5 28.2 .5 23.3 .5 16.0 .5 7.5 .5 -1.9 .5 -11.0 .5 -19.2 .5 -25.5 .5 -29.5 .5 -30.8 .5 -29.3 .5 -25.0 .5 -18.4 .5 -10.1 .5 -.9 .5 8.3 .5 16.9 .5 23.8 .5 28.6 .5 30.7 .5 30.0 .5 26.6 .5 20.5 .5 12.8 .5 3.8 .5 -5.7 .5 -14.4 .5 -21.9 .5 -27.5 .5 -30.4 .5 -30.5 .5 -27.8 .5 -22.6 .5 -15.3 .5 -6.5 .5 2.8 .5 11.9 .5 19.9 .5 26.0 .5 29.8 .5 30.8 .5 28.9 .5 24.4 .5 17.7 .5 9.2 .5 .0 .5 -9.2 .5 -17.7 .5 -24.4 .5 -28.9 .5 -30.8 .5 -29.8 .5 -26.0 .5 -19.9 .5 -11.9 .5 -2.8 .5 6.5 .5 15.3 .5 22.6 .5 27.8 .5 30.5 .5 30.4 .5 27.5 .5 21.9 .5 14.4 .5 5.7 .5 -3.8 .5 -12.8 .5 -20.5 .5 -26.6 .5 -30.0 .5 -30.7 .5 -28.6 .5 -23.8 .5 -16.9 .5 -8.3 .5 .9 .5 10.1 .5 18.4 .5 25.0 .5 29.3 .5 30.8 .5 29.5 .5 25.5 .5 19.2 .5 11.0 .5 1.9 .5 -7.5 .5 -16.0 .5 -23.3 .5 -28.2 .5 -30.6 .5 -30.2 .5 -27.0 .5 -21.3 .5 -13.6 .5 -4.7 .5 4.7 .5 13.6 .5 21.3 .5 27.0 .5 30.2 .5 30.6 .5 28.2 .5 23.3 .5 16.0 .5 7.5 .5 -1.9 .5 -11.0 .5 -19.2 .5 -25.5 .5 -29.5 .5 -30.8 .5 -29.3 .5 -25.0 .5 -18.4 .5 -10.1 .5 -.9 .5 8.3 .5 16.9 .5 23.8 .5 28.6 .5 30.7 .5 30.0 .5 26.6 .5 20.5 .5 12.8 .5 3.8 .5 -5.7 .5 -14.4 .5 -21.9 .5 -27.5 .5 -30.4 .5 -30.5 .5 -27.8 .5 -22.6 .5 -15.3 .5 -6.5 .5 2.8 .5 11.9 .5 19.9 .5 26.0 .5 29.8 .5 30.8 .5 28.9 .5 24.4 .5 17.7 .5 9.2 .5 .0 .5 -9.2 .5 -17.7 .5 -24.4 .5 -28.9 .5 -30.8 .5 -29.8 .5 -26.0 .5 -19.9 .5 -11.9 .5 -2.8 .5 6.5 .5 15.3 .5 22.6 .5 27.8 .5 30.5 .5 30.4 .5 27.5 .5 21.9 .5 14.4 .5 5.7 .5 -3.8 .5 -12.8 .5 -20.5 .5 -26.6 .5 -30.0 .5 -30.7 .5 -28.6 .5 -23.8 .5 -16.9 .5 -8.3 .5 .9 .5 10.1 .5 18.4 .5 25.0 .5 29.3 .5 30.8 .5 29.5 .5 25.5 .5 19.2 .5 11.0 .5 1.9 .5 -7.5 .5 -16.0 .5 -23.3 .5 -28.2 .5 -30.6 .5 -30.2 .5 -27.0 .5 -21.3 .5 -13.6 .5 -4.7 .5 4.7 .5 13.6 .5 21.3 .5 27.0 .5 30.2 .5 30.6 .5 28.2 .5 23.3 .5 16.0 .5 7.5 .5 -1.9 .5 -11.0 .5 -19.2 .5 -25.5 .5 -29.5 .5 -30.8 .5 -29.3 .5 -25.0 .5 -18.4 .5 -10.1 .5 -.9 .5 8.3 .5 16.9 .5 23.8 .5 28.6 .5 30.7 .5 30.0 .5 26.6 .5 20.5 .5 12.8 .5 3.8 .5 -5.7 .5 -14.4 .5 -21.9 .5 -27.5 .5 -30.4 .5 -30.5 .5 -27.8 .5 -22.6 .5 -15.3 .5 -6.5 .5 2.8 .5 11.9 .5 19.9 .5 26.0 .5 29.8 .5 30.8 .5 28.9 .5 24.4 .5 17.7 .5 9.2 .5 .0 .5 -9.2 .5 -17.7 .5 -24.4 .5 -28.9 .5 -30.8 .5 -29.8 .5 -26.0 .5 -19.9 .5 -11.9 .5 -2.8 .5 6.5 .5 15.3 .5 22.6 .5 27.8 .5 30.5 .5 30.4 .5 27.5 .5 21.9 .5 14.4 .5 5.7 .5 -3.8 .5 -12.8 .5 -20.5 .5 -26.6 .5 -30.0 .5 -30.7 .5 -28.6 .5 -23.8 .5 -16.9 .5 -8.3 .5 .9 .5 10.1 .5 18.4 .5 25.0 .5 29.3 .5 30.8 .5 29.5 .5 25.5 .5 19.2 .5 11.0 .5 1.9 .5 -7.5 .5 -16.0 .5 -23.3 .5 -28.2 .5 -30.6 .5 -30.2 .5 -27.0 .5 -21.3 .5 -13.6 .5 -4.7 .5 4.7 .5 13.6 .5 21.3 .5 27.0 .5 30.2 .5 30.6 .5 28.2 .5 23.3 .5 16.0 .5 7.5 .5 -1.9 .5 -11.0 .5 -19.2 .5 -25.5 .5 -29.5 .5 -30.8 .5 -29.3 .5 -25.0 .5 -18.4 .5 -10.1 .5 -.9 .5 8.3 .5 16.9 .5 23.8 .5 28.6 .5 30.7 .5 30.0 .5 26.6 .5 20.5 .5 12.8 .5 3.8 .5 -5.7 .5 -14.4 .5 -21.9 .5 -27.5 .5 -30.4 .5 -30.5 .5 -27.8 .5 -22.6 .5 -15.3 .5 -6.5 .5 2.8 .5 11.9 .5 19.9 .5 26.0 .5 29.8 .5 30.8 .5 28.9 .5 24.4 .5 17.7 .5 9.2 .5 .0 .5 -9.2 .5 -17.7 .5 -24.4 .5 -28.9 .5 -30.8 .5 -29.8 .5 -26.0 .5 -19.9 .5 -11.9 .5 -2.8 .5 6.5 .5 15.3 .5 22.6 .5 27.8 .5 30.5 .5 30.4 .5 27.5 .5 21.9 .5 14.4 .5 5.7 .5 -3.8 .5 -12.8 .5 -20.5 .5 -26.6 .5 -30.0 .5 -30.7 .5 -28.6 .5 -23.8 .5 -16.9 .5 -8.3 .5 .9 .5 10.1 .5 18.4 .5 25.0 .5 29.3 .5 30.8 .5 29.5 .5 25.5 .5 19.2 .5 11.0 .5 1.9 .5 -7.5 .5 -16.0 .5 -23.3 .5 -28.2 .5 -30.6 .5 -30.2 .5 -27.0 .5 -21.3 .5 -13.6 .5 -4.7 .5 4.7 .5 13.6 .5 21.3 .5 27.0 .5 30.2 .5 30.6 .5 28.2 .5 23.3 .5 16.0 .5 7.5 .5 -1.9 .5 -11.0 .5 -19.2 .5 -25.5 .5 -29.5 .5 -30.8 .5 -29.3 .5 -25.0 .5 -18.4 .5 -10.1 .5 -.9 .5 8.3 .5 16.9 .5 23.8 .5 28.6 .5 30.7 .5 30.0 .5 26.6 .5 20.5 .5 12.8 .5 3.8 .5 -5.7 .5 -14.4 .5 -21.9 .5 -27.5 .5 -30.4 .5 -30.5 .5 -27.8 .5 -22.6 .5 -15.3 .5 -6.5 .5 2.8 .5 11.9 .5 19.9 .5 26.0 .5 29.8 .5 30.8 .5 28.9 .5 24.4 .5 17.7 .5 9.2 .5 .0 .5 -9.2 .5 -17.7 .5 -24.4 .5 -28.9 .5 -30.8 .5 -29.8 .5 -26.0 .5 -19.9 .5 -11.9 .5 -2.8 .5 6.5 .5 15.3 .5 22.6 .5 27.8 .5 30.5 .5 30.4 .5 27.5 .5 21.9 .5 14.4 .5 5.7 .5 -3.8 .5 -12.8 .5 -20.5 .5 -26.6 .5 -30.0 .5 -30.7 .5 -28.6 .5 -23.8 .5 -16.9 .5 -8.3 .5 .9 .5 10.1 .5 18.4 .5 25.0 .5 29.3 .5 30.8 .5 29.5 .5 25.5 .5 19.2 .5 11.0 .5 1.9 .5 -7.5 .5 -16.0 .5 -23.3 .5 -28.2 .5 -30.6 .5 -30.2 .5 -27.0 .5 -21.3 .5 -13.6 .5 -4.7 .5 4.7 .5 13.6 .5 21.3 .5 27.0 .5 30.2 .5 30.6 .5 28.2 .5 23.3 .5 16.0 .5 7.5 .5 -1.9 .5 -11.0 .5 -19.2 .5 -25.5 .5 -29.5 .5 -30.8 .5 -29.3 .5 -25.0 .5 -18.4 .5 -10.1 .5 -.9 .5 8.3 .5 16.9 .5 23.8 .5 28.6 .5 30.7 .5 30.0 .5 26.6 .5 20.5 .5 12.8 .5 3.8 .5 -5.7 .5 -14.4 .5 -21.9 .5 -27.5 .5 -30.4 .5 -30.5 .5 -27.8 .5 -22.6 .5 -15.3 .5 -6.5 .5 2.8 .5 11.9 .5 19.9 .5 26.0 .5 29.8 .5 30.8 .5 28.9 .5 24.4 .5 17.7 .5 9.2 .5 .0 .5 -9.2 .5 -17.7 .5 -24.4 .5 -28.9 .5 -30.8 .5 -29.8 .5 -26.0 .5 -19.9 .5 -11.9 .5 -2.8 .5 6.5 .5 15.3 .5 22.6 .5 27.8 .5 30.5 .5 30.4 .5 27.5 .5 21.9 .5 14.4 .5 5.7 .5 -3.8 .5 -12.8 .5 -20.5 .5 -26.6 .5 -30.0 .5 -30.7 .5 -28.6 .5 -23.8 .5 -16.9 .5 -8.3 .5 .9 .5 10.1 .5 18.4 .5 25.0 .5 29.3 .5 30.8 .5 29.5 .5 25.5 .5 19.2 .5 11.0 .5 1.9 .5 -7.5 .5 -16.0 .5 -23.3 .5 -28.2 .5 -30.6 .5 -30.2 .5 -27.0 .5 -21.3 .5 -13.6 .5 -4.7 .5 4.7 .5 13.6 .5 21.3 .5 27.0 .5 30.2 .5 30.6 .5 28.2 .5 23.3 .5 16.0 .5 7.5 .5 -1.9 .5 -11.0 .5 -19.2 .5 -25.5 .5 -29.5 .5 -30.8 .5 -29.3 .5 -25.0 .5 -18.4 .5 -10.1 .5 -.9 .5 8.3 .5 16.9 .5 23.8 .5 28.6 .5 30.7 .5 30.0 .5 26.6 .5 20.5 .5 12.8 .5 3.8 .5 -5.7 .5 -14.4 .5 -21.9 .5 -27.5 .5 -30.4 .5 -30.5 .5 -27.8 .5 -22.6 .5 -15.3 .5 -6.5 .5 2.8 .5 11.9 .5 19.9 .5 26.0 .5 29.8 .5 30.8 .5 28.9 .5 24.4 .5 17.7 .5 9.2 .5 .0 .5 -9.2 .5 -17.7 .5 -24.4 .5 -28.9 .5 -30.8 .5 -29.8 .5 -26.0 .5 -19.9 .5 -11.9 .5 -2.8 .5 6.5 .5 15.3 .5 22.6 .5 27.8 .5 30.5 .5 30.4 .5 27.5 .5 21.9 .5 14.4 .5 5.7 .5 -3.8 .5 -12.8 .5 -20.5 .5 -26.6 .5 -30.0 .5 -30.7 .5 -28.6 .5 -23.8 .5 -16.9 .5 -8.3 .5 .9 .5 10.1 .5 18.4 .5 25.0 .5 29.3 .5 30.8 .5 29.5 .5 25.5 .5 19.2 .5 11.0 .5 1.9 .5 -7.5 .5 -16.0 .5 -23.3 .5 -28.2 .5 -30.6 .5 -30.2 .5 -27.0 .5 -21.3 .5 -13.6 .5 -4.7 .5 4.7 .5 13.6 .5 21.3 .5 27.0 .5 30.2 .5 30.6 .5 28.2 .5 23.3 .5 16.0 .5 7.5 .5 -1.9 .5 -11.0 .5 -19.2 .5 -25.5 .5 -29.5 .5 -30.8 .5 -29.3 .5 -25.0 .5 -18.4 .5 -10.1 .5 -.9 .5 8.3 .5 16.9 .5 23.8 .5 28.6 .5 30.7 .5 30.0 .5 26.6 .5 20.5 .5 12.8 .5 3.8 .5 -5.7 .5 -14.4 .5 -21.9 .5 -27.5 .5 -30.4 .5 -30.5 .5 -27.8 .5 -22.6 .5 -15.3 .5 -6.5 .5 2.8 .5 11.9 .5 19.9 .5 26.0 .5 29.8 .5 30.8 .5 28.9 .5 24.4 .5 17.7 .5 9.2 .5 .0 .5 -9.2 .5 -17.7 .5 -24.4 .5 -28.9 .5 -30.8 .5 -29.8 .5 -26.0 .5 -19.9 .5 -11.9 .5 -2.8 .5 6.5 .5 15.3 .5 22.6 .5 27.8 .5 30.5 .5 30.4 .5 27.5 .5 21.9 .5 14.4 .5 5.7 .5 -3.8 .5 -12.8 .5 -20.5 .5 -26.6 .5 -30.0 .5 -30.7 .5 -28.6 .5 -23.8 .5 -16.9 .5 -8.3 .5 .9 .5 10.1 .5 18.4 .5 25.0 .5 29.3 .5 30.8 .5 29.5 .5 25.5 .5 19.2 .5 11.0 .5 1.9 .5 -7.5 .5 -16.0 .5 -23.3 .5 -28.2 .5 -30.6 .5 -30.2 .5 -27.0 .5 -21.3 .5 -13.6 .5 -4.7 .5 4.7 .5 13.6 .5 21.3 .5 27.0 .5 30.2 .5 30.6 .5 28.2 .5 23.3 .5 16.0 .5 7.5 .5 -1.9 .5 -11.0 .5 -19.2 .5 -25.5 .5 -29.5 .5 -30.8 .5 -29.3 .5 -25.0 .5 -18.4 .5 -10.1 .5 -.9 .5 8.3 .5 16.9 .5 23.8 .5 28.6 .5 30.7 .5 30.0 .5 26.6 .5 20.5 .5 12.8 .5 3.8 .5 -5.7 .5 -14.4 .5 -21.9 .5 -27.5 .5 -30.4 .5 -30.5 .5 -27.8 .5 -22.6 .5 -15.3 .5 -6.5 .5 2.8 .5 11.9 .5 19.9 .5 26.0 .5 29.8 .5 30.8 .5 28.9 .5 24.4 .5 17.7 .5 9.2 .5 -6.8 .5 -14.8 .5 -20.2 .5 -22.8 .5 -22.4 .5 -19.6 .5 -14.8 .5 -9.0 .5 -3.1 .5 2.2 .5 6.1 .5 8.2 .5 2.8 .5 4.0 .5 5.0 .5 5.3 .5 5.2 .5 4.6 .5 3.7 .5 2.3 .5 .8 .5 -.7 .5 -2.2 .5 -3.5 .5 -4.4 .5 -4.9 .5 -4.9 .5 -4.5 .5 -3.7 .5 -2.6 .5 -1.2 .5 .3 .5 1.7 .5 2.9 .5 3.8 .5 4.5 .5 4.6 .5 4.3 .5 3.7 .5 2.7 .5 1.5 .5 .1 .5 -1.1 .5 -2.4 .5 -3.3 .5 -4.0 .5 -4.2 .5 -4.1 .5 -3.6 .5 -2.8 .5 -1.7 .5 -.5 .5 .7 .5 1.9 .5 2.8 .5 3.5 .5 3.8 .5 3.8 .5 3.5 .5 2.8 .5 1.8 .5 .8 .5 -.3 .5 -1.5 .5 -2.3 .5 -3.0 .5 -3.4 .5 -3.5 .5 -3.3 .5 -2.7 .5 -1.9 .5 -1.0 .5 .0 .5 1.0 .5 1.9 .5 2.6 .5 2.9 .5 3.2 .5 3.0 .5 2.7 .5 2.0 .5 1.3 .5 .3 .5 -.6 .5 -1.5 .5 -2.2 .5 -2.7 .5 -3.0 .5 -2.9 .5 -2.6 .5 -2.1 .5 -1.4 .5 -.5 .5 .3 .5 1.1 .5 1.9 .5 2.4 .5 2.7 .5 2.8 .5 2.6 .5 2.1 .5 1.5 .5 .8 .5 -.1 .5 -.9 .5 -1.5 .5 -2.1 .5 -2.5 .5 -2.6 .5 -2.5 .5 -2.1 .5 -1.6 .5 -.9 .5 -.2 .5 .6 .5 1.3 .5 1.8 .5 2.2 .5 2.4 .5 2.4 .5 2.0 .5 1.7 .5 1.0 .5 .4 .5 -.4 .5 -1.0 .5 -1.5 .5 -2.0 .5 -2.1 .5 -2.2 .5 -2.0 .5 -1.7 .5 -1.1 .5 -.5 .5 .1 .5 .8 .5 1.2 .5 1.7 .5 2.0 .5 2.0 .5 1.9 .5 1.6 .5 1.2 .5 .6 .5 .1 .5 -.6 .5 -1.0 .5 -1.4 .5 -1.7 .5 -1.9 .5 -1.7 .5 -1.6 .5 -1.2 .5 -.7 .5 -.2 .5 .3 .5 .8 .5 1.2 .5 -8.2 .5 8.8 .5 18.7 .5 17.2 .5 14.1 .5 9.7 .5 4.4 .5 -1.2 .5 -6.5 .5 -11.5 .5 -15.5 .5 -18.0 .5 -19.1 .5 -18.2 .5 -15.7 .5 -11.7 .5 -6.6 .5 -.8 .5 5.0 .5 10.5 .5 15.1 .5 18.2 .5 19.7 .5 19.4 .5 17.3 .5 13.5 .5 8.6 .5 2.7 .5 -3.6 .5 -9.4 .5 -14.4 .5 -18.0 .5 -20.1 .5 -20.2 .5 -18.5 .5 -15.0 .5 -10.2 .5 -4.5 .5 1.8 .5 7.8 .5 13.3 .5 17.3 .5 20.0 .5 20.6 .5 19.5 .5 16.5 .5 12.0 .5 6.3 .5 .1 .5 -6.2 .5 -11.9 .5 -16.5 .5 -19.6 .5 -21.0 .5 -20.3 .5 -17.8 .5 -13.7 .5 -8.2 .5 -2.1 .5 4.4 .5 10.4 .5 15.5 .5 19.2 .5 21.1 .5 21.0 .5 19.0 .5 15.3 .5 10.2 .5 4.0 .5 -2.5 .5 -8.9 .5 -14.3 .5 -18.5 .5 -21.0 .5 -21.5 .5 -20.2 .5 -16.8 .5 -12.0 .5 -5.9 .5 .6 .5 7.1 .5 13.0 .5 17.6 .5 20.7 .5 21.8 .5 21.0 .5 18.1 .5 13.6 .5 7.8 .5 1.4 .5 -5.2 .5 -11.4 .5 -16.5 .5 -20.1 .5 -21.8 .5 -21.5 .5 -19.3 .5 -15.2 .5 -9.8 .5 -3.4 .5 3.3 .5 9.7 .5 15.2 .5 19.3 .5 21.7 .5 21.9 .5 20.3 .5 16.7 .5 11.6 .5 5.4 .5 -1.3 .5 -7.9 .5 -13.8 .5 -18.3 .5 -21.3 .5 -22.2 .5 -21.1 .5 -18.1 .5 -13.3 .5 -7.4 .5 -.7 .5 6.0 .5 12.2 .5 17.2 .5 20.7 .5 22.3 .5 21.8 .5 19.3 .5 15.0 .5 9.3 .5 2.8 .5 -4.1 .5 -10.4 .5 -16.0 .5 -20.0 .5 -22.2 .5 -22.3 .5 -20.3 .5 -16.6 .5 -11.2 .5 -4.8 .5 2.0 .5 8.7 .5 14.5 .5 19.1 .5 21.9 .5 22.6 .5 21.3 .5 17.9 .5 13.1 .5 6.8 .5 .1 .5 -6.8 .5 -13.0 .5 -18.0 .5 -21.3 .5 -22.8 .5 -22.0 .5 -19.3 .5 -14.8 .5 -8.8 .5 -2.1 .5 4.8 .5 11.2 .5 16.8 .5 20.7 .5 22.6 .5 22.7 .5 20.4 .5 16.4 .5 10.8 .5 4.2 .5 -2.8 .5 -9.4 .5 -15.4 .5 -19.8 .5 -22.4 .5 -23.0 .5 -21.4 .5 -17.9 .5 -12.7 .5 -6.3 .5 .6 .5 7.6 .5 13.8 .5 18.8 .5 22.0 .5 23.1 .5 22.3 .5 19.3 .5 14.4 .5 8.4 .5 1.5 .5 -5.6 .5 -12.1 .5 -17.6 .5 -21.3 .5 -23.2 .5 -22.9 .5 -20.5 .5 -16.2 .5 -10.3 .5 -3.6 .5 3.5 .5 10.3 .5 16.2 .5 20.5 .5 23.0 .5 23.3 .5 21.6 .5 17.7 .5 12.3 .5 5.8 .5 -1.4 .5 -8.4 .5 -14.7 .5 -19.5 .5 -22.6 .5 -23.6 .5 -22.4 .5 -19.2 .5 -14.2 .5 -7.8 .5 -.8 .5 6.4 .5 12.9 .5 18.4 .5 22.0 .5 23.7 .5 23.1 .5 20.5 .5 15.9 .5 9.9 .5 3.0 .5 -4.3 .5 -11.2 .5 -16.9 .5 -21.3 .5 -23.5 .5 -23.7 .5 -21.6 .5 -17.6 .5 -11.9 .5 -5.1 .5 2.1 .5 9.2 .5 15.5 .5 20.3 .5 23.2 .5 24.0 .5 22.6 .5 19.1 .5 13.8 .5 7.3 .5 .0 .5 -7.2 .5 -13.7 .5 -19.2 .5 -22.6 .5 -24.2 .5 -23.4 .5 -20.5 .5 -15.6 .5 -9.4 .5 -2.3 .5 5.1 .5 12.0 .5 17.8 .5 21.9 .5 24.1 .5 24.0 .5 21.7 .5 17.4 .5 11.5 .5 4.5 .5 -2.9 .5 -10.1 .5 -16.3 .5 -21.0 .5 -23.9 .5 -24.4 .5 -22.8 .5 -19.0 .5 -13.4 .5 -6.7 .5 .7 .5 8.0 .5 14.7 .5 19.9 .5 23.4 .5 24.6 .5 23.7 .5 20.4 .5 15.4 .5 8.9 .5 1.6 .5 -6.0 .5 -12.8 .5 -18.7 .5 -22.7 .5 -24.6 .5 -24.4 .5 -21.7 .5 -17.2 .5 -11.1 .5 -3.8 .5 3.7 .5 11.0 .5 17.2 .5 21.8 .5 24.4 .5 24.9 .5 22.9 .5 18.9 .5 13.1 .5 6.1 .5 -1.5 .5 -8.9 .5 -15.6 .5 -20.7 .5 -24.1 .5 -25.1 .5 -23.9 .5 -20.4 .5 -15.1 .5 -8.3 .5 -.8 .5 6.8 .5 13.7 .5 19.5 .5 23.4 .5 25.2 .5 24.7 .5 21.8 .5 16.9 .5 10.6 .5 3.1 .5 -4.6 .5 -11.8 .5 -18.1 .5 -22.6 .5 -25.0 .5 -25.2 .5 -23.1 .5 -18.7 .5 -12.6 .5 -5.5 .5 2.3 .5 9.8 .5 16.5 .5 21.5 .5 24.7 .5 25.6 .5 24.1 .5 20.3 .5 14.7 .5 7.8 .5 .0 .5 -7.7 .5 -14.6 .5 -20.4 .5 -24.1 .5 -25.7 .5 -24.9 .5 -21.8 .5 -16.7 .5 -9.9 .5 -2.4 .5 5.4 .5 12.7 .5 19.0 .5 23.3 .5 25.6 .5 25.5 .5 23.1 .5 18.4 .5 12.2 .5 4.8 .5 -3.2 .5 -10.7 .5 -17.3 .5 -22.3 .5 -25.3 .5 -25.9 .5 -24.1 .5 -20.2 .5 -14.3 .5 -7.1 .5 .8 .5 8.5 .5 15.6 .5 21.1 .5 24.8 .5 26.1 .5 25.0 .5 21.7 .5 16.2 .5 9.4 .5 1.7 .5 -6.3 .5 -13.6 .5 -19.8 .5 -24.0 .5 -26.0 .5 -25.8 .5 -23.0 .5 -18.2 .5 -11.6 .5 -4.0 .5 3.9 .5 11.6 .5 18.2 .5 23.0 .5 25.8 .5 26.2 .5 24.2 .5 19.9 .5 13.9 .5 6.4 .5 -1.6 .5 -9.4 .5 -16.4 .5 -21.9 .5 -25.4 .5 -26.5 .5 -25.1 .5 -21.5 .5 -15.9 .5 -8.8 .5 -.8 .5 7.1 .5 14.5 .5 20.6 .5 24.6 .5 26.6 .5 25.9 .5 22.9 .5 17.9 .5 11.1 .5 3.2 .5 -4.8 .5 -12.5 .5 -19.0 .5 -23.7 .5 -26.4 .5 -26.4 .5 -24.2 .5 -19.7 .5 -13.3 .5 -5.7 .5 2.4 .5 10.3 .5 17.3 .5 22.6 .5 26.0 .5 26.8 .5 25.3 .5 21.3 .5 15.4 .5 8.1 .5 .1 .5 -8.1 .5 -15.4 .5 -21.3 .5 -25.3 .5 -27.0 .5 -26.1 .5 -22.8 .5 -17.5 .5 -10.4 .5 -2.5 .5 5.7 .5 13.3 .5 19.9 .5 24.4 .5 26.9 .5 26.7 .5 24.1 .5 19.4 .5 12.8 .5 4.9 .5 -3.2 .5 -11.3 .5 -18.1 .5 -23.4 .5 -26.5 .5 -27.1 .5 -25.3 .5 -21.1 .5 -15.0 .5 -7.4 .5 .8 .5 9.0 .5 16.2 .5 22.2 .5 25.9 .5 27.3 .5 26.2 .5 22.7 .5 17.1 .5 9.8 .5 1.7 .5 -6.6 .5 -14.3 .5 -20.6 .5 -25.1 .5 -27.3 .5 -27.0 .5 -24.0 .5 -19.1 .5 -12.1 .5 -4.3 .5 4.2 .5 12.1 .5 19.0 .5 24.1 .5 27.0 .5 27.5 .5 25.3 .5 20.8 .5 14.4 .5 6.8 .5 -1.7 .5 -9.9 .5 -17.1 .5 -22.9 .5 -26.5 .5 -27.7 .5 -26.3 .5 -22.5 .5 -16.6 .5 -9.2 .5 -.9 .5 7.5 .5 15.2 .5 21.5 .5 25.8 .5 27.7 .5 27.1 .5 24.0 .5 18.6 .5 11.6 .5 3.4 .5 -5.0 .5 -13.1 .5 -19.8 .5 -24.9 .5 -27.5 .5 -27.7 .5 -25.2 .5 -20.6 .5 -13.9 .5 -5.9 .5 2.5 .5 10.8 .5 18.0 .5 23.7 .5 27.1 .5 28.0 .5 26.4 .5 22.2 .5 16.1 .5 8.5 .5 .0 .5 -8.4 .5 -16.0 .5 -22.3 .5 -26.4 .5 -28.2 .5 -27.2 .5 -23.9 .5 -18.2 .5 -10.9 .5 -2.6 .5 5.9 .5 14.0 .5 20.7 .5 25.5 .5 28.0 .5 27.9 .5 25.2 .5 20.2 .5 13.3 .5 5.2 .5 -3.4 .5 -11.7 .5 -18.9 .5 -24.4 .5 -27.7 .5 -28.3 .5 -26.4 .5 -22.0 .5 -15.6 .5 -7.7 .5 .8 .5 9.3 .5 17.0 .5 23.1 .5 27.0 .5 28.5 .5 27.4 .5 23.6 .5 17.8 .5 10.3 .5 1.7 .5 -6.8 .5 -14.9 .5 -21.5 .5 -26.3 .5 -28.4 .5 -28.1 .5 -25.1 .5 -19.8 .5 -12.7 .5 -4.4 .5 4.3 .5 12.7 .5 19.8 .5 25.1 .5 28.2 .5 28.6 .5 26.3 .5 21.7 .5 15.1 .5 7.0 .5 -1.7 .5 -10.3 .5 -17.9 .5 -23.9 .5 -27.6 .5 -28.9 .5 -27.4 .5 -23.4 .5 -17.3 .5 -9.6 .5 -.9 .5 7.8 .5 15.8 .5 22.4 .5 26.9 .5 28.9 .5 28.2 .5 25.0 .5 19.4 .5 12.0 .5 3.6 .5 -5.2 .5 -13.6 .5 -20.7 .5 -25.9 .5 -28.6 .5 -28.9 .5 -26.3 .5 -21.4 .5 -14.4 .5 -6.2 .5 2.6 .5 11.2 .5 18.8 .5 24.6 .5 28.3 .5 29.1 .5 27.5 .5 23.2 .5 16.8 .5 8.8 .5 .0 .5 -8.7 .5 -16.8 .5 -23.2 .5 -27.5 .5 -29.3 .5 -28.3 .5 -24.9 .5 -18.9 .5 -11.4 .5 -2.7 .5 6.1 .5 14.6 .5 21.5 .5 26.6 .5 29.2 .5 29.0 .5 26.3 .5 21.0 .5 13.9 .5 5.4 .5 -3.6 .5 -12.2 .5 -19.7 .5 -25.4 .5 -28.8 .5 -29.5 .5 -27.4 .5 -23.0 .5 -16.2 .5 -8.1 .5 .9 .5 9.7 .5 17.7 .5 24.0 .5 28.2 .5 29.7 .5 28.4 .5 24.7 .5 18.5 .5 10.6 .5 1.9 .5 -7.2 .5 -15.5 .5 -22.4 .5 -27.3 .5 -29.6 .5 -29.2 .5 -26.2 .5 -20.6 .5 -13.2 .5 -4.6 .5 4.5 .5 13.2 .5 20.6 .5 26.2 .5 29.3 .5 29.8 .5 27.4 .5 22.6 .5 15.7 .5 7.2 .5 -1.7 .5 -10.7 .5 -18.7 .5 -24.8 .5 -28.8 .5 -30.0 .5 -28.5 .5 -24.4 .5 -18.0 .5 -10.0 .5 -.9 .5 8.1 .5 16.4 .5 23.3 .5 28.0 .5 30.1 .5 29.4 .5 25.9 .5 20.3 .5 12.5 .5 3.7 .5 -5.5 .5 -14.1 .5 -21.5 .5 -26.9 .5 -29.9 .5 -30.0 .5 -27.4 .5 -22.2 .5 -15.1 .5 -6.5 .5 2.8 .5 11.7 .5 19.5 .5 25.7 .5 29.3 .5 30.4 .5 28.6 .5 24.1 .5 17.5 .5 9.1 .5 .1 .5 -9.1 .5 -17.5 .5 -24.1 .5 -28.6 .5 -30.5 .5 -29.5 .5 -25.8 .5 -19.8 .5 -11.8 .5 -2.8 .5 6.4 .5 15.1 .5 22.5 .5 27.6 .5 30.3 .5 30.2 .5 27.3 .5 21.9 .5 14.4 .5 5.6 .5 -3.7 .5 -12.6 .5 -20.5 .5 -26.5 .5 -29.9 .5 -30.7 .5 -28.5 .5 -23.8 .5 -16.9 .5 -8.4 .5 .9 .5 10.1 .5 18.4 .5 25.0 .5 29.2 .5 30.9 .5 29.6 .5 25.6 .5 19.2 .5 11.1 .5 1.9 .5 -7.4 .5 -16.1 .5 -23.3 .5 -28.4 .5 -30.8 .5 -30.3 .5 -27.2 .5 -21.4 .5 -13.8 .5 -4.7 .5 4.6 .5 13.7 .5 21.5 .5 27.2 .5 30.4 .5 30.9 .5 28.6 .5 23.4 .5 16.3 .5 7.6 .5 -1.9 .5 -11.1 .5 -19.4 .5 -25.8 .5 -29.9 .5 -31.2 .5 -29.6 .5 -25.3 .5 -18.7 .5 -10.4 .5 -.9 .5 8.4 .5 17.1 .5 24.2 .5 29.0 .5 31.3 .5 30.5 .5 27.0 .5 21.0 .5 13.0 .5 3.8 .5 -5.6 .5 -14.7 .5 -22.4 .5 -27.9 .5 -31.0 .5 -31.2 .5 -28.4 .5 -23.1 .5 -15.6 .5 -6.7 .5 2.9 .5 12.1 .5 20.3 .5 26.6 .5 30.5 .5 31.4 .5 29.6 .5 25.0 .5 18.1 .5 9.5 .5 .0 .5 -9.5 .5 -18.0 .5 -25.0 .5 -29.6 .5 -31.6 .5 -30.5 .5 -26.7 .5 -20.4 .5 -12.2 .5 -2.9 .5 6.7 .5 15.6 .5 23.2 .5 28.6 .5 31.3 .5 31.2 .5 28.2 .5 22.5 .5 14.9 .5 5.8 .5 -3.9 .5 -13.1 .5 -21.1 .5 -27.3 .5 -30.9 .5 -31.6 .5 -29.4 .5 -24.5 .5 -17.4 .5 -8.6 .5 .9 .5 10.5 .5 18.9 .5 25.7 .5 30.2 .5 31.7 .5 30.4 .5 26.4 .5 19.7 .5 11.4 .5 2.0 .5 -7.7 .5 -16.6 .5 -23.9 .5 -29.2 .5 -31.6 .5 -31.2 .5 -27.9 .5 -22.0 .5 -14.1 .5 -4.8 .5 4.8 .5 14.1 .5 21.9 .5 28.0 .5 31.2 .5 31.7 .5 29.2 .5 24.1 .5 16.7 .5 7.7 .5 -1.9 .5 -11.4 .5 -19.9 .5 -26.4 .5 -30.6 .5 -32.0 .5 -30.3 .5 -25.9 .5 -19.1 .5 -10.6 .5 -1.0 .5 8.7 .5 17.5 .5 24.7 .5 29.7 .5 31.9 .5 31.2 .5 27.6 .5 21.4 .5 13.3 .5 3.9 .5 -5.8 .5 -15.0 .5 -22.8 .5 -28.6 .5 -31.6 .5 -31.8 .5 -28.9 .5 -23.6 .5 -15.9 .5 -6.8 .5 2.9 .5 12.4 .5 20.7 .5 27.1 .5 31.0 .5 32.1 .5 30.2 .5 25.4 .5 18.4 .5 9.7 .5 .0 .5 -9.6 .5 -18.4 .5 -25.5 .5 -30.2 .5 -32.1 .5 -31.0 .5 -27.2 .5 -20.8 .5 -12.4 .5 -3.0 .5 6.8 .5 16.0 .5 23.6 .5 29.0 .5 31.9 .5 31.7 .5 28.7 .5 22.9 .5 15.2 .5 5.8 .5 -3.9 .5 -13.3 .5 -21.5 .5 -27.7 .5 -31.4 .5 -32.1 .5 -30.0 .5 -24.9 .5 -17.7 .5 -8.7 .5 1.0 .5 10.6 .5 19.2 .5 26.2 .5 30.6 .5 32.2 .5 30.9 .5 26.8 .5 20.1 .5 11.5 .5 2.0 .5 -7.8 .5 -16.8 .5 -24.4 .5 -29.6 .5 -32.1 .5 -31.6 .5 -28.3 .5 -22.4 .5 -14.2 .5 -5.0 .5 4.9 .5 14.3 .5 22.3 .5 28.3 .5 31.7 .5 32.2 .5 29.6 .5 24.4 .5 16.9 .5 7.8 .5 -1.9 .5 -11.6 .5 -20.1 .5 -26.8 .5 -31.0 .5 -32.4 .5 -30.7 .5 -26.3 .5 -19.4 .5 -10.6 .5 -1.0 .5 8.7 .5 17.8 .5 25.0 .5 30.1 .5 32.3 .5 31.6 .5 27.9 .5 21.7 .5 13.4 .5 4.0 .5 -5.9 .5 -15.2 .5 -23.1 .5 -28.9 .5 -32.0 .5 -32.1 .5 -29.4 .5 -23.8 .5 -16.1 .5 -6.9 .5 3.0 .5 12.5 .5 21.0 .5 27.4 .5 31.4 .5 32.5 .5 30.5 .5 25.8 .5 18.6 .5 9.8 .5 .0 .5 -9.8 .5 -18.6 .5 -25.8 .5 -30.5 .5 -32.5 .5 -31.5 .5 -27.5 .5 -21.0 .5 -12.6 .5 -2.9 .5 6.8 .5 16.2 .5 23.8 .5 29.5 .5 32.2 .5 32.2 .5 29.0 .5 23.2 .5 15.3 .5 5.9 .5 -3.9 .5 -13.5 .5 -21.8 .5 -28.1 .5 -31.7 .5 -32.5 .5 -30.3 .5 -25.3 .5 -17.8 .5 -8.9 .5 1.0 .5 10.7 .5 19.5 .5 26.5 .5 31.0 .5 32.6 .5 31.3 .5 27.1 .5 20.3 .5 11.7 .5 2.0 .5 -7.9 .5 -17.0 .5 -24.7 .5 -29.9 .5 -32.5 .5 -32.1 .5 -28.6 .5 -22.6 .5 -14.5 .5 -4.9 .5 4.9 .5 14.4 .5 22.6 .5 28.7 .5 32.1 .5 32.5 .5 30.0 .5 24.7 .5 17.1 .5 7.9 .5 -2.0 .5 -11.7 .5 -20.3 .5 -27.2 .5 -31.3 .5 -32.8 .5 -31.1 .5 -26.6 .5 -19.6 .5 -10.8 .5 -1.0 .5 8.9 .5 17.9 .5 25.4 .5 30.4 .5 32.7 .5 32.0 .5 28.2 .5 22.0 .5 13.6 .5 4.0 .5 -6.0 .5 -15.4 .5 -23.4 .5 -29.2 .5 -32.4 .5 -32.5 .5 -29.6 .5 -24.1 .5 -16.3 .5 -6.9 .5 3.0 .5 12.7 .5 21.1 .5 27.8 .5 31.7 .5 32.8 .5 30.8 .5 26.0 .5 18.8 .5 9.9 .5 .0 .5 -9.9 .5 -18.8 .5 -26.0 .5 -30.8 .5 -32.8 .5 -31.7 .5 -27.8 .5 -21.2 .5 -12.6 .5 -3.0 .5 6.9 .5 16.3 .5 24.1 .5 29.6 .5 32.5 .5 32.4 .5 29.2 .5 23.4 .5 15.4 .5 6.0 .5 -4.0 .5 -13.6 .5 -21.9 .5 -28.3 .5 -32.0 .5 -32.7 .5 -30.5 .5 -25.4 .5 -18.0 .5 -8.9 .5 1.0 .5 10.8 .5 19.7 .5 26.6 .5 31.2 .5 32.8 .5 31.5 .5 27.2 .5 20.4 .5 11.7 .5 2.0 .5 -7.9 .5 -17.1 .5 -24.8 .5 -30.1 .5 -32.6 .5 -32.2 .5 -28.8 .5 -22.7 .5 -14.5 .5 -5.0 .5 5.0 .5 14.5 .5 22.7 .5 28.8 .5 32.2 .5 32.6 .5 30.1 .5 24.8 .5 17.1 .5 8.0 .5 -2.0 .5 -11.8 .5 -20.4 .5 -27.2 .5 -31.5 .5 -32.9 .5 -31.1 .5 -26.7 .5 -19.6 .5 -10.8 .5 -1.0 .5 8.9 .5 18.0 .5 25.4 .5 30.5 .5 32.7 .5 32.0 .5 28.3 .5 22.0 .5 13.6 .5 4.0 .5 -6.0 .5 -15.4 .5 -23.4 .5 -29.3 .5 -32.4 .5 -32.5 .5 -29.7 .5 -24.1 .5 -16.3 .5 -7.0 .5 3.0 .5 12.7 .5 21.2 .5 27.8 .5 31.8 .5 32.8 .5 30.9 .5 26.0 .5 18.9 .5 9.8 .5 .0 .5 -9.8 .5 -18.9 .5 -26.0 .5 -30.9 .5 -32.8 .5 -31.8 .5 -27.8 .5 -21.2 .5 -12.7 .5 -3.0 .5 7.0 .5 16.3 .5 24.1 .5 29.7 .5 32.5 .5 32.5 .5 29.2 .5 23.4 .5 15.4 .5 6.0 .5 -4.0 .5 -13.6 .5 -22.0 .5 -28.3 .5 -32.0 .5 -32.7 .5 -30.5 .5 -25.4 .5 -18.0 .5 -8.9 .5 1.0 .5 10.8 .5 19.6 .5 26.7 .5 31.2 .5 32.8 .5 31.5 .5 27.2 .5 20.4 .5 11.7 .5 2.0 .5 -7.9 .5 -17.2 .5 -24.7 .5 -30.1 .5 -32.6 .5 -32.2 .5 -28.8 .5 -22.6 .5 -14.5 .5 -5.0 .5 5.0 .5 14.5 .5 22.6 .5 28.8 .5 32.2 .5 32.6 .5 30.1 .5 24.7 .5 17.1 .5 7.9 .5 -2.0 .5 -11.7 .5 -20.4 .5 -27.2 .5 -31.4 .5 -32.8 .5 -31.2 .5 -26.5 .5 -19.6 .5 -10.8 .5 -1.0 .5 8.9 .5 17.9 .5 25.4 .5 30.4 .5 32.7 .5 31.9 .5 28.3 .5 21.9 .5 13.5 .5 4.0 .5 -5.9 .5 -15.4 .5 -23.4 .5 -29.1 .5 -32.4 .5 -32.4 .5 -29.6 .5 -24.1 .5 -16.2 .5 -6.9 .5 3.0 .5 12.6 .5 21.2 .5 27.6 .5 31.7 .5 32.7 .5 30.8 .5 25.9 .5 18.8 .5 9.8 .5 .0 .5 -9.8 .5 -18.8 .5 -25.9 .5 -30.8 .5 -32.7 .5 -31.6 .5 -27.7 .5 -21.1 .5 -12.7 .5 -2.9 .5 6.9 .5 16.2 .5 24.0 .5 29.6 .5 32.4 .5 32.3 .5 29.1 .5 23.4 .5 15.3 .5 5.9 .5 -3.9 .5 -13.6 .5 -21.9 .5 -28.1 .5 -31.9 .5 -32.6 .5 -30.4 .5 -25.3 .5 -17.9 .5 -8.8 .5 1.0 .5 10.7 .5 19.6 .5 26.5 .5 31.0 .5 32.7 .5 31.4 .5 27.0 .5 20.4 .5 11.7 .5 1.9 .5 -7.9 .5 -17.0 .5 -24.7 .5 -29.9 .5 -32.5 .5 -32.1 .5 -28.6 .5 -22.6 .5 -14.4 .5 -4.9 .5 4.9 .5 14.5 .5 22.5 .5 28.7 .5 32.0 .5 32.5 .5 29.9 .5 24.6 .5 17.1 .5 7.9 .5 -2.0 .5 -11.7 .5 -20.3 .5 -27.1 .5 -31.3 .5 -32.6 .5 -31.0 .5 -26.5 .5 -19.5 .5 -10.8 .5 -1.0 .5 8.9 .5 17.9 .5 25.2 .5 30.3 .5 32.6 .5 31.8 .5 28.1 .5 21.8 .5 13.5 .5 4.0 .5 -6.0 .5 -15.3 .5 -23.2 .5 -29.1 .5 -32.2 .5 -32.3 .5 -29.5 .5 -23.9 .5 -16.2 .5 -6.9 .5 3.0 .5 12.6 .5 21.1 .5 27.5 .5 31.6 .5 32.5 .5 30.7 .5 25.8 .5 18.7 .5 9.8 .5 .0 .5 -9.8 .5 -18.7 .5 -25.9 .5 -30.6 .5 -32.5 .5 -31.5 .5 -27.6 .5 -21.0 .5 -12.6 .5 -3.0 .5 6.9 .5 16.2 .5 23.9 .5 29.5 .5 32.2 .5 32.2 .5 29.0 .5 23.2 .5 15.2 .5 6.0 .5 -4.0 .5 -13.5 .5 -21.8 .5 -28.0 .5 -31.7 .5 -32.5 .5 -30.2 .5 -25.2 .5 -17.9 .5 -8.8 .5 1.0 .5 10.7 .5 19.5 .5 26.4 .5 30.9 .5 32.6 .5 31.2 .5 26.9 .5 20.2 .5 11.7 .5 2.0 .5 -7.9 .5 -17.0 .5 -24.5 .5 -29.8 .5 -32.4 .5 -31.9 .5 -28.5 .5 -22.5 .5 -14.3 .5 -5.0 .5 5.0 .5 14.3 .5 22.5 .5 28.5 .5 31.9 .5 32.3 .5 29.8 .5 24.6 .5 16.9 .5 7.9 .5 -2.0 .5 -11.6 .5 -20.3 .5 -26.9 .5 -31.2 .5 -32.5 .5 -30.8 .5 -26.4 .5 -19.4 .5 -10.7 .5 -1.0 .5 8.8 .5 17.8 .5 25.2 .5 30.2 .5 32.3 .5 31.7 .5 27.9 .5 21.7 .5 13.5 .5 3.9 .5 -5.9 .5 -15.2 .5 -23.2 .5 -28.9 .5 -32.0 .5 -32.1 .5 -29.4 .5 -23.8 .5 -16.0 .5 -6.9 .5 3.0 .5 12.5 .5 20.9 .5 27.5 .5 31.3 .5 32.4 .5 30.5 .5 25.7 .5 18.6 .5 9.7 .5 .0 .5 -9.8 .5 -18.5 .5 -25.7 .5 -30.5 .5 -32.4 .5 -31.3 .5 -27.4 .5 -20.9 .5 -12.5 .5 -3.0 .5 6.9 .5 16.1 .5 23.8 .5 29.2 .5 32.1 .5 32.0 .5 28.8 .5 23.1 .5 15.1 .5 5.9 .5 -3.9 .5 -13.4 .5 -21.7 .5 -27.9 .5 -31.5 .5 -32.3 .5 -30.0 .5 -25.0 .5 -17.7 .5 -8.8 .5 1.0 .5 10.6 .5 19.4 .5 26.2 .5 30.7 .5 32.4 .5 31.0 .5 26.7 .5 20.1 .5 11.6 .5 2.0 .5 -7.8 .5 -16.9 .5 -24.4 .5 -29.6 .5 -32.2 .5 -31.7 .5 -28.3 .5 -22.3 .5 -14.2 .5 -4.9 .5 4.9 .5 14.2 .5 22.4 .5 28.3 .5 31.6 .5 32.2 .5 29.5 .5 24.4 .5 16.8 .5 7.8 .5 -1.9 .5 -11.6 .5 -20.1 .5 -26.7 .5 -31.0 .5 -32.2 .5 -30.7 .5 -26.1 .5 -19.3 .5 -10.6 .5 -1.0 .5 8.8 .5 17.6 .5 25.0 .5 29.9 .5 32.2 .5 31.4 .5 27.8 .5 21.5 .5 13.3 .5 4.0 .5 -5.9 .5 -15.1 .5 -23.0 .5 -28.7 .5 -31.8 .5 -31.9 .5 -29.1 .5 -23.7 .5 -15.9 .5 -6.8 .5 2.9 .5 12.5 .5 20.8 .5 27.2 .5 31.1 .5 32.2 .5 30.2 .5 25.5 .5 18.5 .5 9.6 .5 .0 .5 -9.6 .5 -18.5 .5 -25.5 .5 -30.2 .5 -32.2 .5 -31.1 .5 -27.2 .5 -20.7 .5 -12.5 .5 -2.9 .5 6.8 .5 16.0 .5 23.6 .5 29.1 .5 31.8 .5 31.7 .5 28.6 .5 22.9 .5 15.1 .5 5.9 .5 -4.0 .5 -13.3 .5 -21.5 .5 -27.6 .5 -31.3 .5 -32.1 .5 -29.8 .5 -24.9 .5 -17.5 .5 -8.7 .5 .9 .5 10.6 .5 19.2 .5 26.1 .5 30.5 .5 32.1 .5 30.7 .5 26.6 .5 20.0 .5 11.5 .5 1.9 .5 -7.8 .5 -16.7 .5 -24.2 .5 -29.4 .5 -31.9 .5 -31.5 .5 -28.1 .5 -22.1 .5 -14.2 .5 -4.9 .5 4.9 .5 14.2 .5 22.1 .5 28.1 .5 31.5 .5 31.9 .5 29.3 .5 24.2 .5 16.7 .5 7.8 .5 -2.0 .5 -11.5 .5 -19.9 .5 -26.6 .5 -30.7 .5 -32.0 .5 -30.4 .5 -26.0 .5 -19.1 .5 -10.6 .5 -.9 .5 8.7 .5 17.5 .5 24.8 .5 29.7 .5 31.9 .5 31.2 .5 27.6 .5 21.4 .5 13.2 .5 3.9 .5 -5.8 .5 -15.0 .5 -22.9 .5 -28.4 .5 -31.6 .5 -31.7 .5 -28.9 .5 -23.5 .5 -15.8 .5 -6.8 .5 3.0 .5 12.3 .5 20.7 .5 27.0 .5 30.9 .5 31.9 .5 30.0 .5 25.4 .5 18.3 .5 9.6 .5 .0 .5 -9.6 .5 -18.4 .5 -25.3 .5 -30.0 .5 -31.9 .5 -30.9 .5 -27.0 .5 -20.6 .5 -12.3 .5 -2.9 .5 6.8 .5 15.8 .5 23.4 .5 28.9 .5 31.6 .5 31.5 .5 28.4 .5 22.7 .5 15.0 .5 5.8 .5 -3.9 .5 -13.2 .5 -21.4 .5 -27.4 .5 -31.1 .5 -31.8 .5 -29.6 .5 -24.7 .5 -17.4 .5 -8.7 .5 1.0 .5 10.5 .5 19.1 .5 25.8 .5 30.3 .5 31.9 .5 30.5 .5 26.4 .5 19.8 .5 11.4 .5 1.9 .5 -7.7 .5 -16.6 .5 -24.0 .5 -29.2 .5 -31.7 .5 -31.2 .5 -27.9 .5 -22.0 .5 -14.1 .5 -4.8 .5 4.8 .5 14.1 .5 22.0 .5 27.9 .5 31.2 .5 31.7 .5 29.1 .5 24.0 .5 16.6 .5 7.7 .5 -2.0 .5 -11.4 .5 -19.7 .5 -26.4 .5 -30.5 .5 -31.8 .5 -30.2 .5 -25.7 .5 -19.0 .5 -10.5 .5 -1.0 .5 8.7 .5 17.4 .5 24.6 .5 29.5 .5 31.7 .5 30.9 .5 27.4 .5 21.2 .5 13.2 .5 3.8 .5 -5.8 .5 -14.9 .5 -22.6 .5 -28.3 .5 -31.3 .5 -31.5 .5 -28.7 .5 -23.3 .5 -15.7 .5 -6.7 .5 2.9 .5 12.3 .5 20.5 .5 26.8 .5 30.7 .5 31.7 .5 29.8 .5 25.1 .5 18.2 .5 9.5 .5 .0 .5 -9.5 .5 -18.2 .5 -25.2 .5 -29.7 .5 -31.7 .5 -30.7 .5 -26.8 .5 -20.4 .5 -12.3 .5 -2.8 .5 6.7 .5 15.7 .5 23.3 .5 28.6 .5 31.4 .5 31.2 .5 28.2 .5 22.6 .5 14.9 .5 5.7 .5 -3.8 .5 -13.2 .5 -21.1 .5 -27.3 .5 -30.9 .5 -31.5 .5 -29.4 .5 -24.5 .5 -17.3 .5 -8.6 .5 1.0 .5 10.4 .5 18.9 .5 25.7 .5 30.0 .5 31.6 .5 30.4 .5 26.2 .5 19.6 .5 11.3 .5 2.0 .5 -7.7 .5 -16.5" stroke="#ff0000" stroke-width="2.0" fill="none" stroke-linejoin="round"/><path d="M348.0 513.7l.5 29.7 .5 30.7 .5 29.2 .5 24.7 .5 18.1 .5 9.8 .5 .6 .5 -8.7 .5 -17.2 .5 -24.1 .5 -28.7 .5 -30.8 .5 -29.9 .5 -26.3 .5 -20.3 .5 -12.4 .5 -3.4 .5 6.0 .5 14.7 .5 22.3 .5 27.6 .5 30.4 .5 30.5 .5 27.6 .5 22.4 .5 14.9 .5 6.2 .5 -3.2 .5 -12.3 .5 -20.1 .5 -26.3 .5 -29.8 .5 -30.8 .5 -28.8 .5 -24.2 .5 -17.3 .5 -8.9 .5 .4 .5 9.6 .5 17.9 .5 24.7 .5 29.0 .5 30.8 .5 29.7 .5 25.8 .5 19.6 .5 11.6 .5 2.4 .5 -6.9 .5 -15.6 .5 -22.8 .5 -28.0 .5 -30.6 .5 -30.3 .5 -27.2 .5 -21.7 .5 -14.1 .5 -5.3 .5 4.1 .5 13.1 .5 20.9 .5 26.7 .5 30.1 .5 30.7 .5 28.5 .5 23.5 .5 16.6 .5 8.0 .5 -1.3 .5 -10.5 .5 -18.7 .5 -25.2 .5 -29.4 .5 -30.8 .5 -29.4 .5 -25.3 .5 -18.9 .5 -10.7 .5 -1.5 .5 7.9 .5 16.3 .5 23.5 .5 28.4 .5 30.7 .5 30.1 .5 26.8 .5 21.0 .5 13.3 .5 4.3 .5 -5.1 .5 -13.9 .5 -21.6 .5 -27.1 .5 -30.3 .5 -30.6 .5 -28.1 .5 -22.9 .5 -15.8 .5 -7.1 .5 2.3 .5 11.3 .5 19.5 .5 25.7 .5 29.7 .5 30.7 .5 29.2 .5 24.7 .5 18.1 .5 9.8 .5 .6 .5 -8.7 .5 -17.2 .5 -24.1 .5 -28.7 .5 -30.8 .5 -29.9 .5 -26.3 .5 -20.3 .5 -12.4 .5 -3.4 .5 6.0 .5 14.7 .5 22.3 .5 27.6 .5 30.4 .5 30.5 .5 27.6 .5 22.4 .5 14.9 .5 6.2 .5 -3.2 .5 -12.3 .5 -20.1 .5 -26.3 .5 -29.8 .5 -30.8 .5 -28.8 .5 -24.2 .5 -17.3 .5 -8.9 .5 .4 .5 9.6 .5 17.9 .5 24.7 .5 29.0 .5 30.8 .5 29.7 .5 25.8 .5 19.6 .5 11.6 .5 2.4 .5 -6.9 .5 -15.6 .5 -22.8 .5 -28.0 .5 -30.6 .5 -30.3 .5 -27.2 .5 -21.7 .5 -14.1 .5 -5.3 .5 4.1 .5 13.1 .5 20.9 .5 26.7 .5 30.1 .5 30.7 .5 28.5 .5 23.5 .5 16.6 .5 8.0 .5 -1.3 .5 -10.5 .5 -18.7 .5 -25.2 .5 -29.4 .5 -30.8 .5 -29.4 .5 -25.3 .5 -18.9 .5 -10.7 .5 -1.5 .5 7.9 .5 16.3 .5 23.5 .5 28.4 .5 30.7 .5 30.1 .5 26.8 .5 21.0 .5 13.3 .5 4.3 .5 -5.1 .5 -13.9 .5 -21.6 .5 -27.1 .5 -30.3 .5 -30.6 .5 -28.1 .5 -22.9 .5 -15.8 .5 -7.1 .5 2.3 .5 11.3 .5 19.5 .5 25.7 .5 29.7 .5 30.7 .5 29.2 .5 24.7 .5 18.1 .5 9.8 .5 .6 .5 -8.7 .5 -17.2 .5 -24.1 .5 -28.7 .5 -30.8 .5 -29.9 .5 -26.3 .5 -20.3 .5 -12.4 .5 -3.4 .5 6.0 .5 14.7 .5 22.3 .5 27.6 .5 30.4 .5 30.5 .5 27.6 .5 22.4 .5 14.9 .5 6.2 .5 -3.2 .5 -12.3 .5 -20.1 .5 -26.3 .5 -29.8 .5 -30.8 .5 -28.8 .5 -24.2 .5 -17.3 .5 -8.9 .5 .4 .5 9.6 .5 17.9 .5 24.7 .5 29.0 .5 30.8 .5 29.7 .5 25.8 .5 19.6 .5 11.6 .5 2.4 .5 -6.9 .5 -15.6 .5 -22.8 .5 -28.0 .5 -30.6 .5 -30.3 .5 -27.2 .5 -21.7 .5 -14.1 .5 -5.3 .5 4.1 .5 13.1 .5 20.9 .5 26.7 .5 30.1 .5 30.7 .5 28.5 .5 23.5 .5 16.6 .5 8.0 .5 -1.3 .5 -10.5 .5 -18.7 .5 -25.2 .5 -29.4 .5 -30.8 .5 -29.4 .5 -25.3 .5 -18.9 .5 -10.7 .5 -1.5 .5 7.9 .5 16.3 .5 23.5 .5 28.4 .5 30.7 .5 30.1 .5 26.8 .5 21.0 .5 13.3 .5 4.3 .5 -5.1 .5 -13.9 .5 -21.6 .5 -27.1 .5 -30.3 .5 -30.6 .5 -28.1 .5 -22.9 .5 -15.8 .5 -7.1 .5 2.3 .5 11.3 .5 19.5 .5 25.7 .5 29.7 .5 30.7 .5 29.2 .5 24.7 .5 18.1 .5 9.8 .5 .6 .5 -8.7 .5 -17.2 .5 -24.1 .5 -28.7 .5 -30.8 .5 -29.9 .5 -26.3 .5 -20.3 .5 -12.4 .5 -3.4 .5 6.0 .5 14.7 .5 22.3 .5 27.6 .5 30.4 .5 30.5 .5 27.6 .5 22.4 .5 14.9 .5 6.2 .5 -3.2 .5 -12.3 .5 -20.1 .5 -26.3 .5 -29.8 .5 -30.8 .5 -28.8 .5 -24.2 .5 -17.3 .5 -8.9 .5 .4 .5 9.6 .5 17.9 .5 24.7 .5 29.0 .5 30.8 .5 29.7 .5 25.8 .5 19.6 .5 11.6 .5 2.4 .5 -6.9 .5 -15.6 .5 -22.8 .5 -28.0 .5 -30.6 .5 -30.3 .5 -27.2 .5 -21.7 .5 -14.1 .5 -5.3 .5 4.1 .5 13.1 .5 20.9 .5 26.7 .5 30.1 .5 30.7 .5 28.5 .5 23.5 .5 16.6 .5 8.0 .5 -1.3 .5 -10.5 .5 -18.7 .5 -25.2 .5 -29.4 .5 -30.8 .5 -29.4 .5 -25.3 .5 -18.9 .5 -10.7 .5 -1.5 .5 7.9 .5 16.3 .5 23.5 .5 28.4 .5 30.7 .5 30.1 .5 26.8 .5 21.0 .5 13.3 .5 4.3 .5 -5.1 .5 -13.9 .5 -21.6 .5 -27.1 .5 -30.3 .5 -30.6 .5 -28.1 .5 -22.9 .5 -15.8 .5 -7.1 .5 2.3 .5 11.3 .5 19.5 .5 25.7 .5 29.7 .5 30.7 .5 29.2 .5 24.7 .5 18.1 .5 9.8 .5 .6 .5 -8.7 .5 -17.2 .5 -24.1 .5 -28.7 .5 -30.8 .5 -29.9 .5 -26.3 .5 -20.3 .5 -12.4 .5 -3.4 .5 6.0 .5 14.7 .5 22.3 .5 27.6 .5 30.4 .5 30.5 .5 27.6 .5 22.4 .5 14.9 .5 6.2 .5 -3.2 .5 -12.3 .5 -20.1 .5 -26.3 .5 -29.8 .5 -30.8 .5 -28.8 .5 -24.2 .5 -17.3 .5 -8.9 .5 .4 .5 9.6 .5 17.9 .5 24.7 .5 29.0 .5 30.8 .5 29.7 .5 25.8 .5 19.6 .5 11.6 .5 2.4 .5 -6.9 .5 -15.6 .5 -22.8 .5 -28.0 .5 -30.6 .5 -30.3 .5 -27.2 .5 -21.7 .5 -14.1 .5 -5.3 .5 4.1 .5 13.1 .5 20.9 .5 26.7 .5 30.1 .5 30.7 .5 28.5 .5 23.5 .5 16.6 .5 8.0 .5 -1.3 .5 -10.5 .5 -18.7 .5 -25.2 .5 -29.4 .5 -30.8 .5 -29.4 .5 -25.3 .5 -18.9 .5 -10.7 .5 -1.5 .5 7.9 .5 16.3 .5 23.5 .5 28.4 .5 30.7 .5 30.1 .5 26.8 .5 21.0 .5 13.3 .5 4.3 .5 -5.1 .5 -13.9 .5 -21.6 .5 -27.1 .5 -30.3 .5 -30.6 .5 -28.1 .5 -22.9 .5 -15.8 .5 -7.1 .5 2.3 .5 11.3 .5 19.5 .5 25.7 .5 29.7 .5 30.7 .5 29.2 .5 24.7 .5 18.1 .5 9.8 .5 .6 .5 -8.7 .5 -17.2 .5 -24.1 .5 -28.7 .5 -30.8 .5 -29.9 .5 -26.3 .5 -20.3 .5 -12.4 .5 -3.4 .5 6.0 .5 14.7 .5 22.3 .5 27.6 .5 30.4 .5 30.5 .5 27.6 .5 22.4 .5 14.9 .5 6.2 .5 -3.2 .5 -12.3 .5 -20.1 .5 -26.3 .5 -29.8 .5 -30.8 .5 -28.8 .5 -24.2 .5 -17.3 .5 -8.9 .5 .4 .5 9.6 .5 17.9 .5 24.7 .5 29.0 .5 30.8 .5 29.7 .5 25.8 .5 19.6 .5 11.6 .5 2.4 .5 -6.9 .5 -15.6 .5 -22.8 .5 -28.0 .5 -30.6 .5 -30.3 .5 -27.2 .5 -21.7 .5 -14.1 .5 -5.3 .5 4.1 .5 13.1 .5 20.9 .5 26.7 .5 30.1 .5 30.7 .5 28.5 .5 23.5 .5 16.6 .5 8.0 .5 -1.3 .5 -10.5 .5 -18.7 .5 -25.2 .5 -29.4 .5 -30.8 .5 -29.4 .5 -25.3 .5 -18.9 .5 -10.7 .5 -1.5 .5 7.9 .5 16.3 .5 23.5 .5 28.4 .5 30.7 .5 30.1 .5 26.8 .5 21.0 .5 13.3 .5 4.3 .5 -5.1 .5 -13.9 .5 -21.6 .5 -27.1 .5 -30.3 .5 -30.6 .5 -28.1 .5 -22.9 .5 -15.8 .5 -7.1 .5 2.3 .5 11.3 .5 19.5 .5 25.7 .5 29.7 .5 30.7 .5 29.2 .5 24.7 .5 18.1 .5 9.8 .5 .6 .5 -8.7 .5 -17.2 .5 -24.1 .5 -28.7 .5 -30.8 .5 -29.9 .5 -26.3 .5 -20.3 .5 -12.4 .5 -3.4 .5 6.0 .5 14.7 .5 22.3 .5 27.6 .5 30.4 .5 30.5 .5 27.6 .5 22.4 .5 14.9 .5 6.2 .5 -3.2 .5 -12.3 .5 -20.1 .5 -26.3 .5 -29.8 .5 -30.8 .5 -28.8 .5 -24.2 .5 -17.3 .5 -8.9 .5 .4 .5 9.6 .5 17.9 .5 24.7 .5 29.0 .5 30.8 .5 29.7 .5 25.8 .5 19.6 .5 11.6 .5 2.4 .5 -6.9 .5 -15.6 .5 -22.8 .5 -28.0 .5 -30.6 .5 -30.3 .5 -27.2 .5 -21.7 .5 -14.1 .5 -5.3 .5 4.1 .5 13.1 .5 20.9 .5 26.7 .5 30.1 .5 30.7 .5 28.5 .5 23.5 .5 16.6 .5 8.0 .5 -1.3 .5 -10.5 .5 -18.7 .5 -25.2 .5 -29.4 .5 -30.8 .5 -29.4 .5 -25.3 .5 -18.9 .5 -10.7 .5 -1.5 .5 7.9 .5 16.3 .5 23.5 .5 28.4 .5 30.7 .5 30.1 .5 26.8 .5 21.0 .5 13.3 .5 4.3 .5 -5.1 .5 -13.9 .5 -21.6 .5 -27.1 .5 -30.3 .5 -30.6 .5 -28.1 .5 -22.9 .5 -15.8 .5 -7.1 .5 2.3 .5 11.3 .5 19.5 .5 25.7 .5 29.7 .5 30.7 .5 29.2 .5 24.7 .5 18.1 .5 9.8 .5 .6 .5 -8.7 .5 -17.2 .5 -24.1 .5 -28.7 .5 -30.8 .5 -29.9 .5 -26.3 .5 -20.3 .5 -12.4 .5 -3.4 .5 6.0 .5 14.7 .5 22.3 .5 27.6 .5 30.4 .5 30.5 .5 27.6 .5 22.4 .5 14.9 .5 6.2 .5 -3.2 .5 -12.3 .5 -20.1 .5 -26.3 .5 -29.8 .5 -30.8 .5 -28.8 .5 -24.2 .5 -17.3 .5 -8.9 .5 .4 .5 9.6 .5 17.9 .5 24.7 .5 29.0 .5 30.8 .5 29.7 .5 25.8 .5 19.6 .5 11.6 .5 2.4 .5 -6.9 .5 -15.6 .5 -22.8 .5 -28.0 .5 -30.6 .5 -30.3 .5 -27.2 .5 -21.7 .5 -14.1 .5 -5.3 .5 4.1 .5 13.1 .5 20.9 .5 26.7 .5 30.1 .5 30.7 .5 28.5 .5 23.5 .5 16.6 .5 8.0 .5 -1.3 .5 -10.5 .5 -18.7 .5 -25.2 .5 -29.4 .5 -30.8 .5 -29.4 .5 -25.3 .5 -18.9 .5 -10.7 .5 -1.5 .5 7.9 .5 16.3 .5 23.5 .5 28.4 .5 30.7 .5 30.1 .5 26.8 .5 21.0 .5 13.3 .5 4.3 .5 -5.1 .5 -13.9 .5 -21.6 .5 -27.1 .5 -30.3 .5 -30.6 .5 -28.1 .5 -22.9 .5 -15.8 .5 -7.1 .5 2.3 .5 11.3 .5 19.5 .5 25.7 .5 29.7 .5 30.7 .5 29.2 .5 24.7 .5 18.1 .5 9.8 .5 .6 .5 -8.7 .5 -17.2 .5 -24.1 .5 -28.7 .5 -30.8 .5 -29.9 .5 -26.3 .5 -20.3 .5 -12.4 .5 -3.4 .5 6.0 .5 14.7 .5 22.3 .5 27.6 .5 30.4 .5 30.5 .5 27.6 .5 22.4 .5 14.9 .5 6.2 .5 -3.2 .5 -12.3 .5 -20.1 .5 -26.3 .5 -29.8 .5 -30.8 .5 -28.8 .5 -24.2 .5 -17.3 .5 -8.9 .5 .4 .5 9.6 .5 17.9 .5 24.7 .5 29.0 .5 30.8 .5 29.7 .5 25.8 .5 19.6 .5 11.6 .5 2.4 .5 -6.9 .5 -15.6 .5 -22.8 .5 -28.0 .5 -30.6 .5 -30.3 .5 -27.2 .5 -21.7 .5 -14.1 .5 -5.3 .5 4.1 .5 13.1 .5 20.9 .5 26.7 .5 30.1 .5 30.7 .5 28.5 .5 23.5 .5 16.6 .5 8.0 .5 -1.3 .5 -10.5 .5 -18.7 .5 -25.2 .5 -29.4 .5 -30.8 .5 -29.4 .5 -25.3 .5 -18.9 .5 -10.7 .5 -1.5 .5 7.9 .5 16.3 .5 23.5 .5 28.4 .5 30.7 .5 30.1 .5 26.8 .5 21.0 .5 13.3 .5 4.3 .5 -5.1 .5 -13.9 .5 -21.6 .5 -27.1 .5 -30.3 .5 -30.6 .5 -28.1 .5 -22.9 .5 -15.8 .5 -7.1 .5 2.3 .5 11.3 .5 19.5 .5 25.7 .5 29.7 .5 30.7 .5 29.2 .5 24.7 .5 18.1 .5 9.8 .5 .6 .5 -8.7 .5 -17.2 .5 -24.1 .5 -28.7 .5 -30.8 .5 -29.9 .5 -26.3 .5 -20.3 .5 -12.4 .5 -3.4 .5 6.0 .5 14.7 .5 22.3 .5 27.6 .5 30.4 .5 30.5 .5 27.6 .5 22.4 .5 14.9 .5 6.2 .5 -3.2 .5 -12.3 .5 -20.1 .5 -26.3 .5 -29.8 .5 -30.8 .5 -28.8 .5 -24.2 .5 -17.3 .5 -8.9 .5 .4 .5 9.6 .5 17.9 .5 24.7 .5 29.0 .5 30.8 .5 29.7 .5 25.8 .5 19.6 .5 11.6 .5 2.4 .5 -6.9 .5 -15.6 .5 -22.8 .5 -28.0 .5 -30.6 .5 -30.3 .5 -27.2 .5 -21.7 .5 -14.1 .5 -5.3 .5 4.1 .5 13.1 .5 20.9 .5 29.2 .5 28.5 .5 24.9 .5 19.0 .5 12.0 .5 4.6 .5 -2.2 .5 -7.6 .5 -10.9 .5 -12.0 .5 -11.1 .5 -8.3 .5 -5.5 .5 -5.1 .5 -4.4 .5 -3.1 .5 -1.8 .5 -.1 .5 1.4 .5 2.9 .5 4.0 .5 4.8 .5 5.1 .5 4.9 .5 4.3 .5 3.3 .5 2.1 .5 .5 .5 -.9 .5 -2.3 .5 -3.4 .5 -4.3 .5 -4.7 .5 -4.6 .5 -4.2 .5 -3.4 .5 -2.3 .5 -.9 .5 .4 .5 1.8 .5 2.9 .5 3.8 .5 4.2 .5 4.4 .5 4.0 .5 3.4 .5 2.4 .5 1.2 .5 -.1 .5 -1.2 .5 -2.4 .5 -3.3 .5 -3.8 .5 -4.0 .5 -3.8 .5 -3.3 .5 -2.4 .5 -1.5 .5 -.3 .5 .9 .5 1.9 .5 2.7 .5 3.4 .5 3.6 .5 3.5 .5 3.2 .5 2.4 .5 1.6 .5 .6 .5 -.5 .5 -1.4 .5 -2.3 .5 -2.9 .5 -3.2 .5 -3.2 .5 -3.0 .5 -2.4 .5 -1.8 .5 -.8 .5 .1 .5 1.0 .5 1.9 .5 2.4 .5 2.9 .5 3.1 .5 2.9 .5 2.4 .5 1.9 .5 1.0 .5 .2 .5 -.7 .5 -1.5 .5 -2.2 .5 -2.6 .5 -2.9 .5 -2.7 .5 -2.5 .5 -1.9 .5 -1.2 .5 -.4 .5 .4 .5 1.2 .5 1.9 .5 2.3 .5 2.6 .5 2.7 .5 2.4 .5 1.9 .5 1.4 .5 .6 .5 -.2 .5 -.9 .5 -1.6 .5 -2.1 .5 -2.3 .5 -2.5 .5 -2.3 .5 -2.0 .5 -1.4 .5 -.8 .5 .0 .5 .6 .5 1.3 .5 1.8 .5 2.2 .5 2.2 .5 2.2 .5 1.9 .5 1.5 .5 .9 .5 .2 .5 -.4 .5 -1.0 .5 -1.5 .5 -1.9 .5 -2.1 .5 -2.0 .5 -1.9 .5 -1.4 .5 -1.0 .5 -.4 .5 .2 .5 .8 .5 1.2 .5 1.7 .5 1.8 .5 1.9 .5 1.7 .5 1.5 .5 1.0 .5 .5 .5 .0 .5 -.5 .5 -1.1 .5 -1.4 .5 -1.6 .5 -1.7 .5 -1.6 .5 -19.6 .5 -30.6 .5 -7.5 .5 -2.0 .5 3.7 .5 9.1 .5 13.6 .5 16.8 .5 18.4 .5 18.6 .5 17.1 .5 13.9 .5 9.5 .5 4.0 .5 -1.7 .5 -7.4 .5 -12.5 .5 -16.4 .5 -18.8 .5 -19.6 .5 -18.4 .5 -15.6 .5 -11.4 .5 -6.0 .5 .0 .5 6.0 .5 11.6 .5 15.9 .5 19.1 .5 20.2 .5 19.6 .5 17.1 .5 13.0 .5 7.7 .5 1.7 .5 -4.5 .5 -10.2 .5 -15.2 .5 -18.6 .5 -20.4 .5 -20.2 .5 -18.3 .5 -14.6 .5 -9.6 .5 -3.6 .5 2.7 .5 8.7 .5 14.0 .5 18.1 .5 20.3 .5 20.8 .5 19.4 .5 16.1 .5 11.3 .5 5.6 .5 -.8 .5 -7.1 .5 -12.7 .5 -17.3 .5 -20.1 .5 -21.2 .5 -20.3 .5 -17.5 .5 -13.1 .5 -7.5 .5 -1.1 .5 5.3 .5 11.3 .5 16.3 .5 19.7 .5 21.4 .5 21.1 .5 18.8 .5 14.8 .5 9.4 .5 3.1 .5 -3.5 .5 -9.7 .5 -15.2 .5 -19.1 .5 -21.4 .5 -21.6 .5 -19.9 .5 -16.3 .5 -11.2 .5 -5.0 .5 1.5 .5 8.1 .5 13.7 .5 18.3 .5 21.0 .5 21.9 .5 20.7 .5 17.7 .5 12.9 .5 7.0 .5 .5 .5 -6.2 .5 -12.2 .5 -17.2 .5 -20.5 .5 -22.0 .5 -21.4 .5 -18.9 .5 -14.6 .5 -8.9 .5 -2.5 .5 4.2 .5 10.6 .5 16.0 .5 19.8 .5 21.9 .5 21.9 .5 20.0 .5 16.1 .5 10.8 .5 4.5 .5 -2.2 .5 -8.8 .5 -14.6 .5 -19.0 .5 -21.6 .5 -22.2 .5 -20.9 .5 -17.6 .5 -12.6 .5 -6.5 .5 .2 .5 7.0 .5 13.0 .5 17.9 .5 21.1 .5 22.5 .5 21.6 .5 18.9 .5 14.3 .5 8.5 .5 1.8 .5 -5.0 .5 -11.3 .5 -16.7 .5 -20.5 .5 -22.4 .5 -22.3 .5 -20.0 .5 -16.0 .5 -10.4 .5 -3.9 .5 3.0 .5 9.6 .5 15.4 .5 19.6 .5 22.2 .5 22.7 .5 21.0 .5 17.4 .5 12.3 .5 5.9 .5 -.9 .5 -7.7 .5 -13.8 .5 -18.7 .5 -21.7 .5 -22.9 .5 -21.9 .5 -18.8 .5 -14.0 .5 -8.0 .5 -1.2 .5 5.8 .5 12.2 .5 17.4 .5 21.2 .5 22.9 .5 22.5 .5 20.1 .5 15.7 .5 10.0 .5 3.2 .5 -3.7 .5 -10.4 .5 -16.1 .5 -20.4 .5 -22.7 .5 -23.0 .5 -21.2 .5 -17.3 .5 -11.9 .5 -5.4 .5 1.7 .5 8.5 .5 14.7 .5 19.4 .5 22.3 .5 23.3 .5 22.1 .5 18.7 .5 13.8 .5 7.4 .5 .5 .5 -6.6 .5 -13.0 .5 -18.2 .5 -21.8 .5 -23.4 .5 -22.8 .5 -20.0 .5 -15.5 .5 -9.6 .5 -2.6 .5 4.5 .5 11.3 .5 16.9 .5 21.1 .5 23.3 .5 23.3 .5 21.2 .5 17.1 .5 11.5 .5 4.8 .5 -2.4 .5 -9.4 .5 -15.4 .5 -20.2 .5 -22.9 .5 -23.7 .5 -22.2 .5 -18.7 .5 -13.4 .5 -6.9 .5 .3 .5 7.4 .5 13.8 .5 19.0 .5 22.5 .5 23.8 .5 23.0 .5 20.1 .5 15.2 .5 9.0 .5 1.9 .5 -5.3 .5 -12.1 .5 -17.7 .5 -21.8 .5 -23.8 .5 -23.6 .5 -21.2 .5 -17.0 .5 -11.0 .5 -4.2 .5 3.2 .5 10.2 .5 16.3 .5 20.9 .5 23.5 .5 24.1 .5 22.3 .5 18.5 .5 13.0 .5 6.4 .5 -1.0 .5 -8.2 .5 -14.7 .5 -19.8 .5 -23.1 .5 -24.3 .5 -23.2 .5 -20.0 .5 -15.0 .5 -8.4 .5 -1.3 .5 6.2 .5 12.9 .5 18.6 .5 22.4 .5 24.4 .5 23.9 .5 21.3 .5 16.7 .5 10.6 .5 3.5 .5 -4.0 .5 -11.0 .5 -17.2 .5 -21.6 .5 -24.2 .5 -24.4 .5 -22.5 .5 -18.4 .5 -12.6 .5 -5.7 .5 1.7 .5 9.1 .5 15.5 .5 20.7 .5 23.7 .5 24.8 .5 23.4 .5 20.0 .5 14.6 .5 7.9 .5 .5 .5 -7.0 .5 -13.8 .5 -19.4 .5 -23.2 .5 -24.8 .5 -24.3 .5 -21.3 .5 -16.5 .5 -10.1 .5 -2.8 .5 4.8 .5 12.0 .5 18.0 .5 22.4 .5 24.7 .5 24.8 .5 22.6 .5 18.3 .5 12.2 .5 5.1 .5 -2.6 .5 -10.0 .5 -16.4 .5 -21.4 .5 -24.5 .5 -25.1 .5 -23.7 .5 -19.8 .5 -14.3 .5 -7.3 .5 .2 .5 7.9 .5 14.7 .5 20.2 .5 24.0 .5 25.3 .5 24.5 .5 21.3 .5 16.2 .5 9.6 .5 2.1 .5 -5.7 .5 -12.8 .5 -18.9 .5 -23.2 .5 -25.3 .5 -25.1 .5 -22.7 .5 -18.0 .5 -11.8 .5 -4.4 .5 3.4 .5 10.8 .5 17.4 .5 22.2 .5 25.1 .5 25.6 .5 23.7 .5 19.8 .5 13.8 .5 6.7 .5 -1.0 .5 -8.8 .5 -15.6 .5 -21.1 .5 -24.5 .5 -25.9 .5 -24.6 .5 -21.3 .5 -15.8 .5 -9.0 .5 -1.3 .5 6.5 .5 13.7 .5 19.8 .5 23.8 .5 25.8 .5 25.4 .5 22.6 .5 17.8 .5 11.2 .5 3.7 .5 -4.3 .5 -11.7 .5 -18.2 .5 -22.9 .5 -25.6 .5 -25.9 .5 -23.8 .5 -19.5 .5 -13.4 .5 -6.0 .5 1.9 .5 9.6 .5 16.5 .5 21.8 .5 25.2 .5 26.1 .5 24.8 .5 21.1 .5 15.4 .5 8.4 .5 .5 .5 -7.3 .5 -14.7 .5 -20.5 .5 -24.5 .5 -26.3 .5 -25.5 .5 -22.6 .5 -17.4 .5 -10.6 .5 -2.9 .5 5.0 .5 12.7 .5 19.0 .5 23.6 .5 26.1 .5 26.2 .5 23.8 .5 19.2 .5 12.9 .5 5.3 .5 -2.7 .5 -10.5 .5 -17.3 .5 -22.6 .5 -25.7 .5 -26.6 .5 -24.8 .5 -20.9 .5 -15.0 .5 -7.8 .5 .3 .5 8.3 .5 15.5 .5 21.3 .5 25.2 .5 26.6 .5 25.8 .5 22.4 .5 17.0 .5 10.1 .5 2.1 .5 -5.9 .5 -13.5 .5 -19.9 .5 -24.3 .5 -26.6 .5 -26.4 .5 -23.8 .5 -18.9 .5 -12.3 .5 -4.6 .5 3.5 .5 11.4 .5 18.2 .5 23.3 .5 26.3 .5 26.9 .5 24.9 .5 20.6 .5 14.6 .5 7.0 .5 -1.1 .5 -9.2 .5 -16.4 .5 -22.0 .5 -25.8 .5 -27.1 .5 -25.8 .5 -22.3 .5 -16.6 .5 -9.4 .5 -1.4 .5 6.9 .5 14.4 .5 20.6 .5 25.0 .5 27.1 .5 26.6 .5 23.7 .5 18.5 .5 11.8 .5 3.8 .5 -4.4 .5 -12.3 .5 -19.0 .5 -24.1 .5 -26.8 .5 -27.1 .5 -24.9 .5 -20.4 .5 -14.0 .5 -6.3 .5 1.9 .5 10.1 .5 17.3 .5 22.8 .5 26.3 .5 27.5 .5 25.9 .5 22.1 .5 16.1 .5 8.8 .5 .5 .5 -7.7 .5 -15.3 .5 -21.5 .5 -25.6 .5 -27.5 .5 -26.8 .5 -23.5 .5 -18.2 .5 -11.2 .5 -3.0 .5 5.3 .5 13.2 .5 19.9 .5 24.7 .5 27.3 .5 27.4 .5 24.9 .5 20.1 .5 13.4 .5 5.6 .5 -2.8 .5 -11.0 .5 -18.2 .5 -23.6 .5 -26.9 .5 -27.7 .5 -26.0 .5 -21.8 .5 -15.7 .5 -8.1 .5 .3 .5 8.7 .5 16.2 .5 22.2 .5 26.3 .5 27.9 .5 26.9 .5 23.4 .5 17.8 .5 10.5 .5 2.2 .5 -6.2 .5 -14.1 .5 -20.7 .5 -25.5 .5 -27.7 .5 -27.6 .5 -24.8 .5 -19.8 .5 -12.9 .5 -4.8 .5 3.8 .5 11.9 .5 19.0 .5 24.3 .5 27.5 .5 28.0 .5 26.0 .5 21.6 .5 15.1 .5 7.4 .5 -1.2 .5 -9.6 .5 -17.1 .5 -23.0 .5 -26.9 .5 -28.2 .5 -27.0 .5 -23.3 .5 -17.3 .5 -9.8 .5 -1.5 .5 7.2 .5 15.0 .5 21.6 .5 26.1 .5 28.2 .5 27.8 .5 24.7 .5 19.3 .5 12.3 .5 4.0 .5 -4.6 .5 -12.8 .5 -19.9 .5 -25.1 .5 -28.0 .5 -28.2 .5 -26.0 .5 -21.3 .5 -14.6 .5 -6.6 .5 2.1 .5 10.5 .5 18.0 .5 23.8 .5 27.5 .5 28.5 .5 27.1 .5 23.0 .5 16.9 .5 9.1 .5 .6 .5 -8.1 .5 -16.0 .5 -22.4 .5 -26.7 .5 -28.6 .5 -27.9 .5 -24.6 .5 -19.0 .5 -11.6 .5 -3.2 .5 5.6 .5 13.7 .5 20.8 .5 25.8 .5 28.4 .5 28.5 .5 25.9 .5 21.0 .5 14.0 .5 5.8 .5 -2.9 .5 -11.5 .5 -18.9 .5 -24.6 .5 -28.0 .5 -28.9 .5 -27.1 .5 -22.7 .5 -16.4 .5 -8.4 .5 .3 .5 9.1 .5 16.8 .5 23.2 .5 27.4 .5 29.0 .5 28.1 .5 24.3 .5 18.6 .5 10.9 .5 2.4 .5 -6.5 .5 -14.7 .5 -21.6 .5 -26.5 .5 -28.9 .5 -28.7 .5 -25.9 .5 -20.6 .5 -13.4 .5 -5.0 .5 3.9 .5 12.4 .5 19.8 .5 25.3 .5 28.6 .5 29.2 .5 27.1 .5 22.5 .5 15.7 .5 7.7 .5 -1.2 .5 -10.0 .5 -17.8 .5 -24.0 .5 -28.0 .5 -29.4 .5 -28.1 .5 -24.2 .5 -18.1 .5 -10.2 .5 -1.5 .5 7.5 .5 15.6 .5 22.5 .5 27.1 .5 29.4 .5 28.9 .5 25.7 .5 20.2 .5 12.8 .5 4.2 .5 -4.9 .5 -13.3 .5 -20.7 .5 -26.1 .5 -29.1 .5 -29.5 .5 -27.0 .5 -22.2 .5 -15.2 .5 -6.8 .5 2.1 .5 10.9 .5 18.8 .5 24.8 .5 28.6 .5 29.7 .5 28.2 .5 23.9 .5 17.6 .5 9.5 .5 .6 .5 -8.4 .5 -16.6 .5 -23.3 .5 -27.9 .5 -29.8 .5 -29.0 .5 -25.6 .5 -19.7 .5 -12.1 .5 -3.4 .5 5.8 .5 14.4 .5 21.5 .5 26.9 .5 29.6 .5 29.7 .5 27.0 .5 21.8 .5 14.6 .5 6.0 .5 -3.1 .5 -11.9 .5 -19.7 .5 -25.6 .5 -29.1 .5 -30.1 .5 -28.2 .5 -23.7 .5 -17.0 .5 -8.7 .5 .3 .5 9.4 .5 17.6 .5 24.1 .5 28.5 .5 30.2 .5 29.2 .5 25.4 .5 19.2 .5 11.4 .5 2.5 .5 -6.8 .5 -15.3 .5 -22.5 .5 -27.5 .5 -30.1 .5 -29.9 .5 -26.9 .5 -21.4 .5 -14.0 .5 -5.2 .5 4.1 .5 12.9 .5 20.6 .5 26.3 .5 29.8 .5 30.3 .5 28.2 .5 23.4 .5 16.4 .5 8.0 .5 -1.3 .5 -10.4 .5 -18.5 .5 -25.0 .5 -29.1 .5 -30.6 .5 -29.2 .5 -25.2 .5 -18.8 .5 -10.6 .5 -1.5 .5 7.7 .5 16.3 .5 23.3 .5 28.3 .5 30.6 .5 30.0 .5 26.7 .5 21.0 .5 13.3 .5 4.3 .5 -5.0 .5 -13.9 .5 -21.5 .5 -27.1 .5 -30.3 .5 -30.6 .5 -28.1 .5 -23.1 .5 -15.8 .5 -7.1 .5 2.2 .5 11.4 .5 19.5 .5 25.8 .5 29.7 .5 30.9 .5 29.3 .5 24.9 .5 18.2 .5 9.9 .5 .6 .5 -8.7 .5 -17.3 .5 -24.2 .5 -28.9 .5 -31.0 .5 -30.2 .5 -26.6 .5 -20.5 .5 -12.6 .5 -3.4 .5 6.0 .5 14.9 .5 22.4 .5 27.9 .5 30.8 .5 30.8 .5 28.0 .5 22.7 .5 15.2 .5 6.2 .5 -3.2 .5 -12.3 .5 -20.5 .5 -26.6 .5 -30.3 .5 -31.2 .5 -29.3 .5 -24.6 .5 -17.6 .5 -9.1 .5 .3 .5 9.8 .5 18.2 .5 25.1 .5 29.6 .5 31.4 .5 30.2 .5 26.4 .5 20.0 .5 11.8 .5 2.5 .5 -7.0 .5 -15.9 .5 -23.3 .5 -28.6 .5 -31.2 .5 -31.0 .5 -27.9 .5 -22.2 .5 -14.4 .5 -5.4 .5 4.2 .5 13.4 .5 21.3 .5 27.4 .5 30.8 .5 31.4 .5 29.1 .5 24.2 .5 17.0 .5 8.2 .5 -1.3 .5 -10.8 .5 -19.1 .5 -25.9 .5 -30.1 .5 -31.6 .5 -30.2 .5 -26.0 .5 -19.3 .5 -11.0 .5 -1.6 .5 8.0 .5 16.8 .5 24.2 .5 29.1 .5 31.5 .5 31.0 .5 27.6 .5 21.6 .5 13.7 .5 4.4 .5 -5.1 .5 -14.4 .5 -22.2 .5 -27.9 .5 -31.2 .5 -31.5 .5 -28.9 .5 -23.7 .5 -16.3 .5 -7.3 .5 2.3 .5 11.7 .5 20.1 .5 26.5 .5 30.5 .5 31.8 .5 30.1 .5 25.6 .5 18.7 .5 10.1 .5 .6 .5 -9.0 .5 -17.7 .5 -24.9 .5 -29.7 .5 -31.8 .5 -30.9 .5 -27.3 .5 -21.0 .5 -12.9 .5 -3.5 .5 6.2 .5 15.3 .5 23.0 .5 28.6 .5 31.5 .5 31.5 .5 28.7 .5 23.2 .5 15.5 .5 6.4 .5 -3.3 .5 -12.6 .5 -20.9 .5 -27.3 .5 -31.0 .5 -31.9 .5 -29.9 .5 -25.1 .5 -18.1 .5 -9.2 .5 .3 .5 10.0 .5 18.7 .5 25.6 .5 30.2 .5 32.0 .5 30.9 .5 26.9 .5 20.4 .5 12.0 .5 2.6 .5 -7.2 .5 -16.2 .5 -23.8 .5 -29.2 .5 -31.8 .5 -31.6 .5 -28.4 .5 -22.6 .5 -14.7 .5 -5.5 .5 4.3 .5 13.7 .5 21.7 .5 27.9 .5 31.3 .5 32.0 .5 29.7 .5 24.6 .5 17.3 .5 8.4 .5 -1.4 .5 -10.9 .5 -19.6 .5 -26.3 .5 -30.6 .5 -32.2 .5 -30.7 .5 -26.4 .5 -19.7 .5 -11.2 .5 -1.6 .5 8.2 .5 17.1 .5 24.5 .5 29.7 .5 32.0 .5 31.5 .5 28.1 .5 21.9 .5 13.9 .5 4.6 .5 -5.3 .5 -14.6 .5 -22.5 .5 -28.5 .5 -31.6 .5 -32.1 .5 -29.4 .5 -24.0 .5 -16.5 .5 -7.5 .5 2.4 .5 11.9 .5 20.4 .5 26.9 .5 31.0 .5 32.3 .5 30.5 .5 26.0 .5 19.0 .5 10.3 .5 .6 .5 -9.2 .5 -18.0 .5 -25.2 .5 -30.1 .5 -32.3 .5 -31.4 .5 -27.6 .5 -21.4 .5 -13.0 .5 -3.6 .5 6.3 .5 15.5 .5 23.3 .5 29.0 .5 32.0 .5 32.0 .5 29.1 .5 23.5 .5 15.7 .5 6.4 .5 -3.3 .5 -12.9 .5 -21.1 .5 -27.6 .5 -31.4 .5 -32.4 .5 -30.3 .5 -25.4 .5 -18.3 .5 -9.4 .5 .4 .5 10.1 .5 18.9 .5 26.0 .5 30.6 .5 32.4 .5 31.2 .5 27.2 .5 20.7 .5 12.2 .5 2.6 .5 -7.3 .5 -16.4 .5 -24.1 .5 -29.5 .5 -32.2 .5 -32.0 .5 -28.7 .5 -22.9 .5 -14.9 .5 -5.5 .5 4.3 .5 13.8 .5 22.0 .5 28.2 .5 31.7 .5 32.4 .5 30.1 .5 24.9 .5 17.5 .5 8.4 .5 -1.3 .5 -11.1 .5 -19.8 .5 -26.6 .5 -31.0 .5 -32.6 .5 -31.0 .5 -26.8 .5 -20.0 .5 -11.2 .5 -1.6 .5 8.2 .5 17.3 .5 24.8 .5 30.1 .5 32.4 .5 31.9 .5 28.4 .5 22.2 .5 14.1 .5 4.5 .5 -5.3 .5 -14.7 .5 -22.9 .5 -28.7 .5 -32.1 .5 -32.4 .5 -29.8 .5 -24.3 .5 -16.7 .5 -7.5 .5 2.3 .5 12.1 .5 20.6 .5 27.3 .5 31.4 .5 32.6 .5 30.9 .5 26.3 .5 19.2 .5 10.4 .5 .6 .5 -9.2 .5 -18.2 .5 -25.6 .5 -30.5 .5 -32.6 .5 -31.8 .5 -28.0 .5 -21.5 .5 -13.2 .5 -3.6 .5 6.3 .5 15.7 .5 23.6 .5 29.3 .5 32.4 .5 32.4 .5 29.4 .5 23.8 .5 15.9 .5 6.5 .5 -3.3 .5 -13.1 .5 -21.4 .5 -27.9 .5 -31.8 .5 -32.7 .5 -30.7 .5 -25.8 .5 -18.4 .5 -9.5 .5 .4 .5 10.2 .5 19.1 .5 26.3 .5 30.9 .5 32.8 .5 31.6 .5 27.5 .5 20.9 .5 12.3 .5 2.6 .5 -7.3 .5 -16.6 .5 -24.4 .5 -29.8 .5 -32.6 .5 -32.3 .5 -29.0 .5 -23.1 .5 -15.0 .5 -5.6 .5 4.4 .5 13.9 .5 22.3 .5 28.4 .5 32.1 .5 32.7 .5 30.3 .5 25.1 .5 17.7 .5 8.5 .5 -1.4 .5 -11.2 .5 -19.9 .5 -26.9 .5 -31.3 .5 -32.8 .5 -31.3 .5 -27.0 .5 -20.1 .5 -11.4 .5 -1.6 .5 8.3 .5 17.5 .5 25.0 .5 30.3 .5 32.7 .5 32.1 .5 28.5 .5 22.4 .5 14.2 .5 4.6 .5 -5.4 .5 -14.9 .5 -22.9 .5 -29.0 .5 -32.3 .5 -32.6 .5 -29.9 .5 -24.5 .5 -16.8 .5 -7.5 .5 2.4 .5 12.1 .5 20.7 .5 27.4 .5 31.6 .5 32.8 .5 31.1 .5 26.4 .5 19.3 .5 10.4 .5 .6 .5 -9.3 .5 -18.3 .5 -25.6 .5 -30.7 .5 -32.8 .5 -31.8 .5 -28.1 .5 -21.7 .5 -13.2 .5 -3.6 .5 6.4 .5 15.7 .5 23.7 .5 29.4 .5 32.5 .5 32.5 .5 29.5 .5 23.8 .5 15.9 .5 6.6 .5 -3.4 .5 -13.1 .5 -21.5 .5 -27.9 .5 -31.9 .5 -32.8 .5 -30.7 .5 -25.8 .5 -18.5 .5 -9.5 .5 .4 .5 10.3 .5 19.1 .5 26.3 .5 31.0 .5 32.8 .5 31.7 .5 27.5 .5 20.9 .5 12.4 .5 2.6 .5 -7.4 .5 -16.6 .5 -24.4 .5 -29.9 .5 -32.6 .5 -32.3 .5 -29.1 .5 -23.1 .5 -15.1 .5 -5.6 .5 4.4 .5 14.0 .5 22.3 .5 28.5 .5 32.1 .5 32.7 .5 30.4 .5 25.1 .5 17.7 .5 8.5 .5 -1.4 .5 -11.2 .5 -19.9 .5 -26.9 .5 -31.3 .5 -32.9 .5 -31.4 .5 -27.0 .5 -20.1 .5 -11.4 .5 -1.6 .5 8.3 .5 17.5 .5 25.1 .5 30.2 .5 32.8 .5 32.1 .5 28.6 .5 22.4 .5 14.1 .5 4.6 .5 -5.4 .5 -14.8 .5 -23.0 .5 -29.0 .5 -32.3 .5 -32.6 .5 -29.9 .5 -24.5 .5 -16.8 .5 -7.5 .5 2.4 .5 12.1 .5 20.7 .5 27.4 .5 31.6 .5 32.8 .5 31.1 .5 26.4 .5 19.2 .5 10.5 .5 .6 .5 -9.3 .5 -18.3 .5 -25.7 .5 -30.6 .5 -32.7 .5 -31.9 .5 -28.1 .5 -21.6 .5 -13.2 .5 -3.6 .5 6.4 .5 15.7 .5 23.7 .5 29.4 .5 32.4 .5 32.4 .5 29.5 .5 23.8 .5 15.9 .5 6.5 .5 -3.4 .5 -13.0 .5 -21.5 .5 -27.9 .5 -31.8 .5 -32.7 .5 -30.7 .5 -25.7 .5 -18.5 .5 -9.4 .5 .4 .5 10.2 .5 19.1 .5 26.2 .5 30.9 .5 32.8 .5 31.6 .5 27.4 .5 20.9 .5 12.3 .5 2.6 .5 -7.4 .5 -16.6 .5 -24.3 .5 -29.8 .5 -32.5 .5 -32.2 .5 -29.0 .5 -23.0 .5 -15.0 .5 -5.6 .5 4.4 .5 13.9 .5 22.2 .5 28.4 .5 32.0 .5 32.6 .5 30.3 .5 25.0 .5 17.6 .5 8.5 .5 -1.4 .5 -11.2 .5 -19.8 .5 -26.8 .5 -31.2 .5 -32.7 .5 -31.3 .5 -26.9 .5 -20.0 .5 -11.3 .5 -1.6 .5 8.3 .5 17.4 .5 24.9 .5 30.2 .5 32.5 .5 32.0 .5 28.5 .5 22.3 .5 14.1 .5 4.6 .5 -5.4 .5 -14.8 .5 -22.9 .5 -28.8 .5 -32.2 .5 -32.5 .5 -29.8 .5 -24.4 .5 -16.7 .5 -7.5 .5 2.4 .5 12.1 .5 20.6 .5 27.3 .5 31.5 .5 32.7 .5 30.9 .5 26.2 .5 19.2 .5 10.4 .5 .6 .5 -9.3 .5 -18.2 .5 -25.5 .5 -30.5 .5 -32.6 .5 -31.7 .5 -27.9 .5 -21.6 .5 -13.1 .5 -3.6 .5 6.3 .5 15.7 .5 23.5 .5 29.3 .5 32.3 .5 32.3 .5 29.3 .5 23.7 .5 15.8 .5 6.5 .5 -3.3 .5 -13.0 .5 -21.4 .5 -27.8 .5 -31.7 .5 -32.5 .5 -30.6 .5 -25.6 .5 -18.4 .5 -9.4 .5 .4 .5 10.2 .5 19.0 .5 26.2 .5 30.7 .5 32.6 .5 31.5 .5 27.3 .5 20.8 .5 12.2 .5 2.6 .5 -7.3 .5 -16.5 .5 -24.2 .5 -29.7 .5 -32.3 .5 -32.1 .5 -28.9 .5 -22.9 .5 -15.0 .5 -5.5 .5 4.4 .5 13.8 .5 22.1 .5 28.3 .5 31.8 .5 32.5 .5 30.1 .5 25.0 .5 17.5 .5 8.4 .5 -1.4 .5 -11.1 .5 -19.8 .5 -26.6 .5 -31.1 .5 -32.6 .5 -31.1 .5 -26.7 .5 -20.0 .5 -11.3 .5 -1.6 .5 8.3 .5 17.3 .5 24.9 .5 30.0 .5 32.4 .5 31.9 .5 28.3 .5 22.2 .5 14.0 .5 4.6 .5 -5.4 .5 -14.7 .5 -22.8 .5 -28.7 .5 -32.0 .5 -32.3 .5 -29.7 .5 -24.3 .5 -16.6 .5 -7.5 .5 2.4 .5 12.0 .5 20.6 .5 27.1 .5 31.3 .5 32.6 .5 30.7 .5 26.2 .5 19.1 .5 10.3 .5 .6 .5 -9.2 .5 -18.1 .5 -25.5 .5 -30.3 .5 -32.5 .5 -31.5 .5 -27.8 .5 -21.5 .5 -13.1 .5 -3.5 .5 6.3 .5 15.6 .5 23.4 .5 29.1 .5 32.2 .5 32.1 .5 29.2 .5 23.6 .5 15.8 .5 6.5 .5 -3.4 .5 -12.9 .5 -21.3 .5 -27.7 .5 -31.5 .5 -32.4 .5 -30.4 .5 -25.5 .5 -18.3 .5 -9.4 .5 .4 .5 10.2 .5 18.9 .5 26.0 .5 30.6 .5 32.5 .5 31.3 .5 27.2 .5 20.6 .5 12.2 .5 2.5 .5 -7.2 .5 -16.5 .5 -24.0 .5 -29.5 .5 -32.2 .5 -32.0 .5 -28.7 .5 -22.8 .5 -14.8 .5 -5.5 .5 4.3 .5 13.8 .5 22.0 .5 28.1 .5 31.7 .5 32.3 .5 29.9 .5 24.8 .5 17.4 .5 8.4 .5 -1.3 .5 -11.1 .5 -19.7 .5 -26.5 .5 -30.9 .5 -32.4 .5 -30.9 .5 -26.6 .5 -19.8 .5 -11.3 .5 -1.5 .5 8.2 .5 17.2 .5 24.7 .5 29.8 .5 32.3 .5 31.6 .5 28.2 .5 22.1 .5 13.9 .5 4.5 .5 -5.3 .5 -14.6 .5 -22.7 .5 -28.5 .5 -31.8 .5 -32.2 .5 -29.4 .5 -24.2 .5 -16.5 .5 -7.4 .5 2.4 .5 11.9 .5 20.4 .5 27.0 .5 31.1 .5 32.3 .5 30.6 .5 26.0 .5 19.0 .5 10.2 .5 .6 .5 -9.1 .5 -18.1 .5 -25.2 .5 -30.2 .5 -32.2 .5 -31.4 .5 -27.6 .5 -21.3 .5 -13.0 .5 -3.5 .5 6.3 .5 15.5 .5 23.3 .5 28.9 .5 31.9 .5 31.9 .5 29.0 .5 23.4 .5 15.6 .5 6.5 .5 -3.4 .5 -12.8 .5 -21.1 .5 -27.5 .5 -31.3 .5 -32.2 .5 -30.1 .5 -25.4 .5 -18.1 .5 -9.3 .5 .4 .5 10.1 .5 18.8 .5 25.8 .5 30.4 .5 32.2 .5 31.0 .5 27.1 .5 20.5 .5 12.0 .5 2.6 .5 -7.2 .5 -16.4 .5 -23.9 .5 -29.2 .5 -32.0 .5 -31.7 .5 -28.5 .5 -22.7 .5 -14.7 .5 -5.5 .5 4.3 .5 13.7 .5 21.9 .5 27.9 .5 31.4 .5 32.1 .5 29.7 .5 24.6 .5 17.3 .5 8.4 .5 -1.4 .5 -11.0 .5 -19.5 .5 -26.3 .5 -30.7 .5 -32.2 .5 -30.7 .5 -26.4 .5 -19.7 .5 -11.1 .5 -1.6 .5 8.2 .5 17.1 .5 24.5 .5 29.6 .5 32.0 .5 31.5 .5 27.9 .5 21.9 .5 13.9 .5 4.4 .5 -5.2 .5 -14.6 .5 -22.5 .5 -28.3 .5 -31.6 .5 -31.8 .5 -29.3 .5 -24.0 .5 -16.4 .5 -7.3 .5 2.3 .5 11.9 .5 20.2 .5 26.9 .5 30.8 .5 32.1 .5 30.3 .5 25.8 .5 18.9 .5 10.2 .5 .5 .5 -9.0 .5 -17.9 .5 -25.1 .5 -29.9 .5 -32.0 .5 -31.2 .5 -27.4 .5 -21.1 .5 -12.9 .5 -3.5 .5 6.2 .5 15.4 .5 23.1 .5 28.7 .5 31.7 .5 31.7 .5 28.8 .5 23.2 .5 15.5 .5 6.4 .5 -3.3 .5 -12.7 .5 -21.0 .5 -27.3 .5 -31.0 .5 -32.0 .5 -30.0 .5 -25.1 .5 -18.0 .5 -9.2 .5 .4 .5 10.0 .5 18.6 .5 25.6 .5 30.2 .5 32.0 .5 30.8 .5 26.8 .5 20.4 .5 12.0 .5 2.5 .5 -7.2 .5 -16.2 .5 -23.7 .5 -29.1 .5 -31.7 .5 -31.4 .5 -28.3 .5 -22.5 .5 -14.7 .5 -5.4 .5 4.3 .5 13.6 .5 21.6 .5 27.8 .5 31.2 .5 31.8 .5 29.5 .5 24.5 .5 17.1 .5 8.3 .5 -1.4 .5 -10.9 .5 -19.4 .5 -26.1 .5 -30.4 .5 -31.9 .5 -30.5 .5 -26.3 .5 -19.5 .5 -11.0 .5 -1.6 .5 8.1 .5 17.0 .5 24.3 .5 29.4 .5 31.8 .5 31.2 .5 27.7 .5 21.8 .5 13.7 .5 4.5 .5 -5.3 .5 -14.4 .5 -22.3 .5 -28.1 .5 -31.4 .5 -31.6 .5 -29.1 .5 -23.8 .5 -16.3 .5 -7.3 .5 2.4 .5 11.7 .5 20.2 .5 26.6 .5 30.6 .5 31.9 .5 30.1 .5 25.6 .5 18.7 .5 10.1 .5 .6 .5 -9.0 .5 -17.8 .5 -24.9 .5 -29.7 .5 -31.8 .5 -30.9 .5 -27.2 .5 -21.0 .5 -12.8 .5 -3.5 .5 6.2 .5 15.3 .5 22.9 .5 28.5 .5 31.5 .5 31.4 .5 28.6 .5 23.1 .5 15.4 .5 6.4 .5 -3.3 .5 -12.7 .5 -20.8 .5 -27.1 .5 -30.8 .5 -31.8 .5 -29.7 .5 -24.9 .5 -17.9 .5 -9.2 .5 .4 .5 9.9 .5 18.6 .5 25.4 .5 30.0 .5 31.7 .5 30.6 .5 26.6 .5 20.2 .5 11.9 .5 2.5 .5 -7.1 .5 -16.1 .5 -23.5 .5 -28.9 .5 -31.5 .5 -31.2 .5 -28.1 .5 -22.3 .5 -14.5 .5 -5.4 .5 4.2 .5 13.5 .5 21.5 .5 27.5 .5 31.0 .5 31.6 .5 29.3 .5 24.3 .5 17.0 .5 8.2 .5 -1.3 .5 -10.8 .5 -19.3 .5 -25.9 .5 -30.2 .5 -31.7 .5 -30.3 .5 -26.0 .5 -19.4 .5 -11.0 .5 -1.5 .5 8.0 .5 16.9 .5 24.1 .5 29.2 .5 31.5 .5 31.0 .5 27.6 .5 21.5 .5 13.7 .5 4.4 .5 -5.2 .5 -14.3 .5 -22.2 .5 -27.9 .5 -31.1 .5 -31.4 .5 -28.9 .5 -23.6 .5 -16.1 .5 -7.3 .5 2.3 .5 11.7 .5 20.0 .5 26.4 .5 30.4 .5 31.6" stroke="#008000" stroke-width="2.0" fill="none" stroke-linejoin="round"/><line x1="922.5" y1="556" x2="922.5" y2="481" stroke="#ff0000" stroke-width="2"/><line x1="838" y1="470" x2="838" y2="442" stroke="#ff0000" stroke-width="1.6"/><line x1="922.5" y1="556" x2="922.5" y2="662" stroke="#9400d3" stroke-width="2"/></g><line x1="348" y1="556.5" x2="1890" y2="556.5" stroke="#ddd" stroke-opacity="0.45" stroke-width="1" stroke-dasharray="1.2 2.3"/><line x1="328.5" y1="765" x2="328.5" y2="987" stroke="#fff" stroke-width="1"/><rect x="331" y="775" width="9" height="202.5" fill="#c3c3c3"/><polygon points="332.0,772 339.0,772 335.5,768" fill="#c3c3c3"/><polygon points="332.0,980.5 339.0,980.5 335.5,984.5" fill="#c3c3c3"/><line x1="343.5" y1="765" x2="343.5" y2="985" stroke="#0000b0" stroke-width="1" stroke-dasharray="2 2"/><polygon points="346.0,995.5 350.0,991.5 350.0,999.5" fill="#c3c3c3"/><rect x="353.0" y="991" width="1531.0" height="9" fill="#c3c3c3"/><rect x="355.0" y="993" width="5" height="5" fill="#fff"/><rect x="1877.5" y="993" width="5" height="5" fill="#fff"/><polygon points="1887,991.5 1891,995.5 1887,999.5" fill="#c3c3c3"/><line x1="343.5" y1="1002.5" x2="1893.5" y2="1002.5" stroke="#fff" stroke-width="1.2"/><line x1="326" y1="765.5" x2="328.5" y2="765.5" stroke="#fff" stroke-width="1"/><line x1="326" y1="810" x2="328.5" y2="810" stroke="#fff" stroke-width="1"/><line x1="326" y1="854" x2="328.5" y2="854" stroke="#fff" stroke-width="1"/><line x1="326" y1="899" x2="328.5" y2="899" stroke="#fff" stroke-width="1"/><line x1="326" y1="943" x2="328.5" y2="943" stroke="#fff" stroke-width="1"/><line x1="326" y1="987" x2="328.5" y2="987" stroke="#fff" stroke-width="1"/><line x1="343.5" y1="1002.5" x2="343.5" y2="1008" stroke="#fff" stroke-width="1"/><line x1="731.5" y1="1002.5" x2="731.5" y2="1008" stroke="#fff" stroke-width="1"/><line x1="1118.5" y1="1002.5" x2="1118.5" y2="1008" stroke="#fff" stroke-width="1"/><line x1="1505.5" y1="1002.5" x2="1505.5" y2="1008" stroke="#fff" stroke-width="1"/><line x1="1893.5" y1="1002.5" x2="1893.5" y2="1008" stroke="#fff" stroke-width="1"/><rect x="343" y="809" width="1551" height="2" fill="#a52a2a"/><rect x="854" y="805" width="79" height="10" fill="#a52a2a"/><rect x="343" y="853" width="1551" height="2" fill="#ff00ff"/><rect x="854" y="849" width="79" height="10" fill="#ff00ff"/><rect x="343" y="898" width="1551" height="2" fill="#ffa500"/><rect x="849" y="894" width="121" height="10" fill="#ffa500"/><rect x="343" y="942" width="1551" height="2" fill="#0000ff"/><rect x="849" y="938" width="121" height="10" fill="#0000ff"/><line x1="857.5" y1="765" x2="857.5" y2="987" stroke="#fff" stroke-width="1"/><line x1="1372.5" y1="765" x2="1372.5" y2="987" stroke="#fff" stroke-width="1"/><line x1="1886.5" y1="765" x2="1886.5" y2="987" stroke="#fff" stroke-width="1"/><rect x="1763" y="106" width="131" height="66.0" fill="#000" fill-opacity="0.55"/><rect x="1769" y="112" width="10" height="10" fill="#9400d3"/><rect x="1769" y="134" width="10" height="10" fill="#ff0000"/><rect x="1769" y="155" width="10" height="10" fill="#008000"/><rect x="1763" y="433" width="131" height="66.0" fill="#000" fill-opacity="0.55"/><rect x="1769" y="439" width="10" height="10" fill="#9400d3"/><rect x="1769" y="460" width="10" height="10" fill="#ff0000"/><rect x="1769" y="482" width="10" height="10" fill="#008000"/><rect x="1763" y="756.5" width="131" height="86.75" fill="#000" fill-opacity="0.55"/><rect x="1769" y="762" width="10" height="10" fill="#0000ff"/><rect x="1769" y="784" width="10" height="10" fill="#ffa500"/><rect x="1769" y="805" width="10" height="10" fill="#ff00ff"/><rect x="1769" y="826" width="10" height="10" fill="#a52a2a"/></svg><div class="t" style="right:1588.5px;top:169px;font-size:12px;color:#fff">500.0</div><div class="t" style="right:1588.5px;top:228px;font-size:12px;color:#fff">0.0</div><div class="t" style="right:1588.5px;top:288px;font-size:12px;color:#fff">-500.0</div><div class="t" style="left:358px;top:325px;font-size:12px;color:#fff;font-weight:400;">1/1/0001 12:00:00 AM</div><div class="t" style="left:307.5px;top:365px;width:80px;text-align:center;font-size:12px;color:#fff">000 ms</div><div class="t" style="left:694.5px;top:365px;width:80px;text-align:center;font-size:12px;color:#fff">753 ms</div><div class="t" style="left:1080.5px;top:365px;width:80px;text-align:center;font-size:12px;color:#fff">507 ms</div><div class="t" style="left:1467.5px;top:365px;width:80px;text-align:center;font-size:12px;color:#fff">261 ms</div><div class="t" style="left:1853.5px;top:365px;width:80px;text-align:center;font-size:12px;color:#fff">015 ms</div><div class="t" style="left:246px;top:222px;width:22px;text-align:center;font-size:15px;font-weight:700;color:#fff;transform:rotate(-90deg);transform-origin:50% 50%;line-height:14px">(A)</div><div class="t" style="right:1588.5px;top:455px;font-size:12px;color:#fff">5000.0</div><div class="t" style="right:1588.5px;top:551px;font-size:12px;color:#fff">0.0</div><div class="t" style="right:1588.5px;top:647px;font-size:12px;color:#fff">-5000.0</div><div class="t" style="left:358px;top:647px;font-size:12px;color:#fff;font-weight:400;">1/1/0001 12:00:00 AM</div><div class="t" style="left:307.5px;top:688px;width:80px;text-align:center;font-size:12px;color:#fff">000 ms</div><div class="t" style="left:694.5px;top:688px;width:80px;text-align:center;font-size:12px;color:#fff">753 ms</div><div class="t" style="left:1080.5px;top:688px;width:80px;text-align:center;font-size:12px;color:#fff">507 ms</div><div class="t" style="left:1467.5px;top:688px;width:80px;text-align:center;font-size:12px;color:#fff">261 ms</div><div class="t" style="left:1853.5px;top:688px;width:80px;text-align:center;font-size:12px;color:#fff">015 ms</div><div class="t" style="left:246px;top:549px;width:22px;text-align:center;font-size:15px;font-weight:700;color:#fff;transform:rotate(-90deg);transform-origin:50% 50%;line-height:14px">(V)</div><div class="t" style="left:353px;top:971px;font-size:12px;color:#fff;font-weight:400;">1/1/0001 12:00:00 AM</div><div class="t" style="left:867px;top:971px;font-size:12px;color:#fff;font-weight:400;">12:00:01 AM</div><div class="t" style="left:1382px;top:971px;font-size:12px;color:#fff;font-weight:400;">12:00:02 AM</div><div class="t" style="left:303.5px;top:1011px;width:80px;text-align:center;font-size:12px;color:#fff">000 ms</div><div class="t" style="left:691.5px;top:1011px;width:80px;text-align:center;font-size:12px;color:#fff">753 ms</div><div class="t" style="left:1078.5px;top:1011px;width:80px;text-align:center;font-size:12px;color:#fff">507 ms</div><div class="t" style="left:1465.5px;top:1011px;width:80px;text-align:center;font-size:12px;color:#fff">261 ms</div><div class="t" style="left:1853.5px;top:1011px;width:80px;text-align:center;font-size:12px;color:#fff">015 ms</div><div class="t" style="left:1784px;top:114px;font-size:9.4px;line-height:10px;color:#fff;-webkit-text-stroke:0.2px #fff">e1.IR.Inst</div><div class="t" style="left:1784px;top:136px;font-size:9.4px;line-height:10px;color:#fff;-webkit-text-stroke:0.2px #fff">e1.IY.Inst</div><div class="t" style="left:1784px;top:157px;font-size:9.4px;line-height:10px;color:#fff;-webkit-text-stroke:0.2px #fff">e1.IB.Inst</div><div class="t" style="left:1784px;top:441px;font-size:9.4px;line-height:10px;color:#fff;-webkit-text-stroke:0.2px #fff">e1.VR.Inst</div><div class="t" style="left:1784px;top:462px;font-size:9.4px;line-height:10px;color:#fff;-webkit-text-stroke:0.2px #fff">e1.VY.Inst</div><div class="t" style="left:1784px;top:484px;font-size:9.4px;line-height:10px;color:#fff;-webkit-text-stroke:0.2px #fff">e1.VB.Inst</div><div class="t" style="left:1784px;top:764px;font-size:9.4px;line-height:10px;color:#fff;-webkit-text-stroke:0.2px #fff">e1.V1Start</div><div class="t" style="left:1784px;top:786px;font-size:9.4px;line-height:10px;color:#fff;-webkit-text-stroke:0.2px #fff">e1.V1Trip</div><div class="t" style="left:1784px;top:807px;font-size:9.4px;line-height:10px;color:#fff;-webkit-text-stroke:0.2px #fff">e1.V2Start</div><div class="t" style="left:1784px;top:828px;font-size:9.4px;line-height:10px;color:#fff;-webkit-text-stroke:0.2px #fff">e1.V2Trip</div></body></html>
